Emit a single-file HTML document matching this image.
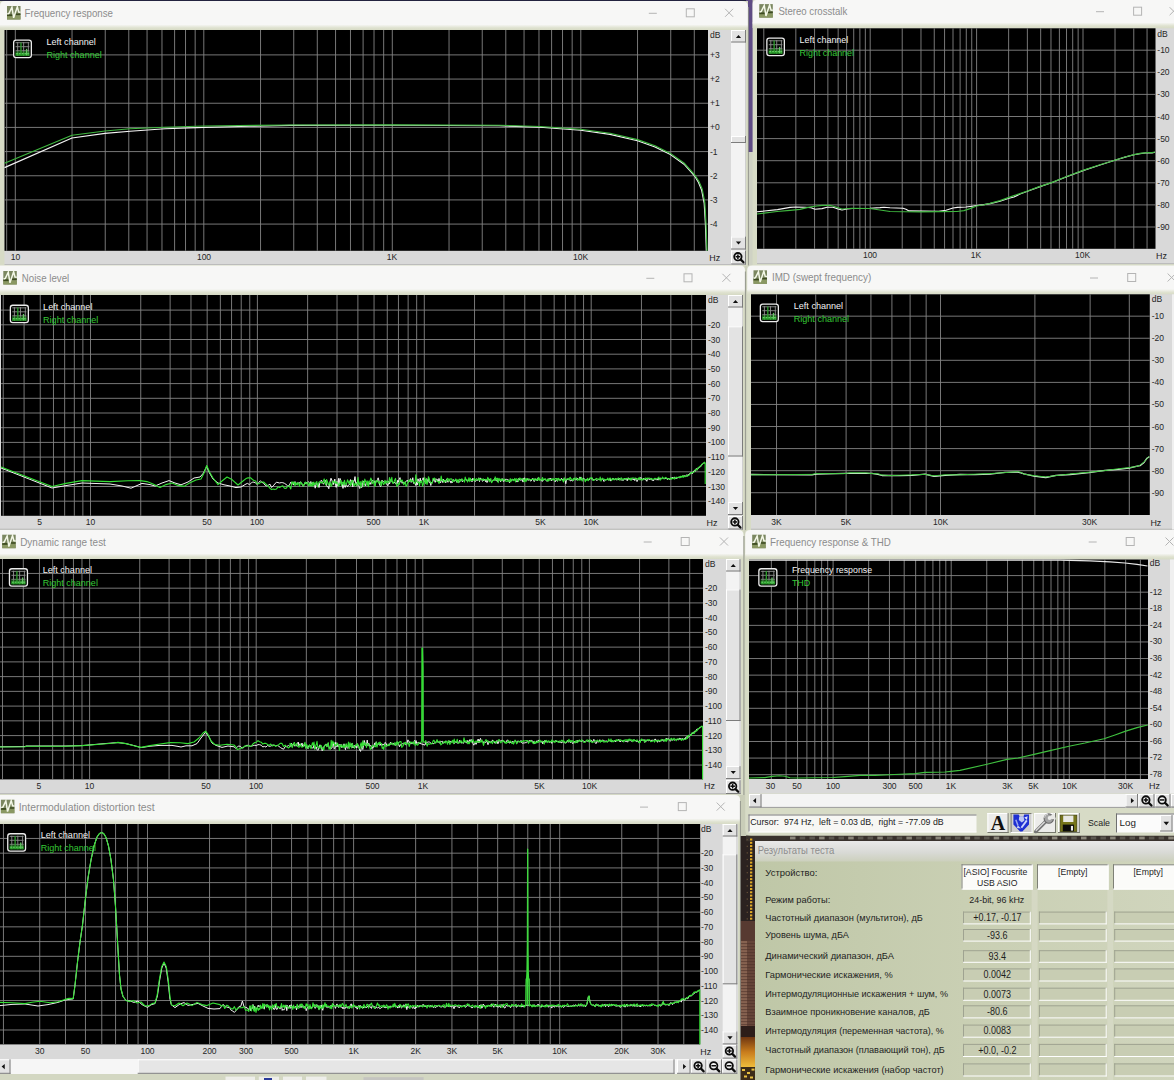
<!DOCTYPE html>
<html lang="en"><head><meta charset="utf-8"><title>RMAA results</title>
<style>html,body{margin:0;padding:0;background:#23233f;}body{width:1174px;height:1080px;overflow:hidden;position:relative;}svg{position:absolute;left:0;top:0;display:block;}svg text{font-family:"Liberation Sans",sans-serif;}</style></head><body>
<svg width="1174" height="1080" viewBox="0 0 1174 1080">
<defs>
<linearGradient id="tb" x1="0" y1="0" x2="0" y2="1"><stop offset="0" stop-color="#f7f7f6"/><stop offset="0.6" stop-color="#dfe2d0"/><stop offset="1" stop-color="#d7dbc6"/></linearGradient>
<linearGradient id="hdr" x1="0" y1="0" x2="0" y2="1"><stop offset="0" stop-color="#e9e9e9"/><stop offset="0.55" stop-color="#d9dad6"/><stop offset="1" stop-color="#ccd0bd"/></linearGradient>
<linearGradient id="panel" x1="0" y1="0" x2="1" y2="0"><stop offset="0" stop-color="#bfc7a7"/><stop offset="0.5" stop-color="#c9cfb3"/><stop offset="1" stop-color="#d0d5bd"/></linearGradient>
<linearGradient id="photo" x1="0" y1="0" x2="0" y2="1"><stop offset="0" stop-color="#3a2c2a"/><stop offset="0.35" stop-color="#5a3f36"/><stop offset="0.7" stop-color="#7a5440"/><stop offset="0.88" stop-color="#b07a2c"/><stop offset="1" stop-color="#d8a030"/></linearGradient>
<linearGradient id="gold" x1="0" y1="0" x2="0" y2="1"><stop offset="0" stop-color="#6e3612"/><stop offset="0.5" stop-color="#c87c1c"/><stop offset="1" stop-color="#efbd3c"/></linearGradient>
</defs>
<rect x="0.00" y="0.00" width="1174.00" height="1080.00" fill="#cdd1bd" />
<rect x="0.00" y="0.00" width="1174.00" height="6.00" fill="#23233f" />
<rect x="746.00" y="0.00" width="8.00" height="152.00" fill="#5f4c85" />
<rect x="746.00" y="152.00" width="8.00" height="114.00" fill="#cfd2c4" />
<rect x="0.00" y="1.00" width="748.00" height="265.00" fill="#d7dbc6" />
<path d="M0,25.5 L0,6 Q0,1 5,1 L742,1 Q748,1 748,7 L748,25.5 Z" fill="#f7f7f6"/>
<rect x="0" y="24.50" width="748" height="5.5" fill="url(#tb)"/>
<line x1="748.40" y1="7.00" x2="748.40" y2="266.00" stroke="#8f9188" stroke-width="0.9" />
<g transform="translate(7.00,6.00) scale(0.993)">
<rect x="0" y="0" width="13.6" height="13.6" fill="#7b8760"/>
<rect x="0" y="9.6" width="13.6" height="4" fill="#8a9863"/>
<rect x="0" y="8.4" width="6" height="1.8" fill="#3c4b1f"/>
<rect x="8.6" y="7.6" width="5" height="1.5" fill="#3c4b1f"/>
<polyline points="0.3,8 2,7.4 5,1.3 6.7,11.9 10.4,0.8 11.8,6.1 13.6,6.3" fill="none" stroke="#f4f8e8" stroke-width="1.5" stroke-linejoin="miter"/>
</g>
<text x="24.50" y="16.80" font-size="10.6" fill="#8c8c8c" text-anchor="start" textLength="88.5" lengthAdjust="spacingAndGlyphs" >Frequency response</text>
<line x1="648.80" y1="13.30" x2="656.80" y2="13.30" stroke="#b4b4b4" stroke-width="1" />
<rect x="686.30" y="8.80" width="8" height="8" fill="none" stroke="#b4b4b4" stroke-width="1"/>
<line x1="725.10" y1="8.80" x2="733.10" y2="16.80" stroke="#b4b4b4" stroke-width="1" />
<line x1="725.10" y1="16.80" x2="733.10" y2="8.80" stroke="#b4b4b4" stroke-width="1" />
<rect x="4.50" y="30.00" width="741.50" height="235.00" fill="#d9d9d9" />
<rect x="4.50" y="30.00" width="703.50" height="220.80" fill="#000000" />
<g stroke="#848484" stroke-width="0.9">
<line x1="6.67" y1="30" x2="6.67" y2="250.8"/>
<line x1="15.30" y1="30" x2="15.30" y2="250.8"/>
<line x1="72.04" y1="30" x2="72.04" y2="250.8"/>
<line x1="105.24" y1="30" x2="105.24" y2="250.8"/>
<line x1="128.79" y1="30" x2="128.79" y2="250.8"/>
<line x1="147.06" y1="30" x2="147.06" y2="250.8"/>
<line x1="161.98" y1="30" x2="161.98" y2="250.8"/>
<line x1="174.60" y1="30" x2="174.60" y2="250.8"/>
<line x1="185.53" y1="30" x2="185.53" y2="250.8"/>
<line x1="195.17" y1="30" x2="195.17" y2="250.8"/>
<line x1="203.80" y1="30" x2="203.80" y2="250.8"/>
<line x1="260.54" y1="30" x2="260.54" y2="250.8"/>
<line x1="293.74" y1="30" x2="293.74" y2="250.8"/>
<line x1="317.29" y1="30" x2="317.29" y2="250.8"/>
<line x1="335.56" y1="30" x2="335.56" y2="250.8"/>
<line x1="350.48" y1="30" x2="350.48" y2="250.8"/>
<line x1="363.10" y1="30" x2="363.10" y2="250.8"/>
<line x1="374.03" y1="30" x2="374.03" y2="250.8"/>
<line x1="383.67" y1="30" x2="383.67" y2="250.8"/>
<line x1="392.30" y1="30" x2="392.30" y2="250.8"/>
<line x1="449.04" y1="30" x2="449.04" y2="250.8"/>
<line x1="482.24" y1="30" x2="482.24" y2="250.8"/>
<line x1="505.79" y1="30" x2="505.79" y2="250.8"/>
<line x1="524.06" y1="30" x2="524.06" y2="250.8"/>
<line x1="538.98" y1="30" x2="538.98" y2="250.8"/>
<line x1="551.60" y1="30" x2="551.60" y2="250.8"/>
<line x1="562.53" y1="30" x2="562.53" y2="250.8"/>
<line x1="572.17" y1="30" x2="572.17" y2="250.8"/>
<line x1="580.80" y1="30" x2="580.80" y2="250.8"/>
<line x1="637.54" y1="30" x2="637.54" y2="250.8"/>
<line x1="670.74" y1="30" x2="670.74" y2="250.8"/>
<line x1="694.29" y1="30" x2="694.29" y2="250.8"/>
<line x1="4.5" y1="54.90" x2="708" y2="54.90"/>
<line x1="4.5" y1="79.07" x2="708" y2="79.07"/>
<line x1="4.5" y1="103.24" x2="708" y2="103.24"/>
<line x1="4.5" y1="127.41" x2="708" y2="127.41"/>
<line x1="4.5" y1="151.58" x2="708" y2="151.58"/>
<line x1="4.5" y1="175.75" x2="708" y2="175.75"/>
<line x1="4.5" y1="199.92" x2="708" y2="199.92"/>
<line x1="4.5" y1="224.09" x2="708" y2="224.09"/>
</g>
<line x1="4.50" y1="264.60" x2="746.00" y2="264.60" stroke="#b9b9b9" stroke-width="1" />
<polyline points="4.5,167.6 72.0,138.0 105.0,133.4 130.0,131.2 165.0,128.8 204.0,127.4 250.0,126.3 290.0,125.4 392.0,125.2 499.0,125.8 540.0,127.3 580.6,130.3 610.0,134.4 637.5,140.8 655.0,147.0 670.4,154.6 684.0,164.2 694.5,175.8 698.5,182.5 701.6,190.0 704.2,203.5 705.4,224.0 706.3,250.8" fill="none" stroke="#f4f4f4" stroke-width="1.15" stroke-linejoin="round" />
<polyline points="4.5,163.3 72.0,135.3 105.0,131.0 130.0,128.8 165.0,127.2 204.0,126.0 290.0,125.0 392.0,124.8 499.0,125.2 540.0,126.5 580.6,129.3 610.0,133.2 637.5,139.6 655.0,145.8 670.4,153.4 684.0,163.0 694.5,174.6 699.0,181.5 702.2,189.0 704.8,202.5 706.0,223.0 707.0,250.8" fill="none" stroke="#3fb83f" stroke-width="1.15" stroke-linejoin="round" />
<rect x="13.65" y="40.05" width="17.70" height="17.60" rx="2.4" fill="#030603" stroke="#ececec" stroke-width="1.3"/>
<line x1="17.66" y1="42.00" x2="17.66" y2="55.70" stroke="#909090" stroke-width="0.9" />
<line x1="23.64" y1="42.00" x2="23.64" y2="55.70" stroke="#909090" stroke-width="0.9" />
<line x1="28.39" y1="42.00" x2="28.39" y2="55.70" stroke="#909090" stroke-width="0.9" />
<line x1="15.60" y1="42.71" x2="29.40" y2="42.71" stroke="#909090" stroke-width="0.9" />
<line x1="15.60" y1="46.68" x2="29.40" y2="46.68" stroke="#909090" stroke-width="0.9" />
<line x1="15.60" y1="50.74" x2="29.40" y2="50.74" stroke="#909090" stroke-width="0.9" />
<rect x="15.40" y="52.70" width="14.20" height="3.2" fill="#2cab2c" opacity="0.85"/>
<rect x="15.40" y="51.10" width="14.20" height="1.8" fill="#2a8a2a" opacity="0.55"/>
<line x1="20.98" y1="42.40" x2="20.98" y2="55.30" stroke="#2f9f2f" stroke-width="1.3" />
<line x1="26.59" y1="48.85" x2="26.59" y2="55.30" stroke="#63c763" stroke-width="1.3" />
<line x1="16.20" y1="53.70" x2="28.80" y2="53.70" stroke="#7fe07f" stroke-width="0.8" stroke-dasharray="1.6 1.2"/>
<text x="46.50" y="44.60" font-size="9.6" fill="#f2f2f2" text-anchor="start" textLength="49.3" lengthAdjust="spacingAndGlyphs" >Left channel</text>
<text x="46.50" y="57.80" font-size="9.6" fill="#36c936" text-anchor="start" textLength="55.2" lengthAdjust="spacingAndGlyphs" >Right channel</text>
<text transform="translate(710.00,38.20) scale(0.87,1)" font-size="9.8" fill="#262626" text-anchor="start" >dB</text>
<text transform="translate(710.00,57.90) scale(0.87,1)" font-size="9.8" fill="#262626" text-anchor="start" >+3</text>
<text transform="translate(710.00,82.07) scale(0.87,1)" font-size="9.8" fill="#262626" text-anchor="start" >+2</text>
<text transform="translate(710.00,106.24) scale(0.87,1)" font-size="9.8" fill="#262626" text-anchor="start" >+1</text>
<text transform="translate(710.00,130.41) scale(0.87,1)" font-size="9.8" fill="#262626" text-anchor="start" >+0</text>
<text transform="translate(710.00,154.58) scale(0.87,1)" font-size="9.8" fill="#262626" text-anchor="start" >-1</text>
<text transform="translate(710.00,178.75) scale(0.87,1)" font-size="9.8" fill="#262626" text-anchor="start" >-2</text>
<text transform="translate(710.00,202.92) scale(0.87,1)" font-size="9.8" fill="#262626" text-anchor="start" >-3</text>
<text transform="translate(710.00,227.09) scale(0.87,1)" font-size="9.8" fill="#262626" text-anchor="start" >-4</text>
<text transform="translate(15.50,260.20) scale(0.87,1)" font-size="9.8" fill="#262626" text-anchor="middle" >10</text>
<text transform="translate(204.00,260.20) scale(0.87,1)" font-size="9.8" fill="#262626" text-anchor="middle" >100</text>
<text transform="translate(392.00,260.20) scale(0.87,1)" font-size="9.8" fill="#262626" text-anchor="middle" >1K</text>
<text transform="translate(580.50,260.20) scale(0.87,1)" font-size="9.8" fill="#262626" text-anchor="middle" >10K</text>
<text transform="translate(709.30,261.00) scale(0.93,1)" font-size="9.6" fill="#262626" text-anchor="start" >Hz</text>
<rect x="731.00" y="30.00" width="15.00" height="219.50" fill="#f3f3f3" />
<line x1="745.50" y1="30.00" x2="745.50" y2="249.50" stroke="#cfcfcf" stroke-width="1" />
<rect x="731.00" y="30.00" width="15.00" height="12.50" fill="#e2e2e2" />
<line x1="731.00" y1="30.50" x2="746.00" y2="30.50" stroke="#ffffff" stroke-width="1" />
<line x1="731.50" y1="30.00" x2="731.50" y2="42.50" stroke="#ffffff" stroke-width="1" />
<line x1="731.00" y1="42.00" x2="746.00" y2="42.00" stroke="#7c7c7c" stroke-width="1" />
<line x1="745.50" y1="30.00" x2="745.50" y2="42.50" stroke="#7c7c7c" stroke-width="1" />
<polygon points="735.90,38.06 741.10,38.06 738.50,34.94" fill="#101010"/>
<rect x="731.00" y="236.50" width="15.00" height="13.00" fill="#e2e2e2" />
<line x1="731.00" y1="237.00" x2="746.00" y2="237.00" stroke="#ffffff" stroke-width="1" />
<line x1="731.50" y1="236.50" x2="731.50" y2="249.50" stroke="#ffffff" stroke-width="1" />
<line x1="731.00" y1="249.00" x2="746.00" y2="249.00" stroke="#7c7c7c" stroke-width="1" />
<line x1="745.50" y1="236.50" x2="745.50" y2="249.50" stroke="#7c7c7c" stroke-width="1" />
<polygon points="735.90,241.44 741.10,241.44 738.50,244.56" fill="#101010"/>
<rect x="731.00" y="136.00" width="15.00" height="7.00" fill="#e3e3e3" />
<line x1="731.00" y1="136.50" x2="746.00" y2="136.50" stroke="#ffffff" stroke-width="1" />
<line x1="731.50" y1="136.00" x2="731.50" y2="143.00" stroke="#ffffff" stroke-width="1" />
<line x1="731.00" y1="142.50" x2="746.00" y2="142.50" stroke="#7c7c7c" stroke-width="1" />
<line x1="745.50" y1="136.00" x2="745.50" y2="143.00" stroke="#7c7c7c" stroke-width="1" />
<rect x="731.00" y="250.50" width="15.00" height="14.00" fill="#e4e4e4" />
<line x1="731.00" y1="251.00" x2="746.00" y2="251.00" stroke="#ffffff" stroke-width="1" />
<line x1="731.50" y1="250.50" x2="731.50" y2="264.50" stroke="#ffffff" stroke-width="1" />
<line x1="731.00" y1="264.00" x2="746.00" y2="264.00" stroke="#7c7c7c" stroke-width="1" />
<line x1="745.50" y1="250.50" x2="745.50" y2="264.50" stroke="#7c7c7c" stroke-width="1" />
<circle cx="737.90" cy="256.70" r="3.7" fill="#f2f2f2" stroke="#0c0c0c" stroke-width="1.8"/>
<line x1="740.80" y1="259.60" x2="743.50" y2="262.30" stroke="#0c0c0c" stroke-width="2.2" stroke-linecap="round"/>
<line x1="735.60" y1="256.70" x2="740.20" y2="256.70" stroke="#0c0c0c" stroke-width="1.5" />
<line x1="737.90" y1="254.40" x2="737.90" y2="259.00" stroke="#0c0c0c" stroke-width="1.5" />
<rect x="752.60" y="0.00" width="427.40" height="266.00" fill="#d7dbc6" />
<path d="M752.6,23.5 L752.6,4 Q752.6,0 756.6,0 L1180,0 Q1180,0 1180,0 L1180,23.5 Z" fill="#f7f7f6"/>
<rect x="752.6" y="22.50" width="427.4" height="5.5" fill="url(#tb)"/>
<g transform="translate(759.30,4.10) scale(0.993)">
<rect x="0" y="0" width="13.6" height="13.6" fill="#7b8760"/>
<rect x="0" y="9.6" width="13.6" height="4" fill="#8a9863"/>
<rect x="0" y="8.4" width="6" height="1.8" fill="#3c4b1f"/>
<rect x="8.6" y="7.6" width="5" height="1.5" fill="#3c4b1f"/>
<polyline points="0.3,8 2,7.4 5,1.3 6.7,11.9 10.4,0.8 11.8,6.1 13.6,6.3" fill="none" stroke="#f4f8e8" stroke-width="1.5" stroke-linejoin="miter"/>
</g>
<text x="778.40" y="15.20" font-size="10.6" fill="#8c8c8c" text-anchor="start" textLength="68.8" lengthAdjust="spacingAndGlyphs" >Stereo crosstalk</text>
<line x1="1096.00" y1="11.70" x2="1104.00" y2="11.70" stroke="#b4b4b4" stroke-width="1" />
<rect x="1133.60" y="7.20" width="8" height="8" fill="none" stroke="#b4b4b4" stroke-width="1"/>
<line x1="1169.60" y1="7.20" x2="1177.60" y2="15.20" stroke="#b4b4b4" stroke-width="1" />
<line x1="1169.60" y1="15.20" x2="1177.60" y2="7.20" stroke="#b4b4b4" stroke-width="1" />
<rect x="757.00" y="28.30" width="417.00" height="235.70" fill="#d9d9d9" />
<rect x="757.00" y="28.30" width="398.50" height="220.50" fill="#000000" />
<g stroke="#848484" stroke-width="0.9">
<line x1="763.80" y1="28.3" x2="763.80" y2="248.8"/>
<line x1="795.83" y1="28.3" x2="795.83" y2="248.8"/>
<line x1="814.57" y1="28.3" x2="814.57" y2="248.8"/>
<line x1="827.86" y1="28.3" x2="827.86" y2="248.8"/>
<line x1="838.17" y1="28.3" x2="838.17" y2="248.8"/>
<line x1="846.60" y1="28.3" x2="846.60" y2="248.8"/>
<line x1="853.72" y1="28.3" x2="853.72" y2="248.8"/>
<line x1="859.89" y1="28.3" x2="859.89" y2="248.8"/>
<line x1="865.33" y1="28.3" x2="865.33" y2="248.8"/>
<line x1="870.20" y1="28.3" x2="870.20" y2="248.8"/>
<line x1="902.23" y1="28.3" x2="902.23" y2="248.8"/>
<line x1="920.97" y1="28.3" x2="920.97" y2="248.8"/>
<line x1="934.26" y1="28.3" x2="934.26" y2="248.8"/>
<line x1="944.57" y1="28.3" x2="944.57" y2="248.8"/>
<line x1="953.00" y1="28.3" x2="953.00" y2="248.8"/>
<line x1="960.12" y1="28.3" x2="960.12" y2="248.8"/>
<line x1="966.29" y1="28.3" x2="966.29" y2="248.8"/>
<line x1="971.73" y1="28.3" x2="971.73" y2="248.8"/>
<line x1="976.60" y1="28.3" x2="976.60" y2="248.8"/>
<line x1="1008.63" y1="28.3" x2="1008.63" y2="248.8"/>
<line x1="1027.37" y1="28.3" x2="1027.37" y2="248.8"/>
<line x1="1040.66" y1="28.3" x2="1040.66" y2="248.8"/>
<line x1="1050.97" y1="28.3" x2="1050.97" y2="248.8"/>
<line x1="1059.40" y1="28.3" x2="1059.40" y2="248.8"/>
<line x1="1066.52" y1="28.3" x2="1066.52" y2="248.8"/>
<line x1="1072.69" y1="28.3" x2="1072.69" y2="248.8"/>
<line x1="1078.13" y1="28.3" x2="1078.13" y2="248.8"/>
<line x1="1083.00" y1="28.3" x2="1083.00" y2="248.8"/>
<line x1="1115.03" y1="28.3" x2="1115.03" y2="248.8"/>
<line x1="1133.77" y1="28.3" x2="1133.77" y2="248.8"/>
<line x1="1147.06" y1="28.3" x2="1147.06" y2="248.8"/>
<line x1="757" y1="50.20" x2="1155.5" y2="50.20"/>
<line x1="757" y1="72.30" x2="1155.5" y2="72.30"/>
<line x1="757" y1="94.40" x2="1155.5" y2="94.40"/>
<line x1="757" y1="116.50" x2="1155.5" y2="116.50"/>
<line x1="757" y1="138.60" x2="1155.5" y2="138.60"/>
<line x1="757" y1="160.70" x2="1155.5" y2="160.70"/>
<line x1="757" y1="182.80" x2="1155.5" y2="182.80"/>
<line x1="757" y1="204.90" x2="1155.5" y2="204.90"/>
<line x1="757" y1="227.00" x2="1155.5" y2="227.00"/>
</g>
<line x1="757.00" y1="263.60" x2="1174.00" y2="263.60" stroke="#b9b9b9" stroke-width="1" />
<polyline points="757.0,211.8 777.5,209.6 790.0,207.4 796.0,207.0 805.0,207.2 811.0,207.7 815.0,209.2 822.0,208.6 827.0,207.2 833.0,207.2 838.0,209.0 842.0,210.0 847.0,209.0 852.4,208.5 870.0,208.2 880.0,207.6 884.0,207.2 890.0,207.8 903.0,208.3 906.0,209.2 909.0,210.9 925.0,211.1 938.6,211.3 946.0,210.3 953.0,208.0 957.4,207.4 966.0,207.0 972.0,206.2 976.5,205.5 984.0,204.6 990.0,203.6 1000.0,201.2 1009.0,198.2 1014.0,197.0 1020.0,194.0 1027.5,191.2 1040.0,186.6 1051.5,182.8 1066.0,177.0 1083.0,170.6 1100.0,165.0 1114.8,160.3 1125.0,157.1 1134.0,154.7 1140.0,153.6 1147.6,152.8 1152.0,152.9 1155.0,152.2" fill="none" stroke="#f4f4f4" stroke-width="1.15" stroke-linejoin="round" />
<polyline points="757.0,214.0 777.0,211.5 790.0,210.4 800.0,209.4 808.0,207.4 815.0,206.2 822.0,205.4 830.0,205.3 836.0,207.0 842.0,209.0 852.0,208.3 870.0,208.5 880.0,210.0 890.0,211.5 905.0,211.8 920.0,211.8 940.0,211.6 957.0,211.5 964.0,210.6 970.0,208.6 976.5,206.0 984.0,204.8 990.0,203.4 1000.0,200.6 1009.0,197.4 1014.0,195.6 1020.0,193.6 1027.5,191.0 1040.0,186.4 1051.5,182.6 1066.0,176.8 1083.0,170.4 1100.0,164.8 1114.8,160.2 1125.0,157.0 1134.0,154.6 1140.0,153.4 1147.6,152.6 1152.0,152.6 1155.0,152.0" fill="none" stroke="#3fb83f" stroke-width="1.15" stroke-linejoin="round" />
<rect x="766.85" y="38.15" width="17.50" height="17.40" rx="2.4" fill="#030603" stroke="#ececec" stroke-width="1.3"/>
<line x1="770.81" y1="40.10" x2="770.81" y2="53.60" stroke="#909090" stroke-width="0.9" />
<line x1="776.73" y1="40.10" x2="776.73" y2="53.60" stroke="#909090" stroke-width="0.9" />
<line x1="781.43" y1="40.10" x2="781.43" y2="53.60" stroke="#909090" stroke-width="0.9" />
<line x1="768.80" y1="40.77" x2="782.40" y2="40.77" stroke="#909090" stroke-width="0.9" />
<line x1="768.80" y1="44.70" x2="782.40" y2="44.70" stroke="#909090" stroke-width="0.9" />
<line x1="768.80" y1="48.72" x2="782.40" y2="48.72" stroke="#909090" stroke-width="0.9" />
<rect x="768.60" y="50.60" width="14.00" height="3.2" fill="#2cab2c" opacity="0.85"/>
<rect x="768.60" y="49.00" width="14.00" height="1.8" fill="#2a8a2a" opacity="0.55"/>
<line x1="774.10" y1="40.50" x2="774.10" y2="53.20" stroke="#2f9f2f" stroke-width="1.3" />
<line x1="779.64" y1="46.85" x2="779.64" y2="53.20" stroke="#63c763" stroke-width="1.3" />
<line x1="769.40" y1="51.60" x2="781.80" y2="51.60" stroke="#7fe07f" stroke-width="0.8" stroke-dasharray="1.6 1.2"/>
<text x="799.60" y="42.80" font-size="9.6" fill="#f2f2f2" text-anchor="start" textLength="48.7" lengthAdjust="spacingAndGlyphs" >Left channel</text>
<text x="799.60" y="55.80" font-size="9.6" fill="#36c936" text-anchor="start" textLength="54.4" lengthAdjust="spacingAndGlyphs" >Right channel</text>
<text transform="translate(1157.30,36.70) scale(0.87,1)" font-size="9.8" fill="#262626" text-anchor="start" >dB</text>
<text transform="translate(1157.30,53.20) scale(0.87,1)" font-size="9.8" fill="#262626" text-anchor="start" >-10</text>
<text transform="translate(1157.30,75.30) scale(0.87,1)" font-size="9.8" fill="#262626" text-anchor="start" >-20</text>
<text transform="translate(1157.30,97.40) scale(0.87,1)" font-size="9.8" fill="#262626" text-anchor="start" >-30</text>
<text transform="translate(1157.30,119.50) scale(0.87,1)" font-size="9.8" fill="#262626" text-anchor="start" >-40</text>
<text transform="translate(1157.30,141.60) scale(0.87,1)" font-size="9.8" fill="#262626" text-anchor="start" >-50</text>
<text transform="translate(1157.30,163.70) scale(0.87,1)" font-size="9.8" fill="#262626" text-anchor="start" >-60</text>
<text transform="translate(1157.30,185.80) scale(0.87,1)" font-size="9.8" fill="#262626" text-anchor="start" >-70</text>
<text transform="translate(1157.30,207.90) scale(0.87,1)" font-size="9.8" fill="#262626" text-anchor="start" >-80</text>
<text transform="translate(1157.30,230.00) scale(0.87,1)" font-size="9.8" fill="#262626" text-anchor="start" >-90</text>
<text transform="translate(870.00,257.90) scale(0.87,1)" font-size="9.8" fill="#262626" text-anchor="middle" >100</text>
<text transform="translate(976.00,257.90) scale(0.87,1)" font-size="9.8" fill="#262626" text-anchor="middle" >1K</text>
<text transform="translate(1082.50,257.90) scale(0.87,1)" font-size="9.8" fill="#262626" text-anchor="middle" >10K</text>
<text transform="translate(1156.00,258.50) scale(0.93,1)" font-size="9.6" fill="#262626" text-anchor="start" >Hz</text>
<rect x="0.00" y="265.50" width="745.00" height="265.50" fill="#d7dbc6" />
<path d="M0,290.0 L0,265.5 Q0,265.5 0,265.5 L740,265.5 Q745,265.5 745,270.5 L745,290.0 Z" fill="#f7f7f6"/>
<rect x="0" y="289.00" width="745" height="5.5" fill="url(#tb)"/>
<line x1="745.40" y1="271.50" x2="745.40" y2="531.00" stroke="#8f9188" stroke-width="0.9" />
<g transform="translate(3.30,271.00) scale(0.993)">
<rect x="0" y="0" width="13.6" height="13.6" fill="#7b8760"/>
<rect x="0" y="9.6" width="13.6" height="4" fill="#8a9863"/>
<rect x="0" y="8.4" width="6" height="1.8" fill="#3c4b1f"/>
<rect x="8.6" y="7.6" width="5" height="1.5" fill="#3c4b1f"/>
<polyline points="0.3,8 2,7.4 5,1.3 6.7,11.9 10.4,0.8 11.8,6.1 13.6,6.3" fill="none" stroke="#f4f8e8" stroke-width="1.5" stroke-linejoin="miter"/>
</g>
<text x="21.80" y="281.80" font-size="10.6" fill="#8c8c8c" text-anchor="start" textLength="47.4" lengthAdjust="spacingAndGlyphs" >Noise level</text>
<line x1="646.30" y1="278.30" x2="654.30" y2="278.30" stroke="#b4b4b4" stroke-width="1" />
<rect x="684.00" y="273.80" width="8" height="8" fill="none" stroke="#b4b4b4" stroke-width="1"/>
<line x1="722.40" y1="273.80" x2="730.40" y2="281.80" stroke="#b4b4b4" stroke-width="1" />
<line x1="722.40" y1="281.80" x2="730.40" y2="273.80" stroke="#b4b4b4" stroke-width="1" />
<rect x="0.00" y="295.00" width="743.00" height="234.50" fill="#d9d9d9" />
<rect x="1.00" y="295.00" width="705.00" height="220.80" fill="#000000" />
<g stroke="#848484" stroke-width="0.9">
<line x1="3.23" y1="295" x2="3.23" y2="515.8"/>
<line x1="24.08" y1="295" x2="24.08" y2="515.8"/>
<line x1="40.26" y1="295" x2="40.26" y2="515.8"/>
<line x1="53.47" y1="295" x2="53.47" y2="515.8"/>
<line x1="64.65" y1="295" x2="64.65" y2="515.8"/>
<line x1="74.33" y1="295" x2="74.33" y2="515.8"/>
<line x1="82.86" y1="295" x2="82.86" y2="515.8"/>
<line x1="90.50" y1="295" x2="90.50" y2="515.8"/>
<line x1="140.74" y1="295" x2="140.74" y2="515.8"/>
<line x1="170.13" y1="295" x2="170.13" y2="515.8"/>
<line x1="190.98" y1="295" x2="190.98" y2="515.8"/>
<line x1="207.16" y1="295" x2="207.16" y2="515.8"/>
<line x1="220.37" y1="295" x2="220.37" y2="515.8"/>
<line x1="231.55" y1="295" x2="231.55" y2="515.8"/>
<line x1="241.23" y1="295" x2="241.23" y2="515.8"/>
<line x1="249.76" y1="295" x2="249.76" y2="515.8"/>
<line x1="257.40" y1="295" x2="257.40" y2="515.8"/>
<line x1="307.64" y1="295" x2="307.64" y2="515.8"/>
<line x1="337.03" y1="295" x2="337.03" y2="515.8"/>
<line x1="357.88" y1="295" x2="357.88" y2="515.8"/>
<line x1="374.06" y1="295" x2="374.06" y2="515.8"/>
<line x1="387.27" y1="295" x2="387.27" y2="515.8"/>
<line x1="398.45" y1="295" x2="398.45" y2="515.8"/>
<line x1="408.13" y1="295" x2="408.13" y2="515.8"/>
<line x1="416.66" y1="295" x2="416.66" y2="515.8"/>
<line x1="424.30" y1="295" x2="424.30" y2="515.8"/>
<line x1="474.54" y1="295" x2="474.54" y2="515.8"/>
<line x1="503.93" y1="295" x2="503.93" y2="515.8"/>
<line x1="524.78" y1="295" x2="524.78" y2="515.8"/>
<line x1="540.96" y1="295" x2="540.96" y2="515.8"/>
<line x1="554.17" y1="295" x2="554.17" y2="515.8"/>
<line x1="565.35" y1="295" x2="565.35" y2="515.8"/>
<line x1="575.03" y1="295" x2="575.03" y2="515.8"/>
<line x1="583.56" y1="295" x2="583.56" y2="515.8"/>
<line x1="591.20" y1="295" x2="591.20" y2="515.8"/>
<line x1="641.44" y1="295" x2="641.44" y2="515.8"/>
<line x1="670.83" y1="295" x2="670.83" y2="515.8"/>
<line x1="691.68" y1="295" x2="691.68" y2="515.8"/>
<line x1="1" y1="310.10" x2="706" y2="310.10"/>
<line x1="1" y1="324.80" x2="706" y2="324.80"/>
<line x1="1" y1="339.50" x2="706" y2="339.50"/>
<line x1="1" y1="354.20" x2="706" y2="354.20"/>
<line x1="1" y1="368.90" x2="706" y2="368.90"/>
<line x1="1" y1="383.60" x2="706" y2="383.60"/>
<line x1="1" y1="398.30" x2="706" y2="398.30"/>
<line x1="1" y1="413.00" x2="706" y2="413.00"/>
<line x1="1" y1="427.70" x2="706" y2="427.70"/>
<line x1="1" y1="442.40" x2="706" y2="442.40"/>
<line x1="1" y1="457.10" x2="706" y2="457.10"/>
<line x1="1" y1="471.80" x2="706" y2="471.80"/>
<line x1="1" y1="486.50" x2="706" y2="486.50"/>
<line x1="1" y1="501.20" x2="706" y2="501.20"/>
</g>
<line x1="0.00" y1="529.20" x2="743.00" y2="529.20" stroke="#b9b9b9" stroke-width="1" />
<polyline points="1.0,468.0 52.0,488.0 66.0,485.6 82.0,483.0 110.0,484.0 122.0,486.0 131.0,488.2 142.0,483.4 150.0,484.6 155.0,486.0 162.0,483.0 169.0,480.6 175.0,483.0 181.0,484.8 188.0,482.0 194.0,478.0 200.0,477.0 203.5,473.0 206.7,466.5 209.5,473.0 213.0,479.0 218.0,483.0 224.0,484.8 230.0,486.0 236.0,487.6 241.0,487.0 246.0,484.0 247.6,483.4 249.2,484.5 250.8,483.6 252.4,482.0 254.0,482.2 255.6,483.0 257.2,484.4 258.8,482.4 260.4,480.8 262.0,482.4 263.6,483.2 265.2,485.3 266.8,486.0 268.4,485.1 270.0,484.2 271.6,487.5 273.2,485.9 274.8,484.0 276.4,482.2 278.0,482.6 279.6,483.0 281.2,482.6 282.8,482.7 284.4,483.3 286.0,484.4 287.6,485.8 289.2,485.5 290.8,482.1 292.0,483.9 292.8,482.5 293.5,485.1 294.2,482.9 295.0,481.6 295.8,484.6 296.5,484.1 297.2,484.5 298.0,482.5 298.8,484.0 299.5,482.7 300.2,481.9 301.0,482.3 301.8,484.3 302.5,484.1 303.2,486.2 304.0,485.1 304.8,482.7 305.5,483.9 306.2,482.1 307.0,483.4 307.8,482.2 308.5,481.7 309.2,482.5 310.0,485.5 310.8,481.5 311.5,484.0 312.2,484.1 313.0,482.3 313.8,483.7 314.5,483.9 315.2,488.2 316.0,484.3 316.8,483.4 317.5,486.2 318.2,484.2 319.0,487.5 319.8,482.6 320.5,482.3 321.2,480.3 322.0,480.8 322.8,483.5 323.5,484.1 324.2,482.8 325.0,482.1 325.8,480.3 326.5,485.2 327.2,486.7 328.0,486.5 328.8,488.7 329.5,484.2 330.2,481.2 331.0,478.2 331.8,480.1 332.5,482.3 333.2,484.7 334.0,482.0 334.8,479.0 335.5,485.6 336.2,487.4 337.0,481.5 337.8,486.1 338.5,478.4 339.2,484.4 340.0,478.4 340.8,480.6 341.5,485.2 342.2,484.1 343.0,488.4 343.8,483.2 344.5,486.5 345.2,487.4 346.0,484.6 346.8,485.2 347.5,486.8 348.2,485.5 349.0,485.1 349.8,483.6 350.5,479.6 351.2,481.0 352.0,481.2 352.8,486.9 353.5,480.8 354.2,481.3 355.0,476.6 355.8,484.0 356.5,482.5 357.2,484.8 358.0,485.3 358.8,485.3 359.5,488.3 360.2,488.2 361.0,487.3 361.8,487.5 362.5,484.4 363.2,480.9 364.0,484.8 364.8,484.2 365.5,485.8 366.2,482.7 367.0,483.6 367.8,482.2 368.5,485.4 369.2,484.1 370.0,482.4 370.8,484.4 371.5,481.3 372.2,480.6 373.0,480.9 373.8,482.1 374.5,481.4 375.2,483.8 376.0,480.9 376.8,482.0 377.5,479.4 378.2,477.8 379.0,481.0 379.8,485.4 380.5,486.6 381.2,485.6 382.0,480.1 382.8,481.9 383.5,481.6 384.2,482.2 385.0,482.9 385.8,482.4 386.5,483.5 387.2,485.0 388.0,485.8 388.8,481.3 389.5,484.0 390.2,481.5 391.0,479.6 391.8,481.2 392.5,482.4 393.2,483.3 394.0,482.0 394.8,483.1 395.5,483.7 396.2,482.5 397.0,484.1 397.8,480.2 398.5,482.0 399.2,479.5 400.0,477.6 400.8,482.2 401.5,481.2 402.2,483.3 403.0,482.0 403.8,482.8 404.5,483.7 405.2,482.3 406.0,481.1 406.8,480.9 407.5,480.2 408.2,482.0 409.0,481.9 409.8,480.4 410.5,478.6 411.2,482.4 412.0,481.1 412.8,477.7 413.5,483.4 414.2,482.1 415.0,483.1 415.8,485.5 416.5,482.0 417.2,485.0 418.0,478.8 418.8,480.9 419.5,482.5 420.2,478.1 421.0,482.5 421.8,480.4 422.5,479.5 423.2,477.7 424.0,481.6 424.8,479.6 425.5,482.6 426.2,478.8 427.0,479.3 427.8,481.8 428.5,477.6 429.2,482.5 430.0,481.9 430.8,485.5 431.5,482.5 432.2,482.3 433.0,481.1 433.8,478.5 434.5,480.4 435.2,482.4 436.0,478.7 436.8,479.7 437.5,479.6 438.2,482.1 439.0,478.4 439.8,482.1 440.5,483.0 441.2,479.9 442.0,480.8 442.8,482.6 443.5,479.2 444.2,481.8 445.0,480.1 445.8,482.8 446.5,479.1 447.2,480.4 448.0,482.3 448.8,480.6 449.5,480.8 450.2,480.9 451.0,483.1 451.8,481.1 452.5,482.5 453.2,479.5 454.0,480.7 454.8,481.0 455.5,480.2 456.2,480.8 457.0,482.5 457.8,481.7 458.5,481.6 459.2,482.0 460.0,481.6 460.8,479.3 461.5,479.1 462.2,481.5 463.0,481.3 463.8,480.1 464.5,480.2 465.2,479.4 466.0,480.0 466.8,480.1 467.5,481.2 468.2,480.7 469.0,480.1 469.8,479.3 470.5,480.0 471.2,479.1 472.0,481.8 472.8,478.2 473.5,480.1 474.2,479.4 475.0,481.5 475.8,480.9 476.5,480.3 477.2,480.5 478.0,479.9 478.8,477.8 479.5,481.6 480.2,478.1 481.0,478.6 481.8,479.4 482.5,481.4 483.2,480.3 484.0,480.3 484.8,479.2 485.5,481.7 486.2,479.7 487.0,482.6 487.8,480.4 488.5,479.1 489.2,479.0 490.0,480.5 490.8,480.9 491.5,481.7 492.2,481.1 493.0,480.3 493.8,480.4 494.5,478.6 495.2,479.0 496.0,480.8 496.8,480.6 497.5,481.6 498.2,479.0 499.0,480.2 499.8,479.2 500.5,481.7 501.2,480.8 502.0,478.7 502.8,479.2 503.5,481.5 504.2,480.8 505.0,480.9 505.8,479.0 506.5,479.2 507.2,479.9 508.0,479.4 508.8,480.5 509.5,482.9 510.2,481.6 511.0,480.1 511.8,480.6 512.5,479.4 513.2,479.6 514.0,480.3 514.8,479.3 515.5,479.4 516.2,480.7 517.0,482.1 517.8,480.7 518.5,478.7 519.2,478.9 520.0,480.4 520.8,479.8 521.5,480.2 522.2,479.0 523.0,482.1 523.8,478.1 524.5,477.9 525.2,480.9 526.0,479.6 526.8,480.2 527.5,478.5 528.2,480.5 529.0,478.7 529.8,479.7 530.5,481.1 531.2,480.9 532.0,479.6 532.8,478.3 533.5,479.9 534.2,481.6 535.0,480.2 535.8,478.9 536.5,479.4 537.2,480.9 538.0,477.6 538.8,478.2 539.5,479.7 540.2,479.6 541.0,479.5 541.8,481.2 542.5,481.3 543.2,479.3 544.0,480.1 544.8,479.2 545.5,479.7 546.2,480.7 547.0,481.2 547.8,480.9 548.5,478.8 549.2,478.5 550.0,479.2 550.8,478.2 551.5,480.8 552.2,480.1 553.0,479.1 553.8,479.5 554.5,479.8 555.2,481.8 556.0,480.1 556.8,479.9 557.5,481.3 558.2,478.4 559.0,478.8 559.8,480.2 560.5,480.3 561.2,478.5 562.0,478.7 562.8,480.0 563.5,478.9 564.2,478.9 565.0,479.4 565.8,483.7 566.5,479.2 567.2,479.4 568.0,479.5 568.8,479.1 569.5,479.8 570.2,480.8 571.0,480.8 571.8,480.0 572.5,481.1 573.2,480.6 574.0,478.1 574.8,478.6 575.5,479.9 576.2,480.1 577.0,478.6 577.8,478.8 578.5,479.5 579.2,480.0 580.0,476.9 580.8,479.6 581.5,479.7 582.2,479.2 583.0,478.8 583.8,478.2 584.5,479.4 585.2,480.0 586.0,479.7 586.8,479.4 587.5,479.4 588.2,479.5 589.0,480.2 589.8,479.1 590.5,478.3 591.2,478.9 592.0,478.4 592.8,478.8 593.5,479.8 594.2,479.9 595.0,479.6 595.8,479.3 596.5,480.4 597.2,480.5 598.0,479.7 598.8,479.2 599.5,479.5 600.2,479.7 601.0,479.7 601.8,479.1 602.5,478.8 603.2,479.8 604.0,481.5 604.8,480.6 605.5,479.8 606.2,479.7 607.0,479.4 607.8,479.3 608.5,479.2 609.2,480.3 610.0,478.4 610.8,481.0 611.5,480.6 612.2,478.8 613.0,478.2 613.8,478.9 614.5,480.1 615.2,479.1 616.0,478.3 616.8,480.2 617.5,478.8 618.2,479.9 619.0,479.1 619.8,478.3 620.5,479.8 621.2,480.0 622.0,479.9 622.8,480.3 623.5,480.3 624.2,478.7 625.0,479.0 625.8,479.2 626.5,478.3 627.2,480.8 628.0,478.4 628.8,477.9 629.5,479.2 630.2,479.5 631.0,479.9 631.8,479.6 632.5,478.7 633.2,479.9 634.0,478.7 634.8,480.6 635.5,478.6 636.2,478.3 637.0,481.6 637.8,480.1 638.5,478.6 639.2,479.1 640.0,478.8 640.8,477.4 641.5,478.8 642.2,480.2 643.0,478.8 643.8,478.6 644.5,479.3 645.2,479.6 646.0,479.8 646.8,481.3 647.5,479.2 648.2,478.4 649.0,479.7 649.8,479.1 650.5,479.3 651.2,478.2 652.0,480.4 652.8,480.0 653.5,480.8 654.2,479.4 655.0,478.3 655.8,479.7 656.5,479.8 657.2,479.1 658.0,480.2 658.8,477.9 659.5,478.9 660.2,478.0 661.0,478.5 661.8,478.7 662.5,477.6 663.2,478.1 664.0,478.9 664.8,478.5 665.5,478.4 666.2,478.3 667.0,479.3 667.8,479.3 668.5,478.2 669.2,479.1 670.0,479.6 670.8,477.9 671.5,478.9 672.2,477.1 673.0,478.3 673.8,477.4 674.5,477.3 675.2,477.9 676.0,478.9 676.8,477.4 677.5,478.1 678.2,477.5 679.0,477.2 679.8,477.0 680.5,477.1 681.2,476.7 682.0,476.7 682.8,476.0 683.5,476.0 684.2,476.2 685.0,475.5 685.8,476.6 686.5,474.8 687.2,476.3 688.0,474.4 688.8,475.0 689.5,474.1 690.2,472.9 691.0,473.3 691.8,472.8 692.5,473.7 693.2,472.1 694.0,470.6 694.8,470.5 695.5,471.2 696.2,468.7 697.0,469.1 697.8,469.2 698.5,467.5 699.2,467.6 700.0,466.8 700.8,466.6 701.5,464.6 702.2,464.7 703.0,463.5 703.8,463.0 704.5,463.2" fill="none" stroke="#f4f4f4" stroke-width="1.0" stroke-linejoin="round" />
<polyline points="1.0,467.0 52.0,486.5 66.0,483.4 82.0,480.6 110.0,481.6 128.0,480.8 140.0,480.6 147.0,481.6 153.0,484.0 160.0,487.4 166.0,484.6 172.0,483.0 178.0,485.4 184.0,486.4 190.0,482.8 196.0,480.0 201.0,479.0 204.0,473.0 206.7,465.5 209.5,472.0 213.0,478.0 218.0,484.6 222.0,481.0 227.0,477.0 232.0,479.6 238.0,485.0 243.0,481.0 246.0,478.6 247.6,477.9 249.2,477.9 250.8,477.8 252.4,479.5 254.0,480.4 255.6,480.9 257.2,484.0 258.8,483.7 260.4,482.6 262.0,482.0 263.6,482.0 265.2,483.5 266.8,484.9 268.4,486.3 270.0,488.3 271.6,489.6 273.2,489.0 274.8,489.6 276.4,489.1 278.0,486.9 279.6,487.4 281.2,486.6 282.8,485.7 284.4,488.3 286.0,488.4 287.6,486.5 289.2,485.7 290.8,489.0 292.0,481.6 292.8,484.0 293.5,482.1 294.2,482.0 295.0,485.9 295.8,482.5 296.5,484.3 297.2,484.9 298.0,482.4 298.8,484.1 299.5,486.4 300.2,483.4 301.0,482.2 301.8,483.9 302.5,484.1 303.2,486.1 304.0,484.9 304.8,483.3 305.5,482.1 306.2,484.0 307.0,482.6 307.8,482.7 308.5,486.0 309.2,484.9 310.0,482.8 310.8,486.0 311.5,485.8 312.2,482.4 313.0,486.3 313.8,482.0 314.5,484.7 315.2,484.2 316.0,482.4 316.8,481.5 317.5,486.9 318.2,483.9 319.0,482.2 319.8,481.6 320.5,482.0 321.2,483.1 322.0,482.3 322.8,482.9 323.5,480.8 324.2,478.9 325.0,483.2 325.8,484.9 326.5,479.6 327.2,480.9 328.0,484.0 328.8,485.2 329.5,482.4 330.2,482.3 331.0,486.5 331.8,485.2 332.5,481.4 333.2,481.1 334.0,482.2 334.8,483.0 335.5,480.8 336.2,483.6 337.0,482.2 337.8,483.3 338.5,486.3 339.2,485.2 340.0,482.7 340.8,480.2 341.5,485.7 342.2,483.1 343.0,482.0 343.8,485.2 344.5,480.2 345.2,483.5 346.0,484.7 346.8,483.1 347.5,479.8 348.2,481.4 349.0,483.6 349.8,481.0 350.5,485.6 351.2,484.9 352.0,480.2 352.8,480.8 353.5,483.8 354.2,485.9 355.0,483.3 355.8,484.1 356.5,485.9 357.2,483.3 358.0,477.3 358.8,485.2 359.5,484.0 360.2,481.5 361.0,487.5 361.8,482.1 362.5,480.7 363.2,482.0 364.0,486.3 364.8,479.1 365.5,481.7 366.2,481.1 367.0,485.4 367.8,480.8 368.5,486.8 369.2,481.5 370.0,481.1 370.8,478.1 371.5,479.4 372.2,483.7 373.0,482.9 373.8,480.3 374.5,485.6 375.2,486.2 376.0,480.6 376.8,481.9 377.5,480.8 378.2,482.1 379.0,483.6 379.8,481.2 380.5,482.6 381.2,485.8 382.0,480.9 382.8,482.5 383.5,484.6 384.2,483.9 385.0,480.2 385.8,483.6 386.5,481.5 387.2,480.9 388.0,482.9 388.8,482.7 389.5,477.5 390.2,480.2 391.0,481.7 391.8,477.3 392.5,482.6 393.2,483.4 394.0,481.8 394.8,480.0 395.5,478.4 396.2,483.6 397.0,486.5 397.8,484.9 398.5,483.3 399.2,484.6 400.0,480.8 400.8,479.7 401.5,481.2 402.2,480.2 403.0,482.1 403.8,484.8 404.5,482.8 405.2,481.7 406.0,486.4 406.8,485.8 407.5,483.1 408.2,482.2 409.0,480.0 409.8,481.4 410.5,481.0 411.2,479.5 412.0,481.6 412.8,480.7 413.5,481.7 414.2,482.7 415.0,483.9 415.8,474.9 416.5,479.8 417.2,482.1 418.0,482.5 418.8,482.0 419.5,485.8 420.2,481.3 421.0,482.3 421.8,480.8 422.5,486.3 423.2,484.3 424.0,480.9 424.8,477.5 425.5,483.6 426.2,479.2 427.0,484.5 427.8,481.7 428.5,476.7 429.2,478.6 430.0,481.4 430.8,482.7 431.5,483.2 432.2,483.3 433.0,478.3 433.8,478.9 434.5,478.0 435.2,479.6 436.0,480.4 436.8,481.3 437.5,481.5 438.2,481.2 439.0,483.5 439.8,481.5 440.5,480.3 441.2,476.0 442.0,480.5 442.8,479.7 443.5,481.3 444.2,482.1 445.0,480.4 445.8,481.3 446.5,481.1 447.2,478.2 448.0,478.6 448.8,481.4 449.5,479.1 450.2,479.3 451.0,478.8 451.8,479.0 452.5,481.6 453.2,480.5 454.0,481.2 454.8,480.9 455.5,479.1 456.2,479.3 457.0,481.9 457.8,479.8 458.5,482.6 459.2,479.1 460.0,479.6 460.8,481.1 461.5,479.7 462.2,479.0 463.0,480.4 463.8,480.6 464.5,482.1 465.2,477.1 466.0,479.8 466.8,479.4 467.5,482.0 468.2,480.5 469.0,477.7 469.8,481.7 470.5,478.3 471.2,480.5 472.0,480.5 472.8,480.2 473.5,480.1 474.2,478.2 475.0,480.8 475.8,479.3 476.5,478.6 477.2,479.4 478.0,480.2 478.8,478.3 479.5,480.3 480.2,479.4 481.0,479.2 481.8,478.9 482.5,480.2 483.2,478.7 484.0,480.0 484.8,480.2 485.5,479.3 486.2,479.9 487.0,480.1 487.8,477.4 488.5,478.8 489.2,481.7 490.0,479.4 490.8,478.5 491.5,482.7 492.2,481.9 493.0,480.0 493.8,480.4 494.5,480.3 495.2,476.9 496.0,480.2 496.8,478.2 497.5,478.2 498.2,482.6 499.0,478.2 499.8,480.1 500.5,480.2 501.2,478.7 502.0,481.0 502.8,479.9 503.5,479.5 504.2,479.1 505.0,479.9 505.8,481.2 506.5,481.1 507.2,481.4 508.0,480.4 508.8,480.8 509.5,481.8 510.2,478.6 511.0,481.6 511.8,479.2 512.5,479.3 513.2,480.7 514.0,480.2 514.8,478.4 515.5,482.0 516.2,478.8 517.0,479.0 517.8,479.9 518.5,481.4 519.2,478.5 520.0,478.0 520.8,479.3 521.5,479.0 522.2,478.5 523.0,479.3 523.8,480.8 524.5,481.6 525.2,478.5 526.0,481.7 526.8,478.5 527.5,478.5 528.2,479.6 529.0,479.7 529.8,479.6 530.5,479.9 531.2,479.4 532.0,479.4 532.8,479.3 533.5,479.4 534.2,480.1 535.0,478.5 535.8,479.5 536.5,480.4 537.2,478.9 538.0,480.2 538.8,477.3 539.5,480.3 540.2,479.3 541.0,480.3 541.8,479.3 542.5,477.5 543.2,480.4 544.0,479.0 544.8,479.2 545.5,478.8 546.2,480.0 547.0,481.0 547.8,478.9 548.5,481.0 549.2,479.4 550.0,480.2 550.8,479.6 551.5,479.0 552.2,479.8 553.0,478.4 553.8,479.7 554.5,480.6 555.2,478.6 556.0,478.5 556.8,478.5 557.5,480.9 558.2,478.3 559.0,478.9 559.8,480.6 560.5,479.5 561.2,479.7 562.0,479.5 562.8,480.4 563.5,481.9 564.2,477.8 565.0,480.0 565.8,480.2 566.5,479.3 567.2,479.1 568.0,478.5 568.8,479.8 569.5,478.1 570.2,477.3 571.0,479.6 571.8,478.9 572.5,479.9 573.2,480.5 574.0,478.1 574.8,479.3 575.5,479.2 576.2,477.8 577.0,479.4 577.8,480.3 578.5,479.6 579.2,478.3 580.0,480.4 580.8,478.6 581.5,477.4 582.2,481.1 583.0,479.0 583.8,479.3 584.5,479.4 585.2,481.7 586.0,479.9 586.8,480.2 587.5,478.3 588.2,480.8 589.0,479.2 589.8,478.2 590.5,478.7 591.2,477.6 592.0,477.7 592.8,480.4 593.5,480.5 594.2,479.7 595.0,479.8 595.8,478.9 596.5,478.4 597.2,479.1 598.0,479.0 598.8,479.6 599.5,479.9 600.2,477.1 601.0,481.1 601.8,479.3 602.5,478.2 603.2,478.8 604.0,479.5 604.8,479.3 605.5,480.4 606.2,479.6 607.0,479.6 607.8,478.1 608.5,480.3 609.2,479.8 610.0,478.0 610.8,478.7 611.5,480.4 612.2,479.6 613.0,478.4 613.8,479.7 614.5,479.4 615.2,478.5 616.0,479.3 616.8,479.7 617.5,479.4 618.2,477.9 619.0,478.6 619.8,480.2 620.5,479.5 621.2,477.8 622.0,478.7 622.8,480.0 623.5,478.9 624.2,479.3 625.0,478.8 625.8,478.6 626.5,478.6 627.2,478.1 628.0,478.6 628.8,479.7 629.5,479.4 630.2,478.2 631.0,480.4 631.8,478.0 632.5,478.0 633.2,478.0 634.0,478.3 634.8,478.2 635.5,478.0 636.2,479.6 637.0,479.1 637.8,478.6 638.5,479.1 639.2,477.3 640.0,480.0 640.8,479.1 641.5,480.0 642.2,478.8 643.0,479.9 643.8,479.2 644.5,478.7 645.2,478.3 646.0,478.0 646.8,479.4 647.5,478.1 648.2,478.2 649.0,478.1 649.8,478.2 650.5,478.9 651.2,478.4 652.0,479.6 652.8,479.0 653.5,479.4 654.2,478.9 655.0,478.2 655.8,478.9 656.5,478.8 657.2,478.7 658.0,478.0 658.8,477.0 659.5,479.6 660.2,480.1 661.0,478.6 661.8,478.7 662.5,477.0 663.2,478.1 664.0,478.9 664.8,478.0 665.5,477.4 666.2,477.7 667.0,478.7 667.8,478.6 668.5,478.7 669.2,479.2 670.0,478.7 670.8,478.0 671.5,479.2 672.2,478.2 673.0,478.7 673.8,477.6 674.5,479.1 675.2,478.4 676.0,477.2 676.8,477.4 677.5,477.6 678.2,477.5 679.0,477.1 679.8,477.9 680.5,476.4 681.2,476.2 682.0,477.4 682.8,475.5 683.5,477.3 684.2,476.3 685.0,476.7 685.8,476.4 686.5,475.2 687.2,475.9 688.0,475.8 688.8,475.3 689.5,474.6 690.2,473.7 691.0,472.5 691.8,473.0 692.5,472.4 693.2,472.2 694.0,471.9 694.8,471.3 695.5,469.2 696.2,469.6 697.0,470.1 697.8,467.9 698.5,467.7 699.2,467.0 700.0,466.3 700.8,465.8 701.5,465.0 702.2,464.0 703.0,463.4 703.8,463.2 704.5,462.2 705.2,463.0 705.2,484.0" fill="none" stroke="#35e035" stroke-width="1.1" stroke-linejoin="round" />
<rect x="10.35" y="305.25" width="18.00" height="17.40" rx="2.4" fill="#030603" stroke="#ececec" stroke-width="1.3"/>
<line x1="14.43" y1="307.20" x2="14.43" y2="320.70" stroke="#909090" stroke-width="0.9" />
<line x1="20.51" y1="307.20" x2="20.51" y2="320.70" stroke="#909090" stroke-width="0.9" />
<line x1="25.33" y1="307.20" x2="25.33" y2="320.70" stroke="#909090" stroke-width="0.9" />
<line x1="12.30" y1="307.87" x2="26.40" y2="307.87" stroke="#909090" stroke-width="0.9" />
<line x1="12.30" y1="311.80" x2="26.40" y2="311.80" stroke="#909090" stroke-width="0.9" />
<line x1="12.30" y1="315.82" x2="26.40" y2="315.82" stroke="#909090" stroke-width="0.9" />
<rect x="12.10" y="317.70" width="14.50" height="3.2" fill="#2cab2c" opacity="0.85"/>
<rect x="12.10" y="316.10" width="14.50" height="1.8" fill="#2a8a2a" opacity="0.55"/>
<line x1="17.81" y1="307.60" x2="17.81" y2="320.30" stroke="#2f9f2f" stroke-width="1.3" />
<line x1="23.50" y1="313.95" x2="23.50" y2="320.30" stroke="#63c763" stroke-width="1.3" />
<line x1="12.90" y1="318.70" x2="25.80" y2="318.70" stroke="#7fe07f" stroke-width="0.8" stroke-dasharray="1.6 1.2"/>
<text x="43.10" y="309.80" font-size="9.6" fill="#f2f2f2" text-anchor="start" textLength="49.3" lengthAdjust="spacingAndGlyphs" >Left channel</text>
<text x="43.10" y="322.90" font-size="9.6" fill="#36c936" text-anchor="start" textLength="55.2" lengthAdjust="spacingAndGlyphs" >Right channel</text>
<text transform="translate(708.00,303.00) scale(0.87,1)" font-size="9.8" fill="#262626" text-anchor="start" >dB</text>
<text transform="translate(708.00,327.80) scale(0.87,1)" font-size="9.8" fill="#262626" text-anchor="start" >-20</text>
<text transform="translate(708.00,342.50) scale(0.87,1)" font-size="9.8" fill="#262626" text-anchor="start" >-30</text>
<text transform="translate(708.00,357.20) scale(0.87,1)" font-size="9.8" fill="#262626" text-anchor="start" >-40</text>
<text transform="translate(708.00,371.90) scale(0.87,1)" font-size="9.8" fill="#262626" text-anchor="start" >-50</text>
<text transform="translate(708.00,386.60) scale(0.87,1)" font-size="9.8" fill="#262626" text-anchor="start" >-60</text>
<text transform="translate(708.00,401.30) scale(0.87,1)" font-size="9.8" fill="#262626" text-anchor="start" >-70</text>
<text transform="translate(708.00,416.00) scale(0.87,1)" font-size="9.8" fill="#262626" text-anchor="start" >-80</text>
<text transform="translate(708.00,430.70) scale(0.87,1)" font-size="9.8" fill="#262626" text-anchor="start" >-90</text>
<text transform="translate(708.00,445.40) scale(0.87,1)" font-size="9.8" fill="#262626" text-anchor="start" >-100</text>
<text transform="translate(708.00,460.10) scale(0.87,1)" font-size="9.8" fill="#262626" text-anchor="start" >-110</text>
<text transform="translate(708.00,474.80) scale(0.87,1)" font-size="9.8" fill="#262626" text-anchor="start" >-120</text>
<text transform="translate(708.00,489.50) scale(0.87,1)" font-size="9.8" fill="#262626" text-anchor="start" >-130</text>
<text transform="translate(708.00,504.20) scale(0.87,1)" font-size="9.8" fill="#262626" text-anchor="start" >-140</text>
<text transform="translate(39.50,525.20) scale(0.87,1)" font-size="9.8" fill="#262626" text-anchor="middle" >5</text>
<text transform="translate(90.50,525.20) scale(0.87,1)" font-size="9.8" fill="#262626" text-anchor="middle" >10</text>
<text transform="translate(207.00,525.20) scale(0.87,1)" font-size="9.8" fill="#262626" text-anchor="middle" >50</text>
<text transform="translate(257.00,525.20) scale(0.87,1)" font-size="9.8" fill="#262626" text-anchor="middle" >100</text>
<text transform="translate(373.50,525.20) scale(0.87,1)" font-size="9.8" fill="#262626" text-anchor="middle" >500</text>
<text transform="translate(424.00,525.20) scale(0.87,1)" font-size="9.8" fill="#262626" text-anchor="middle" >1K</text>
<text transform="translate(540.50,525.20) scale(0.87,1)" font-size="9.8" fill="#262626" text-anchor="middle" >5K</text>
<text transform="translate(591.00,525.20) scale(0.87,1)" font-size="9.8" fill="#262626" text-anchor="middle" >10K</text>
<text transform="translate(706.60,525.80) scale(0.93,1)" font-size="9.6" fill="#262626" text-anchor="start" >Hz</text>
<rect x="728.00" y="295.00" width="15.00" height="220.00" fill="#f3f3f3" />
<line x1="742.50" y1="295.00" x2="742.50" y2="515.00" stroke="#cfcfcf" stroke-width="1" />
<rect x="728.00" y="295.00" width="15.00" height="12.50" fill="#e2e2e2" />
<line x1="728.00" y1="295.50" x2="743.00" y2="295.50" stroke="#ffffff" stroke-width="1" />
<line x1="728.50" y1="295.00" x2="728.50" y2="307.50" stroke="#ffffff" stroke-width="1" />
<line x1="728.00" y1="307.00" x2="743.00" y2="307.00" stroke="#7c7c7c" stroke-width="1" />
<line x1="742.50" y1="295.00" x2="742.50" y2="307.50" stroke="#7c7c7c" stroke-width="1" />
<polygon points="732.90,303.06 738.10,303.06 735.50,299.94" fill="#101010"/>
<rect x="728.00" y="502.00" width="15.00" height="13.00" fill="#e2e2e2" />
<line x1="728.00" y1="502.50" x2="743.00" y2="502.50" stroke="#ffffff" stroke-width="1" />
<line x1="728.50" y1="502.00" x2="728.50" y2="515.00" stroke="#ffffff" stroke-width="1" />
<line x1="728.00" y1="514.50" x2="743.00" y2="514.50" stroke="#7c7c7c" stroke-width="1" />
<line x1="742.50" y1="502.00" x2="742.50" y2="515.00" stroke="#7c7c7c" stroke-width="1" />
<polygon points="732.90,506.94 738.10,506.94 735.50,510.06" fill="#101010"/>
<rect x="728.00" y="326.30" width="15.00" height="130.20" fill="#e3e3e3" />
<line x1="728.00" y1="326.80" x2="743.00" y2="326.80" stroke="#ffffff" stroke-width="1" />
<line x1="728.50" y1="326.30" x2="728.50" y2="456.50" stroke="#ffffff" stroke-width="1" />
<line x1="728.00" y1="456.00" x2="743.00" y2="456.00" stroke="#7c7c7c" stroke-width="1" />
<line x1="742.50" y1="326.30" x2="742.50" y2="456.50" stroke="#7c7c7c" stroke-width="1" />
<rect x="728.00" y="516.00" width="15.00" height="13.50" fill="#e4e4e4" />
<line x1="728.00" y1="516.50" x2="743.00" y2="516.50" stroke="#ffffff" stroke-width="1" />
<line x1="728.50" y1="516.00" x2="728.50" y2="529.50" stroke="#ffffff" stroke-width="1" />
<line x1="728.00" y1="529.00" x2="743.00" y2="529.00" stroke="#7c7c7c" stroke-width="1" />
<line x1="742.50" y1="516.00" x2="742.50" y2="529.50" stroke="#7c7c7c" stroke-width="1" />
<circle cx="734.90" cy="521.95" r="3.7" fill="#f2f2f2" stroke="#0c0c0c" stroke-width="1.8"/>
<line x1="737.80" y1="524.85" x2="740.50" y2="527.55" stroke="#0c0c0c" stroke-width="2.2" stroke-linecap="round"/>
<line x1="732.60" y1="521.95" x2="737.20" y2="521.95" stroke="#0c0c0c" stroke-width="1.5" />
<line x1="734.90" y1="519.65" x2="734.90" y2="524.25" stroke="#0c0c0c" stroke-width="1.5" />
<rect x="747.20" y="265.50" width="432.80" height="265.50" fill="#d7dbc6" />
<path d="M747.2,290.0 L747.2,270.5 Q747.2,265.5 752.2,265.5 L1180,265.5 Q1180,265.5 1180,265.5 L1180,290.0 Z" fill="#f7f7f6"/>
<rect x="747.2" y="289.00" width="432.79999999999995" height="5.5" fill="url(#tb)"/>
<g transform="translate(753.50,270.30) scale(0.993)">
<rect x="0" y="0" width="13.6" height="13.6" fill="#7b8760"/>
<rect x="0" y="9.6" width="13.6" height="4" fill="#8a9863"/>
<rect x="0" y="8.4" width="6" height="1.8" fill="#3c4b1f"/>
<rect x="8.6" y="7.6" width="5" height="1.5" fill="#3c4b1f"/>
<polyline points="0.3,8 2,7.4 5,1.3 6.7,11.9 10.4,0.8 11.8,6.1 13.6,6.3" fill="none" stroke="#f4f8e8" stroke-width="1.5" stroke-linejoin="miter"/>
</g>
<text x="771.90" y="281.20" font-size="10.6" fill="#8c8c8c" text-anchor="start" textLength="99.3" lengthAdjust="spacingAndGlyphs" >IMD (swept frequency)</text>
<line x1="1090.00" y1="278.00" x2="1098.00" y2="278.00" stroke="#b4b4b4" stroke-width="1" />
<rect x="1127.70" y="273.50" width="8" height="8" fill="none" stroke="#b4b4b4" stroke-width="1"/>
<line x1="1167.60" y1="273.50" x2="1175.60" y2="281.50" stroke="#b4b4b4" stroke-width="1" />
<line x1="1167.60" y1="281.50" x2="1175.60" y2="273.50" stroke="#b4b4b4" stroke-width="1" />
<rect x="751.00" y="294.30" width="423.00" height="235.20" fill="#d9d9d9" />
<rect x="751.00" y="294.30" width="398.80" height="220.70" fill="#000000" />
<g stroke="#848484" stroke-width="0.9">
<line x1="776.53" y1="294.3" x2="776.53" y2="515"/>
<line x1="815.71" y1="294.3" x2="815.71" y2="515"/>
<line x1="846.10" y1="294.3" x2="846.10" y2="515"/>
<line x1="870.93" y1="294.3" x2="870.93" y2="515"/>
<line x1="891.92" y1="294.3" x2="891.92" y2="515"/>
<line x1="910.11" y1="294.3" x2="910.11" y2="515"/>
<line x1="926.15" y1="294.3" x2="926.15" y2="515"/>
<line x1="940.50" y1="294.3" x2="940.50" y2="515"/>
<line x1="1034.90" y1="294.3" x2="1034.90" y2="515"/>
<line x1="1090.13" y1="294.3" x2="1090.13" y2="515"/>
<line x1="1129.31" y1="294.3" x2="1129.31" y2="515"/>
<line x1="751" y1="316.17" x2="1149.8" y2="316.17"/>
<line x1="751" y1="338.24" x2="1149.8" y2="338.24"/>
<line x1="751" y1="360.31" x2="1149.8" y2="360.31"/>
<line x1="751" y1="382.38" x2="1149.8" y2="382.38"/>
<line x1="751" y1="404.45" x2="1149.8" y2="404.45"/>
<line x1="751" y1="426.52" x2="1149.8" y2="426.52"/>
<line x1="751" y1="448.59" x2="1149.8" y2="448.59"/>
<line x1="751" y1="470.66" x2="1149.8" y2="470.66"/>
<line x1="751" y1="492.73" x2="1149.8" y2="492.73"/>
</g>
<line x1="751.00" y1="529.20" x2="1174.00" y2="529.20" stroke="#b9b9b9" stroke-width="1" />
<polyline points="751.0,474.5 812.0,474.9 816.0,474.1 845.0,473.3 850.0,473.3 866.0,473.3 872.0,473.3 878.0,474.3 882.0,475.5 890.0,475.3 900.0,475.7 912.0,475.3 925.0,474.1 934.0,476.3 945.0,475.3 960.0,474.5 975.0,474.7 990.0,474.1 1005.0,472.3 1017.7,472.1 1021.0,472.9 1024.0,473.9 1034.0,476.1 1045.8,477.5 1056.0,475.3 1070.0,474.5 1089.0,472.7 1105.0,470.3 1118.0,469.3 1129.0,468.1 1136.0,466.3 1140.0,465.7 1144.0,462.5 1147.0,458.2 1149.3,456.7" fill="none" stroke="#e8f4e8" stroke-width="1.3" stroke-linejoin="round" />
<polyline points="751.0,474.8 812.0,474.4 816.0,473.6 845.0,473.6 850.0,472.8 866.0,472.8 872.0,473.6 878.0,473.8 882.0,475.0 890.0,475.6 900.0,475.2 912.0,474.8 925.0,474.4 934.0,475.8 945.0,474.8 960.0,474.8 975.0,474.2 990.0,473.6 1005.0,472.6 1017.7,471.6 1021.0,472.4 1024.0,474.2 1034.0,475.6 1045.8,477.0 1056.0,475.6 1070.0,474.0 1089.0,472.2 1105.0,470.6 1118.0,468.8 1129.0,467.6 1136.0,466.6 1140.0,465.2 1144.0,462.0 1147.0,458.5 1149.3,456.2" fill="none" stroke="#3fc83f" stroke-width="1.0" stroke-linejoin="round" />
<rect x="760.35" y="304.15" width="18.00" height="17.40" rx="2.4" fill="#030603" stroke="#ececec" stroke-width="1.3"/>
<line x1="764.43" y1="306.10" x2="764.43" y2="319.60" stroke="#909090" stroke-width="0.9" />
<line x1="770.51" y1="306.10" x2="770.51" y2="319.60" stroke="#909090" stroke-width="0.9" />
<line x1="775.33" y1="306.10" x2="775.33" y2="319.60" stroke="#909090" stroke-width="0.9" />
<line x1="762.30" y1="306.77" x2="776.40" y2="306.77" stroke="#909090" stroke-width="0.9" />
<line x1="762.30" y1="310.70" x2="776.40" y2="310.70" stroke="#909090" stroke-width="0.9" />
<line x1="762.30" y1="314.72" x2="776.40" y2="314.72" stroke="#909090" stroke-width="0.9" />
<rect x="762.10" y="316.60" width="14.50" height="3.2" fill="#2cab2c" opacity="0.85"/>
<rect x="762.10" y="315.00" width="14.50" height="1.8" fill="#2a8a2a" opacity="0.55"/>
<line x1="767.81" y1="306.50" x2="767.81" y2="319.20" stroke="#2f9f2f" stroke-width="1.3" />
<line x1="773.50" y1="312.85" x2="773.50" y2="319.20" stroke="#63c763" stroke-width="1.3" />
<line x1="762.90" y1="317.60" x2="775.80" y2="317.60" stroke="#7fe07f" stroke-width="0.8" stroke-dasharray="1.6 1.2"/>
<text x="793.80" y="308.80" font-size="9.6" fill="#f2f2f2" text-anchor="start" textLength="49.3" lengthAdjust="spacingAndGlyphs" >Left channel</text>
<text x="793.80" y="321.90" font-size="9.6" fill="#36c936" text-anchor="start" textLength="55.2" lengthAdjust="spacingAndGlyphs" >Right channel</text>
<text transform="translate(1151.70,302.40) scale(0.87,1)" font-size="9.8" fill="#262626" text-anchor="start" >dB</text>
<text transform="translate(1151.70,319.17) scale(0.87,1)" font-size="9.8" fill="#262626" text-anchor="start" >-10</text>
<text transform="translate(1151.70,341.24) scale(0.87,1)" font-size="9.8" fill="#262626" text-anchor="start" >-20</text>
<text transform="translate(1151.70,363.31) scale(0.87,1)" font-size="9.8" fill="#262626" text-anchor="start" >-30</text>
<text transform="translate(1151.70,385.38) scale(0.87,1)" font-size="9.8" fill="#262626" text-anchor="start" >-40</text>
<text transform="translate(1151.70,407.45) scale(0.87,1)" font-size="9.8" fill="#262626" text-anchor="start" >-50</text>
<text transform="translate(1151.70,429.52) scale(0.87,1)" font-size="9.8" fill="#262626" text-anchor="start" >-60</text>
<text transform="translate(1151.70,451.59) scale(0.87,1)" font-size="9.8" fill="#262626" text-anchor="start" >-70</text>
<text transform="translate(1151.70,473.66) scale(0.87,1)" font-size="9.8" fill="#262626" text-anchor="start" >-80</text>
<text transform="translate(1151.70,495.73) scale(0.87,1)" font-size="9.8" fill="#262626" text-anchor="start" >-90</text>
<text transform="translate(776.50,525.20) scale(0.87,1)" font-size="9.8" fill="#262626" text-anchor="middle" >3K</text>
<text transform="translate(846.00,525.20) scale(0.87,1)" font-size="9.8" fill="#262626" text-anchor="middle" >5K</text>
<text transform="translate(940.50,525.20) scale(0.87,1)" font-size="9.8" fill="#262626" text-anchor="middle" >10K</text>
<text transform="translate(1089.50,525.20) scale(0.87,1)" font-size="9.8" fill="#262626" text-anchor="middle" >30K</text>
<text transform="translate(1150.40,525.80) scale(0.93,1)" font-size="9.6" fill="#262626" text-anchor="start" >Hz</text>
<rect x="1172.00" y="294.30" width="2.00" height="235.20" fill="#f0f0f0" />
<rect x="0.00" y="530.00" width="743.50" height="266.00" fill="#d7dbc6" />
<path d="M0,554.5 L0,530 Q0,530 0,530 L738.5,530 Q743.5,530 743.5,535 L743.5,554.5 Z" fill="#f7f7f6"/>
<rect x="0" y="553.50" width="743.5" height="5.5" fill="url(#tb)"/>
<line x1="743.90" y1="536.00" x2="743.90" y2="796.00" stroke="#8f9188" stroke-width="0.9" />
<g transform="translate(2.20,534.70) scale(0.993)">
<rect x="0" y="0" width="13.6" height="13.6" fill="#7b8760"/>
<rect x="0" y="9.6" width="13.6" height="4" fill="#8a9863"/>
<rect x="0" y="8.4" width="6" height="1.8" fill="#3c4b1f"/>
<rect x="8.6" y="7.6" width="5" height="1.5" fill="#3c4b1f"/>
<polyline points="0.3,8 2,7.4 5,1.3 6.7,11.9 10.4,0.8 11.8,6.1 13.6,6.3" fill="none" stroke="#f4f8e8" stroke-width="1.5" stroke-linejoin="miter"/>
</g>
<text x="20.20" y="545.70" font-size="10.6" fill="#8c8c8c" text-anchor="start" textLength="85.7" lengthAdjust="spacingAndGlyphs" >Dynamic range test</text>
<line x1="643.70" y1="542.00" x2="651.70" y2="542.00" stroke="#b4b4b4" stroke-width="1" />
<rect x="681.20" y="537.50" width="8" height="8" fill="none" stroke="#b4b4b4" stroke-width="1"/>
<line x1="720.00" y1="537.50" x2="728.00" y2="545.50" stroke="#b4b4b4" stroke-width="1" />
<line x1="720.00" y1="545.50" x2="728.00" y2="537.50" stroke="#b4b4b4" stroke-width="1" />
<rect x="0.00" y="559.00" width="741.00" height="235.00" fill="#d9d9d9" />
<rect x="0.00" y="559.00" width="703.00" height="220.40" fill="#000000" />
<g stroke="#848484" stroke-width="0.9">
<line x1="2.49" y1="559" x2="2.49" y2="779.4"/>
<line x1="23.30" y1="559" x2="23.30" y2="779.4"/>
<line x1="39.45" y1="559" x2="39.45" y2="779.4"/>
<line x1="52.64" y1="559" x2="52.64" y2="779.4"/>
<line x1="63.79" y1="559" x2="63.79" y2="779.4"/>
<line x1="73.45" y1="559" x2="73.45" y2="779.4"/>
<line x1="81.98" y1="559" x2="81.98" y2="779.4"/>
<line x1="89.60" y1="559" x2="89.60" y2="779.4"/>
<line x1="139.75" y1="559" x2="139.75" y2="779.4"/>
<line x1="169.09" y1="559" x2="169.09" y2="779.4"/>
<line x1="189.90" y1="559" x2="189.90" y2="779.4"/>
<line x1="206.05" y1="559" x2="206.05" y2="779.4"/>
<line x1="219.24" y1="559" x2="219.24" y2="779.4"/>
<line x1="230.39" y1="559" x2="230.39" y2="779.4"/>
<line x1="240.05" y1="559" x2="240.05" y2="779.4"/>
<line x1="248.58" y1="559" x2="248.58" y2="779.4"/>
<line x1="256.20" y1="559" x2="256.20" y2="779.4"/>
<line x1="306.35" y1="559" x2="306.35" y2="779.4"/>
<line x1="335.69" y1="559" x2="335.69" y2="779.4"/>
<line x1="356.50" y1="559" x2="356.50" y2="779.4"/>
<line x1="372.65" y1="559" x2="372.65" y2="779.4"/>
<line x1="385.84" y1="559" x2="385.84" y2="779.4"/>
<line x1="396.99" y1="559" x2="396.99" y2="779.4"/>
<line x1="406.65" y1="559" x2="406.65" y2="779.4"/>
<line x1="415.18" y1="559" x2="415.18" y2="779.4"/>
<line x1="422.80" y1="559" x2="422.80" y2="779.4"/>
<line x1="472.95" y1="559" x2="472.95" y2="779.4"/>
<line x1="502.29" y1="559" x2="502.29" y2="779.4"/>
<line x1="523.10" y1="559" x2="523.10" y2="779.4"/>
<line x1="539.25" y1="559" x2="539.25" y2="779.4"/>
<line x1="552.44" y1="559" x2="552.44" y2="779.4"/>
<line x1="563.59" y1="559" x2="563.59" y2="779.4"/>
<line x1="573.25" y1="559" x2="573.25" y2="779.4"/>
<line x1="581.78" y1="559" x2="581.78" y2="779.4"/>
<line x1="589.40" y1="559" x2="589.40" y2="779.4"/>
<line x1="639.55" y1="559" x2="639.55" y2="779.4"/>
<line x1="668.89" y1="559" x2="668.89" y2="779.4"/>
<line x1="689.70" y1="559" x2="689.70" y2="779.4"/>
<line x1="0" y1="573.44" x2="703" y2="573.44"/>
<line x1="0" y1="588.18" x2="703" y2="588.18"/>
<line x1="0" y1="602.92" x2="703" y2="602.92"/>
<line x1="0" y1="617.66" x2="703" y2="617.66"/>
<line x1="0" y1="632.40" x2="703" y2="632.40"/>
<line x1="0" y1="647.14" x2="703" y2="647.14"/>
<line x1="0" y1="661.88" x2="703" y2="661.88"/>
<line x1="0" y1="676.62" x2="703" y2="676.62"/>
<line x1="0" y1="691.36" x2="703" y2="691.36"/>
<line x1="0" y1="706.10" x2="703" y2="706.10"/>
<line x1="0" y1="720.84" x2="703" y2="720.84"/>
<line x1="0" y1="735.58" x2="703" y2="735.58"/>
<line x1="0" y1="750.32" x2="703" y2="750.32"/>
<line x1="0" y1="765.06" x2="703" y2="765.06"/>
</g>
<line x1="0.00" y1="793.60" x2="741.00" y2="793.60" stroke="#b9b9b9" stroke-width="1" />
<polyline points="0.0,746.8 25.0,746.6 26.0,746.0 65.0,746.0 82.0,745.6 100.0,744.0 112.0,743.0 118.0,742.6 126.0,743.6 134.0,745.6 141.0,747.6 150.0,746.2 160.0,745.4 172.0,745.4 178.0,746.4 181.0,747.0 186.0,745.8 192.0,745.8 197.0,743.6 201.0,738.0 205.6,732.2 209.0,737.0 212.0,743.0 216.0,745.4 222.0,747.4 228.0,746.0 234.0,746.8 235.6,748.2 237.2,747.0 238.8,746.0 240.4,746.4 242.0,747.9 243.6,747.7 245.2,746.1 246.8,745.3 248.4,745.4 250.0,746.4 251.6,746.1 253.2,745.6 254.8,745.3 256.4,745.5 258.0,744.6 259.6,744.7 261.2,745.2 262.8,747.0 264.4,746.4 266.0,747.1 267.6,745.4 269.2,746.3 270.8,746.1 272.4,745.2 274.0,745.1 275.6,746.0 277.2,745.4 278.8,746.3 280.4,747.5 282.0,748.5 283.6,749.2 285.2,746.6 286.8,746.6 288.4,745.5 290.0,746.6 290.0,746.4 290.8,746.1 291.5,743.0 292.2,746.7 293.0,744.2 293.8,744.1 294.5,746.2 295.2,745.1 296.0,746.2 296.8,744.4 297.5,743.7 298.2,742.0 299.0,746.0 299.8,743.8 300.5,745.7 301.2,745.5 302.0,743.0 302.8,747.0 303.5,746.1 304.2,744.2 305.0,746.1 305.8,747.7 306.5,745.6 307.2,746.5 308.0,748.7 308.8,745.6 309.5,745.2 310.2,746.1 311.0,745.7 311.8,748.2 312.5,747.9 313.2,748.2 314.0,744.8 314.8,749.0 315.5,747.3 316.2,746.8 317.0,749.6 317.8,750.4 318.5,749.0 319.2,747.4 320.0,744.8 320.8,745.9 321.5,747.8 322.2,750.8 323.0,747.4 323.8,746.9 324.5,746.5 325.2,744.9 326.0,743.9 326.8,746.8 327.5,744.6 328.2,743.4 329.0,747.2 329.8,748.3 330.5,747.4 331.2,748.3 332.0,748.1 332.8,742.5 333.5,744.0 334.2,749.2 335.0,748.2 335.8,742.3 336.5,746.6 337.2,743.5 338.0,747.0 338.8,744.6 339.5,744.8 340.2,745.3 341.0,744.4 341.8,747.6 342.5,746.5 343.2,746.5 344.0,743.8 344.8,747.3 345.5,749.7 346.2,744.6 347.0,747.6 347.8,748.4 348.5,746.5 349.2,745.3 350.0,746.6 350.8,745.7 351.5,744.7 352.2,743.3 353.0,748.0 353.8,745.7 354.5,745.5 355.2,747.4 356.0,745.8 356.8,748.0 357.5,744.6 358.2,744.9 359.0,747.8 359.8,750.2 360.5,751.4 361.2,748.7 362.0,745.9 362.8,749.5 363.5,745.6 364.2,740.4 365.0,745.2 365.8,745.4 366.5,746.0 367.2,740.1 368.0,745.7 368.8,743.2 369.5,745.8 370.2,745.7 371.0,745.6 371.8,748.8 372.5,747.3 373.2,747.8 374.0,745.7 374.8,742.9 375.5,744.7 376.2,741.8 377.0,744.9 377.8,745.0 378.5,743.8 379.2,742.9 380.0,745.5 380.8,743.8 381.5,745.2 382.2,745.4 383.0,743.9 383.8,745.1 384.5,745.1 385.2,742.4 386.0,743.3 386.8,745.6 387.5,745.5 388.2,745.1 389.0,745.4 389.8,743.9 390.5,742.2 391.2,743.7 392.0,744.2 392.8,743.3 393.5,743.4 394.2,744.6 395.0,745.3 395.8,745.2 396.5,742.8 397.2,743.6 398.0,742.4 398.8,745.0 399.5,746.8 400.2,744.6 401.0,745.3 401.8,744.0 402.5,743.7 403.2,743.5 404.0,743.8 404.8,743.8 405.5,744.7 406.2,745.0 407.0,743.5 407.8,739.9 408.5,740.3 409.2,742.5 410.0,741.8 410.8,743.9 411.5,743.6 412.2,743.1 413.0,744.0 413.8,742.6 414.5,740.3 415.2,743.8 416.0,740.5 416.8,743.7 417.5,742.7 418.2,742.3 419.0,743.1 425.0,745.1 425.8,741.8 426.5,743.0 427.2,742.5 428.0,741.8 428.8,742.0 429.5,742.1 430.2,742.6 431.0,743.1 431.8,743.9 432.5,743.0 433.2,743.9 434.0,743.3 434.8,742.8 435.5,742.4 436.2,741.5 437.0,740.7 437.8,742.3 438.5,742.3 439.2,742.9 440.0,742.9 440.8,741.1 441.5,741.6 442.2,741.1 443.0,743.5 443.8,742.4 444.5,742.6 445.2,741.4 446.0,740.9 446.8,741.6 447.5,742.2 448.2,742.9 449.0,740.7 449.8,742.6 450.5,741.4 451.2,741.7 452.0,741.9 452.8,741.8 453.5,742.8 454.2,743.4 455.0,742.8 455.8,741.7 456.5,742.7 457.2,742.8 458.0,743.3 458.8,742.7 459.5,740.4 460.2,741.1 461.0,741.6 461.8,743.3 462.5,742.1 463.2,743.3 464.0,742.6 464.8,740.8 465.5,742.1 466.2,742.8 467.0,742.7 467.8,740.4 468.5,742.5 469.2,741.4 470.0,739.5 470.8,741.1 471.5,739.6 472.2,740.3 473.0,743.6 473.8,745.2 474.5,743.7 475.2,742.7 476.0,744.4 476.8,742.7 477.5,740.9 478.2,739.0 479.0,742.8 479.8,739.4 480.5,738.4 481.2,740.9 482.0,742.0 482.8,741.0 483.5,743.1 484.2,742.0 485.0,742.2 485.8,742.5 486.5,741.3 487.2,742.1 488.0,744.7 488.8,741.1 489.5,742.1 490.2,742.6 491.0,741.4 491.8,741.8 492.5,739.9 493.2,741.2 494.0,741.9 494.8,743.2 495.5,743.1 496.2,741.4 497.0,740.6 497.8,743.8 498.5,743.1 499.2,739.8 500.0,741.3 500.8,740.8 501.5,741.1 502.2,739.9 503.0,741.2 503.8,741.2 504.5,741.5 505.2,743.0 506.0,742.2 506.8,740.5 507.5,739.8 508.2,741.0 509.0,743.0 509.8,743.0 510.5,741.3 511.2,743.0 512.0,742.4 512.8,741.2 513.5,742.2 514.2,741.7 515.0,740.6 515.8,741.2 516.5,741.9 517.2,743.2 518.0,740.8 518.8,741.9 519.5,741.8 520.2,741.7 521.0,740.4 521.8,742.9 522.5,743.2 523.2,743.5 524.0,742.4 524.8,743.3 525.5,742.4 526.2,742.8 527.0,741.4 527.8,741.9 528.5,741.3 529.2,740.5 530.0,741.1 530.8,740.4 531.5,740.4 532.2,741.1 533.0,741.0 533.8,743.7 534.5,743.6 535.2,742.9 536.0,742.5 536.8,740.8 537.5,741.8 538.2,740.2 539.0,740.8 539.8,741.0 540.5,741.1 541.2,742.4 542.0,740.9 542.8,743.9 543.5,741.3 544.2,742.4 545.0,740.1 545.8,742.3 546.5,740.4 547.2,741.6 548.0,741.5 548.8,742.3 549.5,742.2 550.2,742.0 551.0,741.4 551.8,743.4 552.5,741.2 553.2,741.5 554.0,741.0 554.8,741.6 555.5,740.6 556.2,741.0 557.0,741.9 557.8,741.0 558.5,741.8 559.2,740.9 560.0,742.7 560.8,741.4 561.5,743.1 562.2,742.1 563.0,741.4 563.8,742.3 564.5,742.6 565.2,742.9 566.0,742.9 566.8,742.4 567.5,740.4 568.2,742.2 569.0,741.4 569.8,741.8 570.5,742.6 571.2,740.8 572.0,742.5 572.8,743.7 573.5,742.1 574.2,741.1 575.0,742.6 575.8,741.6 576.5,742.3 577.2,742.6 578.0,740.1 578.8,741.5 579.5,740.0 580.2,740.6 581.0,741.8 581.8,740.3 582.5,740.6 583.2,740.8 584.0,741.5 584.8,741.6 585.5,741.7 586.2,740.9 587.0,740.6 587.8,741.5 588.5,740.5 589.2,740.5 590.0,741.8 590.8,740.6 591.5,740.4 592.2,742.1 593.0,741.3 593.8,739.3 594.5,740.4 595.2,742.8 596.0,743.7 596.8,741.2 597.5,741.8 598.2,741.9 599.0,741.5 599.8,739.7 600.5,741.8 601.2,741.5 602.0,741.0 602.8,739.8 603.5,740.5 604.2,741.0 605.0,740.9 605.8,741.3 606.5,740.8 607.2,741.9 608.0,741.7 608.8,740.2 609.5,740.5 610.2,741.3 611.0,740.6 611.8,742.1 612.5,740.7 613.2,741.2 614.0,741.5 614.8,740.1 615.5,741.9 616.2,740.9 617.0,740.4 617.8,740.4 618.5,739.6 619.2,739.7 620.0,742.0 620.8,741.0 621.5,740.7 622.2,741.1 623.0,741.4 623.8,740.3 624.5,740.7 625.2,741.1 626.0,741.7 626.8,741.2 627.5,742.2 628.2,740.8 629.0,740.6 629.8,739.7 630.5,740.7 631.2,741.3 632.0,740.7 632.8,740.7 633.5,740.0 634.2,740.3 635.0,740.4 635.8,740.7 636.5,741.6 637.2,741.3 638.0,741.5 638.8,741.8 639.5,740.5 640.2,741.8 641.0,740.9 641.8,739.7 642.5,740.2 643.2,740.6 644.0,739.5 644.8,742.4 645.5,740.8 646.2,741.4 647.0,739.8 647.8,740.7 648.5,740.9 649.2,740.1 650.0,740.8 650.8,740.7 651.5,740.9 652.2,739.8 653.0,740.9 653.8,740.4 654.5,740.0 655.2,738.9 656.0,740.3 656.8,740.3 657.5,742.3 658.2,739.8 659.0,741.6 659.8,741.6 660.5,740.9 661.2,740.7 662.0,740.9 662.8,739.4 663.5,741.3 664.2,740.2 665.0,739.7 665.8,740.2 666.5,738.2 667.2,739.0 668.0,739.2 668.8,738.8 669.5,740.4 670.2,741.3 671.0,740.1 671.8,739.7 672.5,740.1 673.2,739.5 674.0,739.9 674.8,740.1 675.5,739.6 676.2,739.4 677.0,739.7 677.8,739.6 678.5,740.0 679.2,738.4 680.0,738.4 680.8,738.8 681.5,739.4 682.2,738.2 683.0,739.7 683.8,739.9 684.5,738.4 685.2,739.3 686.0,736.8 686.8,737.4 687.5,736.0 688.2,737.2 689.0,736.7 689.8,736.0 690.5,734.7 691.2,733.8 692.0,734.2 692.8,733.2 693.5,733.4 694.2,731.4 695.0,732.0 695.8,731.6 696.5,729.4 697.2,729.3 698.0,729.1 698.8,728.7 699.5,727.5 700.2,727.7 701.0,726.7 701.8,726.5" fill="none" stroke="#f4f4f4" stroke-width="1.0" stroke-linejoin="round" />
<polyline points="0.0,747.0 25.0,746.8 26.0,746.2 65.0,746.2 82.0,745.6 100.0,744.2 112.0,743.2 118.0,742.4 126.0,743.6 134.0,745.8 141.0,747.4 150.0,745.6 160.0,744.0 170.0,742.6 180.0,742.8 188.0,743.6 194.0,742.0 199.0,738.0 203.0,733.0 205.6,731.2 208.0,734.4 211.0,741.0 215.0,744.6 220.0,745.2 227.0,744.2 234.0,745.0 235.6,746.6 237.2,749.6 238.8,749.0 240.4,748.3 242.0,748.1 243.6,746.9 245.2,745.8 246.8,746.3 248.4,745.6 250.0,746.4 251.6,745.8 253.2,743.7 254.8,742.5 256.4,742.2 258.0,740.6 259.6,741.7 261.2,742.2 262.8,744.1 264.4,743.3 266.0,743.4 267.6,744.5 269.2,745.4 270.8,744.0 272.4,746.0 274.0,744.9 275.6,746.2 277.2,745.4 278.8,744.7 280.4,743.2 282.0,743.4 283.6,746.4 285.2,745.1 286.8,746.9 288.4,748.0 290.0,746.7 290.0,743.2 290.8,744.6 291.5,744.0 292.2,747.7 293.0,745.0 293.8,742.9 294.5,742.5 295.2,745.6 296.0,745.1 296.8,743.4 297.5,746.4 298.2,746.5 299.0,747.4 299.8,745.3 300.5,744.0 301.2,746.9 302.0,746.7 302.8,746.9 303.5,746.2 304.2,744.1 305.0,742.3 305.8,748.5 306.5,744.4 307.2,745.6 308.0,748.1 308.8,747.5 309.5,744.9 310.2,746.2 311.0,748.7 311.8,745.5 312.5,742.7 313.2,745.2 314.0,742.1 314.8,749.5 315.5,746.2 316.2,744.8 317.0,741.4 317.8,747.8 318.5,746.7 319.2,746.7 320.0,748.3 320.8,745.3 321.5,746.0 322.2,749.2 323.0,748.0 323.8,750.1 324.5,745.4 325.2,745.0 326.0,744.6 326.8,746.8 327.5,745.3 328.2,742.6 329.0,749.3 329.8,748.0 330.5,749.2 331.2,740.2 332.0,746.9 332.8,741.0 333.5,743.1 334.2,742.7 335.0,746.0 335.8,744.7 336.5,745.6 337.2,743.1 338.0,744.4 338.8,745.8 339.5,750.4 340.2,745.2 341.0,746.6 341.8,744.6 342.5,746.9 343.2,747.7 344.0,744.7 344.8,747.6 345.5,746.3 346.2,743.7 347.0,746.7 347.8,746.1 348.5,742.1 349.2,748.7 350.0,742.7 350.8,745.6 351.5,747.9 352.2,743.4 353.0,746.0 353.8,746.6 354.5,748.3 355.2,745.8 356.0,744.7 356.8,745.6 357.5,743.6 358.2,745.5 359.0,747.4 359.8,748.8 360.5,744.7 361.2,742.8 362.0,748.2 362.8,740.9 363.5,745.6 364.2,744.9 365.0,742.3 365.8,744.7 366.5,747.4 367.2,744.0 368.0,743.6 368.8,745.8 369.5,746.0 370.2,749.3 371.0,749.1 371.8,746.0 372.5,746.0 373.2,745.2 374.0,745.9 374.8,746.8 375.5,746.8 376.2,742.0 377.0,747.1 377.8,743.9 378.5,742.7 379.2,744.4 380.0,742.0 380.8,743.5 381.5,743.6 382.2,748.5 383.0,747.0 383.8,749.5 384.5,744.6 385.2,744.6 386.0,746.6 386.8,746.2 387.5,745.2 388.2,744.0 389.0,745.8 389.8,744.6 390.5,744.5 391.2,743.1 392.0,743.0 392.8,744.7 393.5,744.8 394.2,744.1 395.0,742.6 395.8,745.5 396.5,743.3 397.2,741.5 398.0,745.2 398.8,742.7 399.5,742.0 400.2,741.6 401.0,741.5 401.8,747.5 402.5,746.0 403.2,745.9 404.0,742.6 404.8,743.5 405.5,742.2 406.2,744.6 407.0,743.7 407.8,743.7 408.5,742.9 409.2,746.5 410.0,743.5 410.8,741.9 411.5,742.6 412.2,742.1 413.0,743.8 413.8,744.0 414.5,741.0 415.2,745.4 416.0,744.8 416.8,744.1 417.5,745.2 418.2,744.5 419.0,742.8 421.7,742.0 422.0,648.0 422.5,648.0 423.1,668.0 423.3,742.0 425.0,742.1 425.8,740.5 426.5,744.0 427.2,746.2 428.0,743.5 428.8,744.2 429.5,744.2 430.2,743.7 431.0,743.6 431.8,744.0 432.5,742.4 433.2,740.6 434.0,740.2 434.8,743.0 435.5,743.1 436.2,742.5 437.0,739.6 437.8,741.8 438.5,742.3 439.2,741.2 440.0,741.3 440.8,744.9 441.5,744.3 442.2,743.5 443.0,742.8 443.8,741.8 444.5,741.8 445.2,743.1 446.0,741.3 446.8,741.9 447.5,744.3 448.2,740.9 449.0,741.1 449.8,744.4 450.5,743.0 451.2,742.5 452.0,741.2 452.8,740.3 453.5,743.6 454.2,739.0 455.0,742.5 455.8,741.5 456.5,742.0 457.2,739.4 458.0,743.1 458.8,743.0 459.5,742.6 460.2,742.7 461.0,740.4 461.8,742.2 462.5,742.7 463.2,742.0 464.0,737.9 464.8,741.5 465.5,742.1 466.2,740.6 467.0,742.0 467.8,743.8 468.5,742.1 469.2,743.8 470.0,741.4 470.8,740.9 471.5,742.2 472.2,740.8 473.0,739.6 473.8,742.2 474.5,742.0 475.2,742.7 476.0,740.9 476.8,741.2 477.5,742.5 478.2,741.3 479.0,741.6 479.8,742.2 480.5,740.9 481.2,742.1 482.0,740.0 482.8,742.3 483.5,745.4 484.2,743.1 485.0,741.5 485.8,739.7 486.5,740.1 487.2,741.3 488.0,740.8 488.8,742.4 489.5,742.1 490.2,742.8 491.0,741.6 491.8,742.8 492.5,743.6 493.2,740.8 494.0,741.6 494.8,741.6 495.5,741.7 496.2,743.2 497.0,741.5 497.8,740.6 498.5,740.0 499.2,739.7 500.0,741.4 500.8,742.8 501.5,741.9 502.2,740.8 503.0,741.4 503.8,740.6 504.5,742.8 505.2,742.0 506.0,743.5 506.8,742.7 507.5,742.5 508.2,740.6 509.0,742.2 509.8,741.3 510.5,741.0 511.2,741.8 512.0,743.6 512.8,742.4 513.5,744.1 514.2,742.7 515.0,740.1 515.8,740.9 516.5,743.8 517.2,742.5 518.0,741.8 518.8,741.1 519.5,741.8 520.2,742.1 521.0,741.2 521.8,741.5 522.5,741.9 523.2,740.4 524.0,741.2 524.8,740.7 525.5,740.8 526.2,740.5 527.0,740.8 527.8,740.6 528.5,743.4 529.2,741.6 530.0,742.0 530.8,740.7 531.5,741.6 532.2,742.0 533.0,743.3 533.8,743.6 534.5,741.3 535.2,743.4 536.0,741.8 536.8,742.9 537.5,741.6 538.2,742.3 539.0,741.5 539.8,740.0 540.5,741.9 541.2,741.2 542.0,741.3 542.8,741.7 543.5,742.0 544.2,744.1 545.0,740.6 545.8,740.9 546.5,740.4 547.2,742.6 548.0,741.3 548.8,740.8 549.5,741.9 550.2,741.6 551.0,742.0 551.8,740.0 552.5,741.3 553.2,742.0 554.0,740.9 554.8,742.6 555.5,741.4 556.2,740.6 557.0,740.9 557.8,741.9 558.5,742.5 559.2,741.0 560.0,741.9 560.8,741.1 561.5,740.4 562.2,740.3 563.0,742.0 563.8,740.9 564.5,741.4 565.2,742.9 566.0,742.4 566.8,741.0 567.5,741.0 568.2,741.5 569.0,739.3 569.8,741.7 570.5,740.6 571.2,741.9 572.0,740.6 572.8,740.9 573.5,742.0 574.2,741.9 575.0,743.0 575.8,741.0 576.5,740.6 577.2,742.6 578.0,741.9 578.8,740.2 579.5,740.7 580.2,741.5 581.0,740.8 581.8,739.8 582.5,741.1 583.2,741.6 584.0,742.4 584.8,742.3 585.5,742.0 586.2,740.5 587.0,740.0 587.8,740.1 588.5,741.6 589.2,742.0 590.0,739.5 590.8,741.5 591.5,741.9 592.2,742.6 593.0,741.9 593.8,742.0 594.5,741.4 595.2,740.9 596.0,740.9 596.8,741.0 597.5,740.1 598.2,740.9 599.0,741.9 599.8,740.9 600.5,742.1 601.2,740.4 602.0,741.3 602.8,740.4 603.5,741.9 604.2,741.7 605.0,741.9 605.8,741.8 606.5,741.5 607.2,742.0 608.0,741.2 608.8,738.9 609.5,740.9 610.2,741.4 611.0,739.0 611.8,741.7 612.5,740.9 613.2,741.8 614.0,740.7 614.8,741.0 615.5,740.2 616.2,740.6 617.0,739.5 617.8,740.9 618.5,740.5 619.2,740.3 620.0,740.1 620.8,739.9 621.5,740.7 622.2,740.7 623.0,740.5 623.8,741.9 624.5,740.0 625.2,740.3 626.0,739.6 626.8,740.4 627.5,740.6 628.2,739.2 629.0,740.9 629.8,739.0 630.5,740.1 631.2,740.4 632.0,739.6 632.8,741.7 633.5,740.9 634.2,739.6 635.0,740.9 635.8,741.0 636.5,740.2 637.2,739.9 638.0,741.3 638.8,742.6 639.5,741.0 640.2,742.4 641.0,739.4 641.8,739.1 642.5,740.5 643.2,740.1 644.0,740.7 644.8,742.1 645.5,739.9 646.2,740.8 647.0,740.5 647.8,739.5 648.5,740.2 649.2,739.6 650.0,740.2 650.8,741.7 651.5,741.5 652.2,741.4 653.0,740.7 653.8,740.1 654.5,742.1 655.2,740.6 656.0,740.8 656.8,741.3 657.5,740.4 658.2,740.8 659.0,740.4 659.8,740.7 660.5,741.1 661.2,739.4 662.0,740.3 662.8,739.9 663.5,740.0 664.2,740.5 665.0,741.4 665.8,738.6 666.5,741.3 667.2,739.7 668.0,739.3 668.8,739.3 669.5,740.0 670.2,740.0 671.0,738.5 671.8,738.4 672.5,740.4 673.2,739.7 674.0,738.2 674.8,739.3 675.5,739.3 676.2,740.7 677.0,739.0 677.8,738.9 678.5,738.9 679.2,739.5 680.0,739.5 680.8,739.6 681.5,740.3 682.2,738.9 683.0,740.0 683.8,738.9 684.5,739.2 685.2,739.2 686.0,739.3 686.8,736.9 687.5,738.4 688.2,735.2 689.0,735.7 689.8,735.3 690.5,734.9 691.2,735.4 692.0,732.8 692.8,732.5 693.5,733.4 694.2,733.5 695.0,731.1 695.8,730.7 696.5,731.0 697.2,730.5 698.0,728.6 698.8,728.7 699.5,727.9 700.2,727.0 701.0,726.9 701.8,726.0 702.6,726.4 702.6,779.4" fill="none" stroke="#35e035" stroke-width="1.1" stroke-linejoin="round" />
<line x1="422.30" y1="648.00" x2="422.30" y2="741.00" stroke="#35e035" stroke-width="1.0" />
<rect x="9.45" y="568.75" width="18.00" height="17.40" rx="2.4" fill="#030603" stroke="#ececec" stroke-width="1.3"/>
<line x1="13.53" y1="570.70" x2="13.53" y2="584.20" stroke="#909090" stroke-width="0.9" />
<line x1="19.61" y1="570.70" x2="19.61" y2="584.20" stroke="#909090" stroke-width="0.9" />
<line x1="24.43" y1="570.70" x2="24.43" y2="584.20" stroke="#909090" stroke-width="0.9" />
<line x1="11.40" y1="571.37" x2="25.50" y2="571.37" stroke="#909090" stroke-width="0.9" />
<line x1="11.40" y1="575.30" x2="25.50" y2="575.30" stroke="#909090" stroke-width="0.9" />
<line x1="11.40" y1="579.32" x2="25.50" y2="579.32" stroke="#909090" stroke-width="0.9" />
<rect x="11.20" y="581.20" width="14.50" height="3.2" fill="#2cab2c" opacity="0.85"/>
<rect x="11.20" y="579.60" width="14.50" height="1.8" fill="#2a8a2a" opacity="0.55"/>
<line x1="16.91" y1="571.10" x2="16.91" y2="583.80" stroke="#2f9f2f" stroke-width="1.3" />
<line x1="22.60" y1="577.45" x2="22.60" y2="583.80" stroke="#63c763" stroke-width="1.3" />
<line x1="12.00" y1="582.20" x2="24.90" y2="582.20" stroke="#7fe07f" stroke-width="0.8" stroke-dasharray="1.6 1.2"/>
<text x="42.70" y="573.30" font-size="9.6" fill="#f2f2f2" text-anchor="start" textLength="49.3" lengthAdjust="spacingAndGlyphs" >Left channel</text>
<text x="42.70" y="586.40" font-size="9.6" fill="#36c936" text-anchor="start" textLength="55.2" lengthAdjust="spacingAndGlyphs" >Right channel</text>
<text transform="translate(705.00,567.00) scale(0.87,1)" font-size="9.8" fill="#262626" text-anchor="start" >dB</text>
<text transform="translate(705.00,591.18) scale(0.87,1)" font-size="9.8" fill="#262626" text-anchor="start" >-20</text>
<text transform="translate(705.00,605.92) scale(0.87,1)" font-size="9.8" fill="#262626" text-anchor="start" >-30</text>
<text transform="translate(705.00,620.66) scale(0.87,1)" font-size="9.8" fill="#262626" text-anchor="start" >-40</text>
<text transform="translate(705.00,635.40) scale(0.87,1)" font-size="9.8" fill="#262626" text-anchor="start" >-50</text>
<text transform="translate(705.00,650.14) scale(0.87,1)" font-size="9.8" fill="#262626" text-anchor="start" >-60</text>
<text transform="translate(705.00,664.88) scale(0.87,1)" font-size="9.8" fill="#262626" text-anchor="start" >-70</text>
<text transform="translate(705.00,679.62) scale(0.87,1)" font-size="9.8" fill="#262626" text-anchor="start" >-80</text>
<text transform="translate(705.00,694.36) scale(0.87,1)" font-size="9.8" fill="#262626" text-anchor="start" >-90</text>
<text transform="translate(705.00,709.10) scale(0.87,1)" font-size="9.8" fill="#262626" text-anchor="start" >-100</text>
<text transform="translate(705.00,723.84) scale(0.87,1)" font-size="9.8" fill="#262626" text-anchor="start" >-110</text>
<text transform="translate(705.00,738.58) scale(0.87,1)" font-size="9.8" fill="#262626" text-anchor="start" >-120</text>
<text transform="translate(705.00,753.32) scale(0.87,1)" font-size="9.8" fill="#262626" text-anchor="start" >-130</text>
<text transform="translate(705.00,768.06) scale(0.87,1)" font-size="9.8" fill="#262626" text-anchor="start" >-140</text>
<text transform="translate(38.80,788.70) scale(0.87,1)" font-size="9.8" fill="#262626" text-anchor="middle" >5</text>
<text transform="translate(89.60,788.70) scale(0.87,1)" font-size="9.8" fill="#262626" text-anchor="middle" >10</text>
<text transform="translate(206.00,788.70) scale(0.87,1)" font-size="9.8" fill="#262626" text-anchor="middle" >50</text>
<text transform="translate(256.00,788.70) scale(0.87,1)" font-size="9.8" fill="#262626" text-anchor="middle" >100</text>
<text transform="translate(372.50,788.70) scale(0.87,1)" font-size="9.8" fill="#262626" text-anchor="middle" >500</text>
<text transform="translate(423.00,788.70) scale(0.87,1)" font-size="9.8" fill="#262626" text-anchor="middle" >1K</text>
<text transform="translate(539.50,788.70) scale(0.87,1)" font-size="9.8" fill="#262626" text-anchor="middle" >5K</text>
<text transform="translate(589.50,788.70) scale(0.87,1)" font-size="9.8" fill="#262626" text-anchor="middle" >10K</text>
<text transform="translate(704.00,789.30) scale(0.93,1)" font-size="9.6" fill="#262626" text-anchor="start" >Hz</text>
<rect x="726.00" y="559.00" width="14.50" height="220.00" fill="#f3f3f3" />
<line x1="740.00" y1="559.00" x2="740.00" y2="779.00" stroke="#cfcfcf" stroke-width="1" />
<rect x="726.00" y="559.00" width="14.50" height="12.50" fill="#e2e2e2" />
<line x1="726.00" y1="559.50" x2="740.50" y2="559.50" stroke="#ffffff" stroke-width="1" />
<line x1="726.50" y1="559.00" x2="726.50" y2="571.50" stroke="#ffffff" stroke-width="1" />
<line x1="726.00" y1="571.00" x2="740.50" y2="571.00" stroke="#7c7c7c" stroke-width="1" />
<line x1="740.00" y1="559.00" x2="740.00" y2="571.50" stroke="#7c7c7c" stroke-width="1" />
<polygon points="730.65,567.06 735.85,567.06 733.25,563.94" fill="#101010"/>
<rect x="726.00" y="766.00" width="14.50" height="13.00" fill="#e2e2e2" />
<line x1="726.00" y1="766.50" x2="740.50" y2="766.50" stroke="#ffffff" stroke-width="1" />
<line x1="726.50" y1="766.00" x2="726.50" y2="779.00" stroke="#ffffff" stroke-width="1" />
<line x1="726.00" y1="778.50" x2="740.50" y2="778.50" stroke="#7c7c7c" stroke-width="1" />
<line x1="740.00" y1="766.00" x2="740.00" y2="779.00" stroke="#7c7c7c" stroke-width="1" />
<polygon points="730.65,770.94 735.85,770.94 733.25,774.06" fill="#101010"/>
<rect x="726.00" y="589.40" width="14.50" height="131.60" fill="#e3e3e3" />
<line x1="726.00" y1="589.90" x2="740.50" y2="589.90" stroke="#ffffff" stroke-width="1" />
<line x1="726.50" y1="589.40" x2="726.50" y2="721.00" stroke="#ffffff" stroke-width="1" />
<line x1="726.00" y1="720.50" x2="740.50" y2="720.50" stroke="#7c7c7c" stroke-width="1" />
<line x1="740.00" y1="589.40" x2="740.00" y2="721.00" stroke="#7c7c7c" stroke-width="1" />
<rect x="726.00" y="780.00" width="14.50" height="14.00" fill="#e4e4e4" />
<line x1="726.00" y1="780.50" x2="740.50" y2="780.50" stroke="#ffffff" stroke-width="1" />
<line x1="726.50" y1="780.00" x2="726.50" y2="794.00" stroke="#ffffff" stroke-width="1" />
<line x1="726.00" y1="793.50" x2="740.50" y2="793.50" stroke="#7c7c7c" stroke-width="1" />
<line x1="740.00" y1="780.00" x2="740.00" y2="794.00" stroke="#7c7c7c" stroke-width="1" />
<circle cx="732.65" cy="786.20" r="3.7" fill="#f2f2f2" stroke="#0c0c0c" stroke-width="1.8"/>
<line x1="735.55" y1="789.10" x2="738.25" y2="791.80" stroke="#0c0c0c" stroke-width="2.2" stroke-linecap="round"/>
<line x1="730.35" y1="786.20" x2="734.95" y2="786.20" stroke="#0c0c0c" stroke-width="1.5" />
<line x1="732.65" y1="783.90" x2="732.65" y2="788.50" stroke="#0c0c0c" stroke-width="1.5" />
<rect x="740.00" y="795.00" width="6.00" height="46.00" fill="#c9cdb8" />
<rect x="740.00" y="836.00" width="17.00" height="85.00" fill="#2b2220" />
<rect x="746.00" y="835.50" width="428.00" height="5.70" fill="#39322d" />
<rect x="790.00" y="836.60" width="5.50" height="2.80" fill="#8a867a" />
<rect x="799.70" y="836.60" width="5.50" height="2.80" fill="#5c5850" />
<rect x="809.40" y="836.60" width="5.50" height="2.80" fill="#5c5850" />
<rect x="819.10" y="836.60" width="5.50" height="2.80" fill="#8a867a" />
<rect x="828.80" y="836.60" width="5.50" height="2.80" fill="#5c5850" />
<rect x="838.50" y="836.60" width="5.50" height="2.80" fill="#5c5850" />
<rect x="848.20" y="836.60" width="5.50" height="2.80" fill="#8a867a" />
<rect x="857.90" y="836.60" width="5.50" height="2.80" fill="#5c5850" />
<rect x="867.60" y="836.60" width="5.50" height="2.80" fill="#5c5850" />
<rect x="877.30" y="836.60" width="5.50" height="2.80" fill="#8a867a" />
<rect x="887.00" y="836.60" width="5.50" height="2.80" fill="#5c5850" />
<rect x="896.70" y="836.60" width="5.50" height="2.80" fill="#5c5850" />
<rect x="906.40" y="836.60" width="5.50" height="2.80" fill="#8a867a" />
<rect x="916.10" y="836.60" width="5.50" height="2.80" fill="#5c5850" />
<rect x="925.80" y="836.60" width="5.50" height="2.80" fill="#5c5850" />
<rect x="935.50" y="836.60" width="5.50" height="2.80" fill="#8a867a" />
<rect x="945.20" y="836.60" width="5.50" height="2.80" fill="#5c5850" />
<rect x="954.90" y="836.60" width="5.50" height="2.80" fill="#5c5850" />
<rect x="964.60" y="836.60" width="5.50" height="2.80" fill="#8a867a" />
<rect x="974.30" y="836.60" width="5.50" height="2.80" fill="#5c5850" />
<rect x="984.00" y="836.60" width="5.50" height="2.80" fill="#5c5850" />
<rect x="993.70" y="836.60" width="5.50" height="2.80" fill="#8a867a" />
<rect x="1003.40" y="836.60" width="5.50" height="2.80" fill="#5c5850" />
<rect x="1013.10" y="836.60" width="5.50" height="2.80" fill="#5c5850" />
<rect x="1022.80" y="836.60" width="5.50" height="2.80" fill="#8a867a" />
<rect x="1032.50" y="836.60" width="5.50" height="2.80" fill="#5c5850" />
<rect x="1042.20" y="836.60" width="5.50" height="2.80" fill="#5c5850" />
<rect x="1051.90" y="836.60" width="5.50" height="2.80" fill="#8a867a" />
<rect x="1061.60" y="836.60" width="5.50" height="2.80" fill="#5c5850" />
<rect x="1071.30" y="836.60" width="5.50" height="2.80" fill="#5c5850" />
<rect x="1081.00" y="836.60" width="5.50" height="2.80" fill="#8a867a" />
<rect x="1090.70" y="836.60" width="5.50" height="2.80" fill="#5c5850" />
<rect x="1100.40" y="836.60" width="5.50" height="2.80" fill="#5c5850" />
<rect x="1110.10" y="836.60" width="5.50" height="2.80" fill="#8a867a" />
<rect x="1119.80" y="836.60" width="5.50" height="2.80" fill="#5c5850" />
<rect x="1129.50" y="836.60" width="5.50" height="2.80" fill="#5c5850" />
<rect x="1139.20" y="836.60" width="5.50" height="2.80" fill="#8a867a" />
<rect x="1148.90" y="836.60" width="5.50" height="2.80" fill="#5c5850" />
<rect x="1158.60" y="836.60" width="5.50" height="2.80" fill="#5c5850" />
<rect x="1168.30" y="836.60" width="5.50" height="2.80" fill="#8a867a" />
<rect x="750.00" y="838.50" width="2.30" height="2.00" fill="#e2aa24" />
<rect x="746.60" y="839.10" width="1.40" height="1.20" fill="#5e4a34" />
<rect x="750.00" y="841.80" width="2.30" height="2.00" fill="#e2aa24" />
<rect x="750.00" y="845.10" width="2.30" height="2.00" fill="#e2aa24" />
<rect x="746.60" y="845.70" width="1.40" height="1.20" fill="#5e4a34" />
<rect x="750.00" y="848.40" width="2.30" height="2.00" fill="#e2aa24" />
<rect x="750.00" y="851.70" width="2.30" height="2.00" fill="#e2aa24" />
<rect x="746.60" y="852.30" width="1.40" height="1.20" fill="#5e4a34" />
<rect x="750.00" y="855.00" width="2.30" height="2.00" fill="#e2aa24" />
<rect x="750.00" y="858.30" width="2.30" height="2.00" fill="#e2aa24" />
<rect x="746.60" y="858.90" width="1.40" height="1.20" fill="#5e4a34" />
<rect x="750.00" y="861.60" width="2.30" height="2.00" fill="#e2aa24" />
<rect x="750.00" y="864.90" width="2.30" height="2.00" fill="#e2aa24" />
<rect x="746.60" y="865.50" width="1.40" height="1.20" fill="#5e4a34" />
<rect x="750.00" y="868.20" width="2.30" height="2.00" fill="#e2aa24" />
<rect x="750.00" y="871.50" width="2.30" height="2.00" fill="#e2aa24" />
<rect x="746.60" y="872.10" width="1.40" height="1.20" fill="#5e4a34" />
<rect x="750.00" y="874.80" width="2.30" height="2.00" fill="#e2aa24" />
<rect x="750.00" y="878.10" width="2.30" height="2.00" fill="#e2aa24" />
<rect x="746.60" y="878.70" width="1.40" height="1.20" fill="#5e4a34" />
<rect x="750.00" y="881.40" width="2.30" height="2.00" fill="#e2aa24" />
<rect x="750.00" y="884.70" width="2.30" height="2.00" fill="#e2aa24" />
<rect x="746.60" y="885.30" width="1.40" height="1.20" fill="#5e4a34" />
<rect x="750.00" y="888.00" width="2.30" height="2.00" fill="#e2aa24" />
<rect x="750.00" y="891.30" width="2.30" height="2.00" fill="#e2aa24" />
<rect x="746.60" y="891.90" width="1.40" height="1.20" fill="#5e4a34" />
<rect x="750.00" y="894.60" width="2.30" height="2.00" fill="#e2aa24" />
<rect x="750.00" y="897.90" width="2.30" height="2.00" fill="#e2aa24" />
<rect x="746.60" y="898.50" width="1.40" height="1.20" fill="#5e4a34" />
<rect x="750.00" y="901.20" width="2.30" height="2.00" fill="#e2aa24" />
<rect x="750.00" y="904.50" width="2.30" height="2.00" fill="#e2aa24" />
<rect x="746.60" y="905.10" width="1.40" height="1.20" fill="#5e4a34" />
<rect x="750.00" y="907.80" width="2.30" height="2.00" fill="#e2aa24" />
<rect x="750.00" y="911.10" width="2.30" height="2.00" fill="#e2aa24" />
<rect x="746.60" y="911.70" width="1.40" height="1.20" fill="#5e4a34" />
<rect x="750.00" y="914.40" width="2.30" height="2.00" fill="#e2aa24" />
<rect x="750.00" y="917.70" width="2.30" height="2.00" fill="#e2aa24" />
<rect x="746.60" y="918.30" width="1.40" height="1.20" fill="#5e4a34" />
<rect x="740.00" y="921.00" width="17.00" height="20.00" fill="#573a31" />
<rect x="740.00" y="941.00" width="17.00" height="85.00" fill="#654539" />
<rect x="741.00" y="941.00" width="6.00" height="85.00" fill="#866250" />
<rect x="741.00" y="943.00" width="14.00" height="1.10" fill="#4a3028" opacity="0.55"/>
<rect x="741.00" y="946.00" width="14.00" height="1.10" fill="#4a3028" opacity="0.55"/>
<rect x="741.00" y="949.00" width="14.00" height="1.10" fill="#4a3028" opacity="0.55"/>
<rect x="741.00" y="952.00" width="14.00" height="1.10" fill="#4a3028" opacity="0.55"/>
<rect x="741.00" y="955.00" width="14.00" height="1.10" fill="#4a3028" opacity="0.55"/>
<rect x="741.00" y="958.00" width="14.00" height="1.10" fill="#4a3028" opacity="0.55"/>
<rect x="741.00" y="961.00" width="14.00" height="1.10" fill="#4a3028" opacity="0.55"/>
<rect x="741.00" y="964.00" width="14.00" height="1.10" fill="#4a3028" opacity="0.55"/>
<rect x="741.00" y="967.00" width="14.00" height="1.10" fill="#4a3028" opacity="0.55"/>
<rect x="741.00" y="970.00" width="14.00" height="1.10" fill="#4a3028" opacity="0.55"/>
<rect x="741.00" y="973.00" width="14.00" height="1.10" fill="#4a3028" opacity="0.55"/>
<rect x="741.00" y="976.00" width="14.00" height="1.10" fill="#4a3028" opacity="0.55"/>
<rect x="741.00" y="979.00" width="14.00" height="1.10" fill="#4a3028" opacity="0.55"/>
<rect x="741.00" y="982.00" width="14.00" height="1.10" fill="#4a3028" opacity="0.55"/>
<rect x="741.00" y="985.00" width="14.00" height="1.10" fill="#4a3028" opacity="0.55"/>
<rect x="741.00" y="988.00" width="14.00" height="1.10" fill="#4a3028" opacity="0.55"/>
<rect x="741.00" y="991.00" width="14.00" height="1.10" fill="#4a3028" opacity="0.55"/>
<rect x="741.00" y="994.00" width="14.00" height="1.10" fill="#4a3028" opacity="0.55"/>
<rect x="741.00" y="997.00" width="14.00" height="1.10" fill="#4a3028" opacity="0.55"/>
<rect x="741.00" y="1000.00" width="14.00" height="1.10" fill="#4a3028" opacity="0.55"/>
<rect x="741.00" y="1003.00" width="14.00" height="1.10" fill="#4a3028" opacity="0.55"/>
<rect x="741.00" y="1006.00" width="14.00" height="1.10" fill="#4a3028" opacity="0.55"/>
<rect x="741.00" y="1009.00" width="14.00" height="1.10" fill="#4a3028" opacity="0.55"/>
<rect x="741.00" y="1012.00" width="14.00" height="1.10" fill="#4a3028" opacity="0.55"/>
<rect x="741.00" y="1015.00" width="14.00" height="1.10" fill="#4a3028" opacity="0.55"/>
<rect x="741.00" y="1018.00" width="14.00" height="1.10" fill="#4a3028" opacity="0.55"/>
<rect x="741.00" y="1021.00" width="14.00" height="1.10" fill="#4a3028" opacity="0.55"/>
<rect x="741.00" y="1024.00" width="14.00" height="1.10" fill="#4a3028" opacity="0.55"/>
<rect x="740.00" y="1026.00" width="17.00" height="11.00" fill="#2c1d19" />
<rect x="740" y="1037" width="17" height="30" fill="url(#gold)"/>
<rect x="740.00" y="1067.00" width="17.00" height="13.00" fill="#3c2c18" />
<rect x="742.00" y="1069.00" width="3.00" height="2.00" fill="#e8c040" />
<rect x="747.00" y="1072.00" width="3.00" height="2.00" fill="#e8c040" />
<rect x="751.50" y="1068.60" width="3.00" height="2.00" fill="#e8c040" />
<rect x="744.00" y="1075.50" width="3.00" height="2.00" fill="#e8c040" />
<rect x="750.00" y="1076.50" width="3.00" height="2.00" fill="#e8c040" />
<path d="M745.2,530 L1180,530 L1180,835.5 L751.2,835.5 Q745.2,835.5 745.2,829.5 Z" fill="#d7dbc6"/>
<path d="M745.2,554.5 L745.2,535 Q745.2,530 750.2,530 L1180,530 L1180,554.5 Z" fill="#f7f7f6"/>
<rect x="745.2" y="553.5" width="440" height="5.5" fill="url(#tb)"/>
<g transform="translate(752.20,534.70) scale(0.993)">
<rect x="0" y="0" width="13.6" height="13.6" fill="#7b8760"/>
<rect x="0" y="9.6" width="13.6" height="4" fill="#8a9863"/>
<rect x="0" y="8.4" width="6" height="1.8" fill="#3c4b1f"/>
<rect x="8.6" y="7.6" width="5" height="1.5" fill="#3c4b1f"/>
<polyline points="0.3,8 2,7.4 5,1.3 6.7,11.9 10.4,0.8 11.8,6.1 13.6,6.3" fill="none" stroke="#f4f8e8" stroke-width="1.5" stroke-linejoin="miter"/>
</g>
<text x="770.00" y="545.70" font-size="10.6" fill="#8c8c8c" text-anchor="start" textLength="120.9" lengthAdjust="spacingAndGlyphs" >Frequency response &amp; THD</text>
<line x1="1088.70" y1="542.00" x2="1096.70" y2="542.00" stroke="#b4b4b4" stroke-width="1" />
<rect x="1126.20" y="537.50" width="8" height="8" fill="none" stroke="#b4b4b4" stroke-width="1"/>
<line x1="1165.50" y1="537.50" x2="1173.50" y2="545.50" stroke="#b4b4b4" stroke-width="1" />
<line x1="1165.50" y1="545.50" x2="1173.50" y2="537.50" stroke="#b4b4b4" stroke-width="1" />
<rect x="749.00" y="559.50" width="425.00" height="234.00" fill="#d9d9d9" />
<rect x="749.00" y="559.50" width="399.00" height="219.50" fill="#000000" />
<g stroke="#848484" stroke-width="0.9">
<line x1="771.35" y1="559.5" x2="771.35" y2="779"/>
<line x1="786.10" y1="559.5" x2="786.10" y2="779"/>
<line x1="797.55" y1="559.5" x2="797.55" y2="779"/>
<line x1="806.90" y1="559.5" x2="806.90" y2="779"/>
<line x1="814.81" y1="559.5" x2="814.81" y2="779"/>
<line x1="821.65" y1="559.5" x2="821.65" y2="779"/>
<line x1="827.70" y1="559.5" x2="827.70" y2="779"/>
<line x1="833.10" y1="559.5" x2="833.10" y2="779"/>
<line x1="868.65" y1="559.5" x2="868.65" y2="779"/>
<line x1="889.45" y1="559.5" x2="889.45" y2="779"/>
<line x1="904.20" y1="559.5" x2="904.20" y2="779"/>
<line x1="915.65" y1="559.5" x2="915.65" y2="779"/>
<line x1="925.00" y1="559.5" x2="925.00" y2="779"/>
<line x1="932.91" y1="559.5" x2="932.91" y2="779"/>
<line x1="939.75" y1="559.5" x2="939.75" y2="779"/>
<line x1="945.80" y1="559.5" x2="945.80" y2="779"/>
<line x1="951.20" y1="559.5" x2="951.20" y2="779"/>
<line x1="986.75" y1="559.5" x2="986.75" y2="779"/>
<line x1="1007.55" y1="559.5" x2="1007.55" y2="779"/>
<line x1="1022.30" y1="559.5" x2="1022.30" y2="779"/>
<line x1="1033.75" y1="559.5" x2="1033.75" y2="779"/>
<line x1="1043.10" y1="559.5" x2="1043.10" y2="779"/>
<line x1="1051.01" y1="559.5" x2="1051.01" y2="779"/>
<line x1="1057.85" y1="559.5" x2="1057.85" y2="779"/>
<line x1="1063.90" y1="559.5" x2="1063.90" y2="779"/>
<line x1="1069.30" y1="559.5" x2="1069.30" y2="779"/>
<line x1="1104.85" y1="559.5" x2="1104.85" y2="779"/>
<line x1="1125.65" y1="559.5" x2="1125.65" y2="779"/>
<line x1="1140.40" y1="559.5" x2="1140.40" y2="779"/>
<line x1="749" y1="575.59" x2="1148" y2="575.59"/>
<line x1="749" y1="592.18" x2="1148" y2="592.18"/>
<line x1="749" y1="608.77" x2="1148" y2="608.77"/>
<line x1="749" y1="625.36" x2="1148" y2="625.36"/>
<line x1="749" y1="641.95" x2="1148" y2="641.95"/>
<line x1="749" y1="658.54" x2="1148" y2="658.54"/>
<line x1="749" y1="675.13" x2="1148" y2="675.13"/>
<line x1="749" y1="691.72" x2="1148" y2="691.72"/>
<line x1="749" y1="708.31" x2="1148" y2="708.31"/>
<line x1="749" y1="724.90" x2="1148" y2="724.90"/>
<line x1="749" y1="741.49" x2="1148" y2="741.49"/>
<line x1="749" y1="758.08" x2="1148" y2="758.08"/>
<line x1="749" y1="774.67" x2="1148" y2="774.67"/>
</g>
<polyline points="749.0,560.2 1060.0,560.2 1090.0,560.8 1110.0,561.8 1125.0,563.0 1137.0,564.4 1147.5,566.0" fill="none" stroke="#e8e8e8" stroke-width="1.2" stroke-linejoin="round" />
<polyline points="749.0,778.0 765.0,777.6 772.0,776.4 779.4,775.8 785.0,776.2 790.0,777.8 800.0,778.0 815.0,777.8 833.0,777.5 845.0,776.6 860.0,775.4 875.0,775.4 889.0,774.7 900.0,774.2 915.0,773.6 925.0,772.4 945.0,772.0 951.0,771.4 960.0,770.4 987.0,764.2 1007.0,759.4 1018.0,758.0 1033.0,754.6 1050.0,750.6 1069.0,746.2 1085.0,743.0 1104.0,738.7 1115.0,735.0 1125.0,731.4 1137.0,727.6 1147.6,725.0" fill="none" stroke="#3fc03f" stroke-width="1.15" stroke-linejoin="round" />
<rect x="758.85" y="568.75" width="18.00" height="17.40" rx="2.4" fill="#030603" stroke="#ececec" stroke-width="1.3"/>
<line x1="762.93" y1="570.70" x2="762.93" y2="584.20" stroke="#909090" stroke-width="0.9" />
<line x1="769.01" y1="570.70" x2="769.01" y2="584.20" stroke="#909090" stroke-width="0.9" />
<line x1="773.83" y1="570.70" x2="773.83" y2="584.20" stroke="#909090" stroke-width="0.9" />
<line x1="760.80" y1="571.37" x2="774.90" y2="571.37" stroke="#909090" stroke-width="0.9" />
<line x1="760.80" y1="575.30" x2="774.90" y2="575.30" stroke="#909090" stroke-width="0.9" />
<line x1="760.80" y1="579.32" x2="774.90" y2="579.32" stroke="#909090" stroke-width="0.9" />
<rect x="760.60" y="581.20" width="14.50" height="3.2" fill="#2cab2c" opacity="0.85"/>
<rect x="760.60" y="579.60" width="14.50" height="1.8" fill="#2a8a2a" opacity="0.55"/>
<line x1="766.31" y1="571.10" x2="766.31" y2="583.80" stroke="#2f9f2f" stroke-width="1.3" />
<line x1="772.00" y1="577.45" x2="772.00" y2="583.80" stroke="#63c763" stroke-width="1.3" />
<line x1="761.40" y1="582.20" x2="774.30" y2="582.20" stroke="#7fe07f" stroke-width="0.8" stroke-dasharray="1.6 1.2"/>
<text x="791.90" y="573.30" font-size="9.6" fill="#f2f2f2" text-anchor="start" textLength="80.2" lengthAdjust="spacingAndGlyphs" >Frequency response</text>
<text x="791.90" y="586.40" font-size="9.6" fill="#36c936" text-anchor="start" textLength="18.4" lengthAdjust="spacingAndGlyphs" >THD</text>
<text transform="translate(1149.80,566.40) scale(0.87,1)" font-size="9.8" fill="#262626" text-anchor="start" >dB</text>
<text transform="translate(1149.80,594.58) scale(0.87,1)" font-size="9.8" fill="#262626" text-anchor="start" >-12</text>
<text transform="translate(1149.80,611.17) scale(0.87,1)" font-size="9.8" fill="#262626" text-anchor="start" >-18</text>
<text transform="translate(1149.80,627.76) scale(0.87,1)" font-size="9.8" fill="#262626" text-anchor="start" >-24</text>
<text transform="translate(1149.80,644.35) scale(0.87,1)" font-size="9.8" fill="#262626" text-anchor="start" >-30</text>
<text transform="translate(1149.80,660.94) scale(0.87,1)" font-size="9.8" fill="#262626" text-anchor="start" >-36</text>
<text transform="translate(1149.80,677.53) scale(0.87,1)" font-size="9.8" fill="#262626" text-anchor="start" >-42</text>
<text transform="translate(1149.80,694.12) scale(0.87,1)" font-size="9.8" fill="#262626" text-anchor="start" >-48</text>
<text transform="translate(1149.80,710.71) scale(0.87,1)" font-size="9.8" fill="#262626" text-anchor="start" >-54</text>
<text transform="translate(1149.80,727.30) scale(0.87,1)" font-size="9.8" fill="#262626" text-anchor="start" >-60</text>
<text transform="translate(1149.80,743.89) scale(0.87,1)" font-size="9.8" fill="#262626" text-anchor="start" >-66</text>
<text transform="translate(1149.80,760.48) scale(0.87,1)" font-size="9.8" fill="#262626" text-anchor="start" >-72</text>
<text transform="translate(1149.80,777.07) scale(0.87,1)" font-size="9.8" fill="#262626" text-anchor="start" >-78</text>
<text transform="translate(770.50,788.70) scale(0.87,1)" font-size="9.8" fill="#262626" text-anchor="middle" >30</text>
<text transform="translate(797.00,788.70) scale(0.87,1)" font-size="9.8" fill="#262626" text-anchor="middle" >50</text>
<text transform="translate(833.00,788.70) scale(0.87,1)" font-size="9.8" fill="#262626" text-anchor="middle" >100</text>
<text transform="translate(889.50,788.70) scale(0.87,1)" font-size="9.8" fill="#262626" text-anchor="middle" >300</text>
<text transform="translate(915.50,788.70) scale(0.87,1)" font-size="9.8" fill="#262626" text-anchor="middle" >500</text>
<text transform="translate(951.00,788.70) scale(0.87,1)" font-size="9.8" fill="#262626" text-anchor="middle" >1K</text>
<text transform="translate(1007.50,788.70) scale(0.87,1)" font-size="9.8" fill="#262626" text-anchor="middle" >3K</text>
<text transform="translate(1033.50,788.70) scale(0.87,1)" font-size="9.8" fill="#262626" text-anchor="middle" >5K</text>
<text transform="translate(1069.50,788.70) scale(0.87,1)" font-size="9.8" fill="#262626" text-anchor="middle" >10K</text>
<text transform="translate(1125.50,788.70) scale(0.87,1)" font-size="9.8" fill="#262626" text-anchor="middle" >30K</text>
<text transform="translate(1149.00,789.30) scale(0.93,1)" font-size="9.6" fill="#262626" text-anchor="start" >Hz</text>
<rect x="1170.00" y="559.50" width="4.00" height="234.00" fill="#f0f0f0" />
<rect x="749.00" y="794.00" width="425.00" height="13.80" fill="#f4f4f4" />
<line x1="749.00" y1="807.40" x2="1174.00" y2="807.40" stroke="#9a9a9a" stroke-width="1" />
<rect x="749.00" y="794.00" width="12.50" height="13.50" fill="#e2e2e2" />
<line x1="749.00" y1="794.50" x2="761.50" y2="794.50" stroke="#ffffff" stroke-width="1" />
<line x1="749.50" y1="794.00" x2="749.50" y2="807.50" stroke="#ffffff" stroke-width="1" />
<line x1="749.00" y1="807.00" x2="761.50" y2="807.00" stroke="#7c7c7c" stroke-width="1" />
<line x1="761.00" y1="794.00" x2="761.00" y2="807.50" stroke="#7c7c7c" stroke-width="1" />
<polygon points="756.06,798.10 756.06,803.30 752.94,800.70" fill="#101010"/>
<rect x="1125.50" y="794.00" width="12.50" height="13.50" fill="#e2e2e2" />
<line x1="1125.50" y1="794.50" x2="1138.00" y2="794.50" stroke="#ffffff" stroke-width="1" />
<line x1="1126.00" y1="794.00" x2="1126.00" y2="807.50" stroke="#ffffff" stroke-width="1" />
<line x1="1125.50" y1="807.00" x2="1138.00" y2="807.00" stroke="#7c7c7c" stroke-width="1" />
<line x1="1137.50" y1="794.00" x2="1137.50" y2="807.50" stroke="#7c7c7c" stroke-width="1" />
<polygon points="1130.94,798.10 1130.94,803.30 1134.06,800.70" fill="#101010"/>
<rect x="1138.50" y="794.00" width="16.00" height="13.50" fill="#e4e4e4" />
<line x1="1138.50" y1="794.50" x2="1154.50" y2="794.50" stroke="#ffffff" stroke-width="1" />
<line x1="1139.00" y1="794.00" x2="1139.00" y2="807.50" stroke="#ffffff" stroke-width="1" />
<line x1="1138.50" y1="807.00" x2="1154.50" y2="807.00" stroke="#7c7c7c" stroke-width="1" />
<line x1="1154.00" y1="794.00" x2="1154.00" y2="807.50" stroke="#7c7c7c" stroke-width="1" />
<circle cx="1145.90" cy="799.95" r="3.7" fill="#f2f2f2" stroke="#0c0c0c" stroke-width="1.8"/>
<line x1="1148.80" y1="802.85" x2="1151.50" y2="805.55" stroke="#0c0c0c" stroke-width="2.2" stroke-linecap="round"/>
<line x1="1143.60" y1="799.95" x2="1148.20" y2="799.95" stroke="#0c0c0c" stroke-width="1.5" />
<line x1="1145.90" y1="797.65" x2="1145.90" y2="802.25" stroke="#0c0c0c" stroke-width="1.5" />
<rect x="1155.00" y="794.00" width="15.50" height="13.50" fill="#e4e4e4" />
<line x1="1155.00" y1="794.50" x2="1170.50" y2="794.50" stroke="#ffffff" stroke-width="1" />
<line x1="1155.50" y1="794.00" x2="1155.50" y2="807.50" stroke="#ffffff" stroke-width="1" />
<line x1="1155.00" y1="807.00" x2="1170.50" y2="807.00" stroke="#7c7c7c" stroke-width="1" />
<line x1="1170.00" y1="794.00" x2="1170.00" y2="807.50" stroke="#7c7c7c" stroke-width="1" />
<circle cx="1162.15" cy="799.95" r="3.7" fill="#f2f2f2" stroke="#0c0c0c" stroke-width="1.8"/>
<line x1="1165.05" y1="802.85" x2="1167.75" y2="805.55" stroke="#0c0c0c" stroke-width="2.2" stroke-linecap="round"/>
<line x1="1159.85" y1="799.95" x2="1164.45" y2="799.95" stroke="#0c0c0c" stroke-width="1.5" />
<rect x="1171.00" y="794.00" width="9.00" height="13.50" fill="#e2e2e2" />
<line x1="1171.00" y1="794.50" x2="1180.00" y2="794.50" stroke="#ffffff" stroke-width="1" />
<line x1="1171.50" y1="794.00" x2="1171.50" y2="807.50" stroke="#ffffff" stroke-width="1" />
<line x1="1171.00" y1="807.00" x2="1180.00" y2="807.00" stroke="#7c7c7c" stroke-width="1" />
<line x1="1179.50" y1="794.00" x2="1179.50" y2="807.50" stroke="#7c7c7c" stroke-width="1" />
<rect x="748.50" y="814.50" width="228.00" height="17.80" fill="#f7f7f4" />
<line x1="748.50" y1="815.00" x2="976.50" y2="815.00" stroke="#7a7a7a" stroke-width="1" />
<line x1="749.00" y1="814.50" x2="749.00" y2="832.30" stroke="#7a7a7a" stroke-width="1" />
<line x1="748.50" y1="832.00" x2="976.50" y2="832.00" stroke="#ffffff" stroke-width="1" />
<text x="750.20" y="825.30" font-size="9.6" fill="#1c1c1c" text-anchor="start" textLength="193.5" lengthAdjust="spacingAndGlyphs" style="white-space:pre">Cursor:  974 Hz,  left = 0.03 dB,  right = -77.09 dB</text>
<rect x="987.40" y="813.00" width="21.20" height="20.00" fill="#ececea" />
<line x1="987.40" y1="813.50" x2="1008.60" y2="813.50" stroke="#ffffff" stroke-width="1" />
<line x1="987.90" y1="813.00" x2="987.90" y2="833.00" stroke="#ffffff" stroke-width="1" />
<line x1="987.40" y1="832.50" x2="1008.60" y2="832.50" stroke="#77796e" stroke-width="1" />
<line x1="1008.10" y1="813.00" x2="1008.10" y2="833.00" stroke="#77796e" stroke-width="1" />
<text x="998" y="829.5" font-size="20" font-weight="bold" text-anchor="middle" fill="#111" style="font-family:'Liberation Serif',serif">A</text>
<rect x="1010.60" y="813.00" width="22.00" height="20.00" fill="#cfcfcf" />
<line x1="1010.60" y1="813.50" x2="1032.60" y2="813.50" stroke="#77796e" stroke-width="1" />
<line x1="1011.10" y1="813.00" x2="1011.10" y2="833.00" stroke="#77796e" stroke-width="1" />
<line x1="1010.60" y1="832.50" x2="1032.60" y2="832.50" stroke="#ffffff" stroke-width="1" />
<line x1="1032.10" y1="813.00" x2="1032.10" y2="833.00" stroke="#ffffff" stroke-width="1" />
<g transform="translate(1021.2,823)"><path d="M-7.8,-8.6 L-2.6,-8.6 L-1.2,-6.2 L2.2,-6.2 L3,-8.6 L7.8,-8.6 L7.8,1.6 L1.2,8.4 L-1.2,8.4 L-7.8,1.6 Z" fill="#1d2fd2"/><path d="M-2,-6.4 L2.4,-6.4 L3.2,-2.6 L0.6,-0.6 L-2.4,-3 Z" fill="#bcc6f4"/><path d="M5.6,-2.6 L0.2,4.8" stroke="#ccd4fb" stroke-width="1.9" fill="none"/><path d="M-5.4,-3.2 L-3.2,2.6" stroke="#9aa6ee" stroke-width="1.5" fill="none"/><path d="M3,-5.6 L6.4,-6.8 L5.8,-3 Z" fill="#dfe4ff"/><path d="M-3.4,2.2 L-0.4,5.6 L-4.4,5 Z" fill="#c9d0f8"/></g>
<rect x="1034.20" y="813.00" width="21.80" height="20.00" fill="#ececea" />
<line x1="1034.20" y1="813.50" x2="1056.00" y2="813.50" stroke="#ffffff" stroke-width="1" />
<line x1="1034.70" y1="813.00" x2="1034.70" y2="833.00" stroke="#ffffff" stroke-width="1" />
<line x1="1034.20" y1="832.50" x2="1056.00" y2="832.50" stroke="#77796e" stroke-width="1" />
<line x1="1055.50" y1="813.00" x2="1055.50" y2="833.00" stroke="#77796e" stroke-width="1" />
<g transform="translate(1045,823)"><line x1="-9.2" y1="8.4" x2="1.2" y2="-2" stroke="#767676" stroke-width="3.6" stroke-linecap="round"/><line x1="-8.8" y1="7.4" x2="0.8" y2="-2.2" stroke="#dedede" stroke-width="1.3" stroke-linecap="round"/><circle cx="3.8" cy="-4.4" r="4.7" fill="#a4a4a4" stroke="#6a6a6a" stroke-width="1.1"/><path d="M3.4,-4.6 L8.8,-10.4 L11,-3.4 Z" fill="#e9e9e6"/><circle cx="4.6" cy="-5" r="1.9" fill="#ececea"/><path d="M-0.6,-5.4 A4.7,4.7 0 0 1 3,-9" stroke="#e4e4e4" stroke-width="1" fill="none"/></g>
<rect x="1058.00" y="813.00" width="21.80" height="20.00" fill="#ececea" />
<line x1="1058.00" y1="813.50" x2="1079.80" y2="813.50" stroke="#ffffff" stroke-width="1" />
<line x1="1058.50" y1="813.00" x2="1058.50" y2="833.00" stroke="#ffffff" stroke-width="1" />
<line x1="1058.00" y1="832.50" x2="1079.80" y2="832.50" stroke="#77796e" stroke-width="1" />
<line x1="1079.30" y1="813.00" x2="1079.30" y2="833.00" stroke="#77796e" stroke-width="1" />
<g transform="translate(1060.2,815.2)"><rect x="0" y="0" width="16.6" height="16.2" fill="#76751b" stroke="#44440c" stroke-width="0.8"/><rect x="3" y="0.4" width="10.2" height="6.4" fill="#e8e8e4"/><rect x="2.6" y="9.4" width="11.1" height="6.8" fill="#0b0b0b"/><rect x="10.7" y="10.7" width="2.1" height="4.7" fill="#ececec"/></g>
<text x="1088.00" y="826.40" font-size="9.8" fill="#1c1c1c" text-anchor="start" textLength="22.0" lengthAdjust="spacingAndGlyphs" >Scale</text>
<rect x="1116.00" y="813.50" width="58.00" height="19.00" fill="#fbfbfb" />
<line x1="1116.00" y1="814.00" x2="1174.00" y2="814.00" stroke="#6f6f6f" stroke-width="1" />
<line x1="1116.50" y1="813.50" x2="1116.50" y2="832.50" stroke="#6f6f6f" stroke-width="1" />
<text x="1119.50" y="826.40" font-size="9.8" fill="#1c1c1c" text-anchor="start" >Log</text>
<rect x="1160.00" y="815.00" width="12.50" height="16.50" fill="#e2e2e2" />
<line x1="1160.00" y1="815.50" x2="1172.50" y2="815.50" stroke="#ffffff" stroke-width="1" />
<line x1="1160.50" y1="815.00" x2="1160.50" y2="831.50" stroke="#ffffff" stroke-width="1" />
<line x1="1160.00" y1="831.00" x2="1172.50" y2="831.00" stroke="#7c7c7c" stroke-width="1" />
<line x1="1172.00" y1="815.00" x2="1172.00" y2="831.50" stroke="#7c7c7c" stroke-width="1" />
<polygon points="1163.50,821.82 1169.10,821.82 1166.30,825.18" fill="#101010"/>
<rect x="0.00" y="795.00" width="740.00" height="285.00" fill="#d7dbc6" />
<path d="M0,819.5 L0,795 Q0,795 0,795 L735,795 Q740,795 740,800 L740,819.5 Z" fill="#f7f7f6"/>
<rect x="0" y="818.50" width="740" height="5.5" fill="url(#tb)"/>
<line x1="740.40" y1="801.00" x2="740.40" y2="1080.00" stroke="#8f9188" stroke-width="0.9" />
<g transform="translate(0.90,799.70) scale(0.993)">
<rect x="0" y="0" width="13.6" height="13.6" fill="#7b8760"/>
<rect x="0" y="9.6" width="13.6" height="4" fill="#8a9863"/>
<rect x="0" y="8.4" width="6" height="1.8" fill="#3c4b1f"/>
<rect x="8.6" y="7.6" width="5" height="1.5" fill="#3c4b1f"/>
<polyline points="0.3,8 2,7.4 5,1.3 6.7,11.9 10.4,0.8 11.8,6.1 13.6,6.3" fill="none" stroke="#f4f8e8" stroke-width="1.5" stroke-linejoin="miter"/>
</g>
<text x="18.70" y="810.70" font-size="10.6" fill="#8c8c8c" text-anchor="start" textLength="135.9" lengthAdjust="spacingAndGlyphs" >Intermodulation distortion test</text>
<line x1="640.00" y1="807.10" x2="648.00" y2="807.10" stroke="#b4b4b4" stroke-width="1" />
<rect x="678.30" y="802.60" width="8" height="8" fill="none" stroke="#b4b4b4" stroke-width="1"/>
<line x1="716.70" y1="802.60" x2="724.70" y2="810.60" stroke="#b4b4b4" stroke-width="1" />
<line x1="716.70" y1="810.60" x2="724.70" y2="802.60" stroke="#b4b4b4" stroke-width="1" />
<rect x="0.00" y="824.00" width="738.00" height="250.50" fill="#d9d9d9" />
<rect x="0.00" y="824.00" width="700.20" height="220.40" fill="#000000" />
<g stroke="#848484" stroke-width="0.9">
<line x1="3.44" y1="824" x2="3.44" y2="1044.4"/>
<line x1="39.73" y1="824" x2="39.73" y2="1044.4"/>
<line x1="65.48" y1="824" x2="65.48" y2="1044.4"/>
<line x1="85.46" y1="824" x2="85.46" y2="1044.4"/>
<line x1="101.78" y1="824" x2="101.78" y2="1044.4"/>
<line x1="115.57" y1="824" x2="115.57" y2="1044.4"/>
<line x1="127.53" y1="824" x2="127.53" y2="1044.4"/>
<line x1="138.07" y1="824" x2="138.07" y2="1044.4"/>
<line x1="147.50" y1="824" x2="147.50" y2="1044.4"/>
<line x1="209.54" y1="824" x2="209.54" y2="1044.4"/>
<line x1="245.83" y1="824" x2="245.83" y2="1044.4"/>
<line x1="271.58" y1="824" x2="271.58" y2="1044.4"/>
<line x1="291.56" y1="824" x2="291.56" y2="1044.4"/>
<line x1="307.88" y1="824" x2="307.88" y2="1044.4"/>
<line x1="321.67" y1="824" x2="321.67" y2="1044.4"/>
<line x1="333.63" y1="824" x2="333.63" y2="1044.4"/>
<line x1="344.17" y1="824" x2="344.17" y2="1044.4"/>
<line x1="353.60" y1="824" x2="353.60" y2="1044.4"/>
<line x1="415.64" y1="824" x2="415.64" y2="1044.4"/>
<line x1="451.93" y1="824" x2="451.93" y2="1044.4"/>
<line x1="477.68" y1="824" x2="477.68" y2="1044.4"/>
<line x1="497.66" y1="824" x2="497.66" y2="1044.4"/>
<line x1="513.98" y1="824" x2="513.98" y2="1044.4"/>
<line x1="527.77" y1="824" x2="527.77" y2="1044.4"/>
<line x1="539.73" y1="824" x2="539.73" y2="1044.4"/>
<line x1="550.27" y1="824" x2="550.27" y2="1044.4"/>
<line x1="559.70" y1="824" x2="559.70" y2="1044.4"/>
<line x1="621.74" y1="824" x2="621.74" y2="1044.4"/>
<line x1="658.03" y1="824" x2="658.03" y2="1044.4"/>
<line x1="683.78" y1="824" x2="683.78" y2="1044.4"/>
<line x1="0" y1="838.44" x2="700.2" y2="838.44"/>
<line x1="0" y1="853.17" x2="700.2" y2="853.17"/>
<line x1="0" y1="867.91" x2="700.2" y2="867.91"/>
<line x1="0" y1="882.64" x2="700.2" y2="882.64"/>
<line x1="0" y1="897.38" x2="700.2" y2="897.38"/>
<line x1="0" y1="912.11" x2="700.2" y2="912.11"/>
<line x1="0" y1="926.85" x2="700.2" y2="926.85"/>
<line x1="0" y1="941.58" x2="700.2" y2="941.58"/>
<line x1="0" y1="956.32" x2="700.2" y2="956.32"/>
<line x1="0" y1="971.05" x2="700.2" y2="971.05"/>
<line x1="0" y1="985.79" x2="700.2" y2="985.79"/>
<line x1="0" y1="1000.52" x2="700.2" y2="1000.52"/>
<line x1="0" y1="1015.26" x2="700.2" y2="1015.26"/>
<line x1="0" y1="1029.99" x2="700.2" y2="1029.99"/>
</g>
<rect x="0.00" y="1074.00" width="740.00" height="6.00" fill="#d3d7c2" />
<polyline points="0.0,1005.6 12.0,1004.4 25.0,1004.0 38.0,1006.0 48.0,1004.6 58.0,1002.4 65.0,1000.0 69.0,999.4 73.2,998.9 75.0,985.0 77.5,962.0 80.0,942.0 82.5,925.0 85.3,900.0 88.0,878.0 91.0,860.0 94.0,846.0 97.0,837.0 99.5,833.4 101.6,832.6 103.6,833.4 106.0,837.4 108.5,846.0 111.0,860.0 113.5,880.0 115.4,905.0 116.6,925.0 118.0,950.0 119.5,975.0 121.0,989.0 123.0,996.5 126.0,1000.5 130.0,1001.0 134.0,1002.4 138.0,1001.0 142.0,1004.6 147.5,1007.4 151.0,1004.8 155.0,1003.6 157.4,996.0 159.5,981.0 161.8,968.0 164.0,963.0 166.2,968.0 168.2,982.0 169.8,998.0 171.2,1004.6 175.0,1007.6 180.0,1004.0 184.0,1002.6 188.0,1005.4 193.0,1004.4 198.0,1003.4 203.0,1006.0 208.0,1008.4 214.0,1009.0 220.0,1008.6 221.6,1006.1 223.2,1004.3 224.8,1006.4 226.4,1006.9 228.0,1007.4 229.6,1007.6 231.2,1010.3 232.8,1011.1 234.4,1012.4 236.0,1010.5 237.6,1008.8 239.2,1006.4 240.8,1006.3 242.4,1001.0 244.0,1006.6 245.6,1007.4 247.2,1007.8 248.8,1009.7 250.0,1006.4 250.8,1010.8 251.5,1009.5 252.2,1008.8 253.0,1004.5 253.8,1010.0 254.5,1006.4 255.2,1009.6 256.0,1008.8 256.8,1008.4 257.5,1006.9 258.2,1005.2 259.0,1006.9 259.8,1005.5 260.5,1006.0 261.2,1007.4 262.0,1007.5 262.8,1008.0 263.5,1008.4 264.2,1009.2 265.0,1005.1 265.8,1005.5 266.5,1005.1 267.2,1004.6 268.0,1007.0 268.8,1007.0 269.5,1008.7 270.2,1006.1 271.0,1006.4 271.8,1007.4 272.5,1007.6 273.2,1007.7 274.0,1009.7 274.8,1009.0 275.5,1005.4 276.2,1009.0 277.0,1009.6 277.8,1007.2 278.5,1007.4 279.2,1008.1 280.0,1009.1 280.8,1006.9 281.5,1005.0 282.2,1010.4 283.0,1009.1 283.8,1010.2 284.5,1009.2 285.2,1007.5 286.0,1004.9 286.8,1010.6 287.5,1005.5 288.2,1007.5 289.0,1008.0 289.8,1005.1 290.5,1008.3 291.2,1004.7 292.0,1007.7 292.8,1007.5 293.5,1005.8 294.2,1007.8 295.0,1007.5 295.8,1006.3 296.5,1009.9 297.2,1007.1 298.0,1006.4 298.8,1006.0 299.5,1007.5 300.2,1004.7 301.0,1007.7 301.8,1006.1 302.5,1007.2 303.2,1006.1 304.0,1006.2 304.8,1007.2 305.5,1006.8 306.2,1010.7 307.0,1008.3 307.8,1007.2 308.5,1007.0 309.2,1006.9 310.0,1006.0 310.8,1008.2 311.5,1007.2 312.2,1007.5 313.0,1005.5 313.8,1004.0 314.5,1007.2 315.2,1008.4 316.0,1007.1 316.8,1004.6 317.5,1006.4 318.2,1005.7 319.0,1009.4 319.8,1006.4 320.5,1007.7 321.2,1005.1 322.0,1008.5 322.8,1010.3 323.5,1005.8 324.2,1005.9 325.0,1005.7 325.8,1004.5 326.5,1007.2 327.2,1007.7 328.0,1006.5 328.8,1007.5 329.5,1006.7 330.2,1006.1 331.0,1005.3 331.8,1005.4 332.5,1006.7 333.2,1004.3 334.0,1005.7 334.8,1006.6 335.5,1008.4 336.2,1005.8 337.0,1003.9 337.8,1006.5 338.5,1007.5 339.2,1005.1 340.0,1005.9 340.8,1007.3 341.5,1007.2 342.2,1007.0 343.0,1008.9 343.8,1007.3 344.5,1008.3 345.2,1008.5 346.0,1006.8 346.8,1007.6 347.5,1008.1 348.2,1006.5 349.0,1008.3 349.8,1008.0 350.5,1005.0 351.2,1003.8 352.0,1006.7 352.8,1005.4 353.5,1005.8 354.2,1006.1 355.0,1005.8 355.8,1007.8 356.5,1007.0 357.2,1009.2 358.0,1007.2 358.8,1005.4 359.5,1007.0 360.2,1005.4 361.0,1006.9 361.8,1007.5 362.5,1008.2 363.2,1008.1 364.0,1006.6 364.8,1007.0 365.5,1008.0 366.2,1007.3 367.0,1007.3 367.8,1006.0 368.5,1007.4 369.2,1004.6 370.0,1007.3 370.8,1007.1 371.5,1008.4 372.2,1005.6 373.0,1006.3 373.8,1006.3 374.5,1006.6 375.2,1008.5 376.0,1007.3 376.8,1007.3 377.5,1007.9 378.2,1007.4 379.0,1007.3 379.8,1008.7 380.5,1008.4 381.2,1007.6 382.0,1007.5 382.8,1006.3 383.5,1004.9 384.2,1007.7 385.0,1007.0 385.8,1007.9 386.5,1007.3 387.2,1007.6 388.0,1006.3 388.8,1006.5 389.5,1007.4 390.2,1005.8 391.0,1006.9 391.8,1006.8 392.5,1006.5 393.2,1006.9 394.0,1006.3 394.8,1005.7 395.5,1005.1 396.2,1006.3 397.0,1006.4 397.8,1008.1 398.5,1005.5 399.2,1007.7 400.0,1005.1 400.8,1005.8 401.5,1008.2 402.2,1006.1 403.0,1007.2 403.8,1004.7 404.5,1006.5 405.2,1005.3 406.0,1004.0 406.8,1009.6 407.5,1006.3 408.2,1007.5 409.0,1006.4 409.8,1006.8 410.5,1005.7 411.2,1006.1 412.0,1007.4 412.8,1008.5 413.5,1006.3 414.2,1007.6 415.0,1009.0 415.8,1006.5 416.5,1007.7 417.2,1005.7 418.0,1005.8 418.8,1007.1 419.5,1006.8 420.2,1005.5 421.0,1006.6 421.8,1005.7 422.5,1005.2 423.2,1004.3 424.0,1006.0 424.8,1006.4 425.5,1006.1 426.2,1007.0 427.0,1006.1 427.8,1005.5 428.5,1005.5 429.2,1006.8 430.0,1006.7 430.8,1005.3 431.5,1006.8 432.2,1006.5 433.0,1007.0 433.8,1007.7 434.5,1006.6 435.2,1007.3 436.0,1007.4 436.8,1005.6 437.5,1006.7 438.2,1005.4 439.0,1005.8 439.8,1006.3 440.5,1007.1 441.2,1007.2 442.0,1006.4 442.8,1006.1 443.5,1006.9 444.2,1007.5 445.0,1006.5 445.8,1007.2 446.5,1005.3 447.2,1005.3 448.0,1006.6 448.8,1006.5 449.5,1005.7 450.2,1006.4 451.0,1006.8 451.8,1007.0 452.5,1005.1 453.2,1006.3 454.0,1008.8 454.8,1006.1 455.5,1006.6 456.2,1005.6 457.0,1006.7 457.8,1006.7 458.5,1006.8 459.2,1007.9 460.0,1006.7 460.8,1005.2 461.5,1006.8 462.2,1006.6 463.0,1005.7 463.8,1005.6 464.5,1005.3 465.2,1007.2 466.0,1007.1 466.8,1006.3 467.5,1005.2 468.2,1005.9 469.0,1005.8 469.8,1006.1 470.5,1006.7 471.2,1006.6 472.0,1008.1 472.8,1006.9 473.5,1006.5 474.2,1006.0 475.0,1006.3 475.8,1005.8 476.5,1006.9 477.2,1006.4 478.0,1007.9 478.8,1006.9 479.5,1005.3 480.2,1007.5 481.0,1004.6 481.8,1008.2 482.5,1007.4 483.2,1004.0 484.0,1005.3 484.8,1005.5 485.5,1007.0 486.2,1006.0 487.0,1006.4 487.8,1006.4 488.5,1005.6 489.2,1005.6 490.0,1005.8 490.8,1006.1 491.5,1003.8 492.2,1005.1 493.0,1006.0 493.8,1007.3 494.5,1004.7 495.2,1004.7 496.0,1004.4 496.8,1006.8 497.5,1006.0 498.2,1007.4 499.0,1006.0 499.8,1006.8 500.5,1007.4 501.2,1005.4 502.0,1004.4 502.8,1007.0 503.5,1005.8 504.2,1007.9 505.0,1008.0 505.8,1006.4 506.5,1005.0 507.2,1005.9 508.0,1006.4 508.8,1005.8 509.5,1006.5 510.2,1007.4 511.0,1007.2 511.8,1005.2 512.5,1005.7 513.2,1006.4 514.0,1005.5 514.8,1005.3 515.5,1004.6 516.2,1007.2 517.0,1007.0 517.8,1005.3 518.5,1004.9 519.2,1005.6 520.0,1006.7 520.8,1005.5 521.5,1007.1 522.2,1005.6 523.0,1007.0 523.8,1006.6 524.5,1005.4 530.6,1005.2 531.4,1005.7 532.1,1006.5 532.9,1005.7 533.6,1005.2 534.4,1004.8 535.1,1006.6 535.9,1006.0 536.6,1005.6 537.4,1005.3 538.1,1004.1 538.9,1006.0 539.6,1005.4 540.4,1006.0 541.1,1007.3 541.9,1005.9 542.6,1006.0 543.4,1006.8 544.1,1006.0 544.9,1006.2 545.6,1005.2 546.4,1005.3 547.1,1004.7 547.9,1006.7 548.6,1007.1 549.4,1005.8 550.1,1006.0 550.9,1005.8 551.6,1008.1 552.4,1007.1 553.1,1006.1 553.9,1006.7 554.6,1007.2 555.4,1005.5 556.1,1006.5 556.9,1006.6 557.6,1006.2 558.4,1006.7 559.1,1007.1 559.9,1006.2 560.6,1005.9 561.4,1006.8 562.1,1006.3 562.9,1006.4 563.6,1007.5 564.4,1006.5 565.1,1006.1 565.9,1005.1 566.6,1006.2 567.4,1006.3 568.1,1006.5 568.9,1006.4 569.6,1006.5 570.4,1006.2 571.1,1006.1 571.9,1006.4 572.6,1005.5 573.4,1005.2 574.1,1005.2 574.9,1005.9 575.6,1004.7 576.4,1005.4 577.1,1005.7 577.9,1006.1 578.6,1005.2 579.4,1005.8 580.1,1005.9 580.9,1005.5 581.6,1005.8 582.4,1005.7 583.1,1005.0 583.9,1005.5 584.6,1005.1 585.4,1006.9 586.1,1005.7 586.9,1004.3 587.6,1000.9 588.4,996.6 589.1,996.2 589.9,1001.5 590.6,1003.4 591.4,1004.8 592.1,1004.8 592.9,1005.6 593.6,1005.0 594.4,1005.4 595.1,1006.7 595.9,1004.5 596.6,1005.3 597.4,1005.5 598.1,1004.6 598.9,1006.2 599.6,1005.5 600.4,1005.8 601.1,1006.0 601.9,1006.5 602.6,1005.3 603.4,1005.1 604.1,1004.7 604.9,1004.7 605.6,1006.7 606.4,1005.4 607.1,1004.4 607.9,1005.9 608.6,1006.8 609.4,1005.1 610.1,1005.5 610.9,1004.7 611.6,1004.2 612.4,1005.4 613.1,1004.8 613.9,1004.8 614.6,1005.6 615.4,1005.9 616.1,1005.5 616.9,1006.5 617.6,1005.3 618.4,1005.4 619.1,1006.2 619.9,1007.2 620.6,1007.1 621.4,1006.4 622.1,1005.8 622.9,1004.8 623.6,1006.5 624.4,1005.7 625.1,1007.2 625.9,1005.9 626.6,1004.4 627.4,1006.3 628.1,1005.9 628.9,1005.3 629.6,1005.8 630.4,1005.7 631.1,1005.9 631.9,1004.5 632.6,1005.6 633.4,1006.0 634.1,1004.9 634.9,1006.5 635.6,1005.7 636.4,1004.4 637.1,1006.6 637.9,1005.6 638.6,1005.7 639.4,1005.6 640.1,1007.0 640.9,1005.9 641.6,1005.2 642.4,1005.2 643.1,1006.0 643.9,1006.1 644.6,1005.2 645.4,1006.2 646.1,1005.2 646.9,1005.6 647.6,1005.9 648.4,1005.7 649.1,1005.7 649.9,1005.7 650.6,1005.2 651.4,1005.5 652.1,1005.6 652.9,1004.6 653.6,1004.4 654.4,1005.4 655.1,1005.3 655.9,1005.4 656.6,1005.7 657.4,1005.5 658.1,1005.0 658.9,1005.5 659.6,1004.8 660.4,1006.2 661.1,1005.9 661.9,1005.2 662.6,1002.6 663.4,1002.3 664.1,1004.8 664.9,1004.3 665.6,1004.9 666.4,1004.6 667.1,1005.0 667.9,1004.3 668.6,1005.4 669.4,1005.3 670.1,1003.1 670.9,1002.5 671.6,1003.0 672.4,1004.6 673.1,1003.9 673.9,1003.3 674.6,1003.2 675.4,1002.0 676.1,1002.6 676.9,1001.6 677.6,1002.1 678.4,1001.6 679.1,1001.2 679.9,1001.0 680.6,1001.4 681.4,1002.0 682.1,999.3 682.9,1000.3 683.6,999.3 684.4,1000.2 685.1,999.6 685.9,998.0 686.6,998.1 687.4,998.6 688.1,998.5 688.9,996.5 689.6,995.6 690.4,995.9 691.1,996.1 691.9,995.4 692.6,994.5 693.4,994.1 694.1,993.6 694.9,992.9 695.6,992.0 696.4,992.3 697.1,991.8 697.9,991.6 698.6,990.8 699.4,990.1" fill="none" stroke="#f4f4f4" stroke-width="1.0" stroke-linejoin="round" />
<polyline points="0.0,1002.4 12.0,1002.8 25.0,1003.6 32.0,1002.2 40.0,1001.2 50.0,1002.8 58.0,1001.8 65.0,999.4 69.0,998.4 73.2,998.6 75.0,985.0 77.5,962.0 80.0,942.0 82.5,925.0 85.3,900.0 88.0,878.0 91.0,860.0 94.0,846.0 97.0,837.0 99.5,833.4 101.6,832.6 103.6,833.4 106.0,837.4 108.5,846.0 111.0,860.0 113.5,880.0 115.4,905.0 116.6,925.0 118.0,950.0 119.5,975.0 121.0,989.0 123.0,996.5 126.0,1000.5 130.0,1001.6 133.0,1000.4 137.0,1003.0 141.0,1002.0 145.0,1006.0 149.0,1005.6 152.0,1003.6 155.0,1003.0 157.2,995.0 159.3,980.0 161.6,967.0 164.0,962.0 166.4,967.0 168.4,981.0 170.0,997.0 171.5,1005.0 175.0,1005.8 179.0,1003.0 183.0,1005.8 187.0,1003.0 192.0,1005.6 197.0,1002.4 202.0,1004.6 207.0,1005.6 213.0,1003.0 220.0,1004.6 221.6,1006.3 223.2,1005.1 224.8,1008.5 226.4,1005.2 228.0,1005.6 229.6,1007.4 231.2,1008.4 232.8,1009.1 234.4,1006.6 236.0,1010.3 237.6,1008.1 239.2,1007.8 240.8,1007.7 242.4,1007.7 244.0,1006.6 245.6,1010.4 247.2,1009.8 248.8,1011.3 250.0,1005.6 250.8,1008.3 251.5,1010.9 252.2,1005.1 253.0,1005.7 253.8,1010.7 254.5,1011.2 255.2,1006.7 256.0,1012.5 256.8,1008.6 257.5,1007.1 258.2,1010.5 259.0,1008.6 259.8,1009.4 260.5,1005.0 261.2,1008.5 262.0,1007.6 262.8,1003.6 263.5,1008.4 264.2,1004.0 265.0,1005.1 265.8,1005.3 266.5,1007.2 267.2,1004.6 268.0,1007.1 268.8,1005.3 269.5,1010.0 270.2,1006.2 271.0,1007.7 271.8,1009.7 272.5,1004.9 273.2,1005.9 274.0,1007.5 274.8,1004.5 275.5,1004.9 276.2,1003.6 277.0,1006.8 277.8,1007.3 278.5,1006.5 279.2,1008.2 280.0,1007.2 280.8,1007.2 281.5,1003.6 282.2,1006.8 283.0,1007.1 283.8,1005.0 284.5,1008.1 285.2,1005.3 286.0,1006.1 286.8,1006.4 287.5,1006.1 288.2,1008.1 289.0,1008.2 289.8,1007.6 290.5,1006.3 291.2,1006.3 292.0,1006.3 292.8,1009.4 293.5,1005.1 294.2,1007.9 295.0,1007.4 295.8,1007.6 296.5,1007.4 297.2,1004.2 298.0,1008.1 298.8,1008.2 299.5,1007.2 300.2,1004.1 301.0,1006.4 301.8,1003.9 302.5,1004.8 303.2,1007.9 304.0,1006.6 304.8,1008.6 305.5,1006.9 306.2,1003.7 307.0,1006.2 307.8,1004.3 308.5,1009.0 309.2,1009.0 310.0,1004.6 310.8,1008.4 311.5,1008.6 312.2,1007.7 313.0,1002.8 313.8,1006.4 314.5,1006.8 315.2,1004.8 316.0,1006.3 316.8,1004.9 317.5,1007.3 318.2,1006.4 319.0,1009.6 319.8,1005.5 320.5,1005.9 321.2,1008.8 322.0,1007.9 322.8,1004.7 323.5,1008.0 324.2,1005.8 325.0,1002.7 325.8,1006.8 326.5,1004.5 327.2,1006.3 328.0,1006.8 328.8,1006.0 329.5,1006.4 330.2,1008.6 331.0,1005.6 331.8,1008.8 332.5,1003.5 333.2,1005.8 334.0,1005.4 334.8,1006.4 335.5,1006.1 336.2,1005.8 337.0,1006.1 337.8,1005.1 338.5,1006.0 339.2,1007.2 340.0,1004.3 340.8,1006.5 341.5,1006.0 342.2,1003.6 343.0,1004.0 343.8,1006.7 344.5,1006.1 345.2,1006.2 346.0,1004.4 346.8,1006.9 347.5,1007.0 348.2,1006.7 349.0,1008.5 349.8,1006.0 350.5,1005.9 351.2,1007.2 352.0,1008.0 352.8,1005.3 353.5,1004.2 354.2,1006.6 355.0,1006.6 355.8,1006.0 356.5,1006.6 357.2,1006.8 358.0,1006.6 358.8,1005.9 359.5,1009.0 360.2,1007.5 361.0,1006.4 361.8,1006.5 362.5,1008.3 363.2,1006.2 364.0,1004.4 364.8,1007.7 365.5,1006.6 366.2,1006.1 367.0,1004.2 367.8,1004.5 368.5,1008.1 369.2,1005.3 370.0,1005.4 370.8,1004.0 371.5,1003.1 372.2,1005.5 373.0,1006.9 373.8,1007.4 374.5,1008.3 375.2,1007.1 376.0,1006.6 376.8,1004.7 377.5,1003.0 378.2,1005.4 379.0,1004.7 379.8,1007.0 380.5,1006.3 381.2,1005.7 382.0,1005.9 382.8,1007.2 383.5,1005.5 384.2,1005.2 385.0,1006.9 385.8,1006.3 386.5,1004.8 387.2,1005.5 388.0,1009.1 388.8,1006.2 389.5,1007.5 390.2,1008.0 391.0,1006.5 391.8,1006.2 392.5,1006.8 393.2,1004.1 394.0,1006.3 394.8,1003.4 395.5,1007.1 396.2,1007.0 397.0,1006.4 397.8,1006.4 398.5,1006.5 399.2,1005.5 400.0,1004.4 400.8,1005.2 401.5,1007.3 402.2,1005.7 403.0,1006.1 403.8,1006.0 404.5,1006.5 405.2,1007.7 406.0,1003.9 406.8,1006.3 407.5,1004.6 408.2,1003.8 409.0,1005.7 409.8,1008.5 410.5,1005.5 411.2,1006.7 412.0,1006.3 412.8,1005.4 413.5,1006.1 414.2,1005.8 415.0,1006.2 415.8,1005.0 416.5,1006.6 417.2,1006.6 418.0,1006.9 418.8,1005.5 419.5,1005.6 420.2,1006.0 421.0,1005.9 421.8,1005.5 422.5,1007.0 423.2,1006.6 424.0,1005.2 424.8,1006.0 425.5,1005.7 426.2,1005.4 427.0,1008.0 427.8,1006.0 428.5,1005.3 429.2,1005.4 430.0,1007.1 430.8,1006.0 431.5,1006.2 432.2,1005.2 433.0,1006.7 433.8,1006.7 434.5,1005.4 435.2,1005.6 436.0,1005.6 436.8,1006.3 437.5,1006.0 438.2,1005.8 439.0,1005.1 439.8,1005.7 440.5,1006.0 441.2,1006.0 442.0,1006.7 442.8,1005.3 443.5,1004.9 444.2,1004.9 445.0,1007.6 445.8,1005.9 446.5,1003.4 447.2,1005.4 448.0,1006.5 448.8,1003.3 449.5,1006.7 450.2,1005.0 451.0,1005.3 451.8,1005.3 452.5,1005.1 453.2,1005.6 454.0,1005.6 454.8,1004.8 455.5,1004.7 456.2,1005.3 457.0,1005.4 457.8,1006.1 458.5,1005.0 459.2,1005.2 460.0,1005.6 460.8,1006.8 461.5,1006.4 462.2,1006.8 463.0,1005.6 463.8,1006.0 464.5,1006.1 465.2,1007.0 466.0,1005.0 466.8,1004.8 467.5,1003.8 468.2,1005.3 469.0,1004.1 469.8,1006.4 470.5,1006.0 471.2,1006.1 472.0,1005.5 472.8,1005.1 473.5,1006.7 474.2,1006.9 475.0,1007.6 475.8,1005.4 476.5,1006.2 477.2,1006.6 478.0,1005.6 478.8,1006.9 479.5,1006.5 480.2,1008.5 481.0,1005.1 481.8,1005.7 482.5,1005.3 483.2,1006.3 484.0,1005.9 484.8,1006.4 485.5,1008.3 486.2,1005.7 487.0,1006.6 487.8,1005.3 488.5,1005.4 489.2,1006.4 490.0,1005.8 490.8,1004.7 491.5,1006.6 492.2,1004.8 493.0,1003.8 493.8,1004.5 494.5,1005.1 495.2,1006.1 496.0,1006.2 496.8,1004.9 497.5,1004.5 498.2,1005.9 499.0,1006.0 499.8,1004.9 500.5,1004.8 501.2,1006.5 502.0,1007.5 502.8,1006.1 503.5,1004.3 504.2,1005.6 505.0,1004.6 505.8,1004.0 506.5,1003.7 507.2,1003.8 508.0,1005.7 508.8,1005.8 509.5,1005.4 510.2,1006.4 511.0,1006.5 511.8,1004.3 512.5,1005.3 513.2,1004.7 514.0,1005.3 514.8,1006.2 515.5,1005.2 516.2,1004.4 517.0,1005.9 517.8,1006.0 518.5,1005.8 519.2,1005.9 520.0,1005.7 520.8,1006.7 521.5,1003.9 522.2,1005.1 523.0,1005.4 523.8,1005.3 524.5,1007.1 525.8,1005.0 526.2,985.0 526.9,972.0 527.3,945.0 527.6,849.0 527.9,945.0 528.3,972.0 529.0,985.0 529.4,1006.0 530.6,1004.9 531.4,1005.7 532.1,1006.9 532.9,1004.6 533.6,1006.4 534.4,1005.5 535.1,1006.7 535.9,1005.8 536.6,1005.8 537.4,1006.3 538.1,1005.5 538.9,1005.9 539.6,1005.8 540.4,1007.0 541.1,1006.3 541.9,1004.6 542.6,1006.0 543.4,1006.1 544.1,1005.9 544.9,1006.9 545.6,1006.7 546.4,1004.8 547.1,1006.7 547.9,1005.5 548.6,1005.4 549.4,1005.3 550.1,1005.6 550.9,1006.3 551.6,1004.9 552.4,1005.5 553.1,1005.1 553.9,1005.4 554.6,1005.3 555.4,1006.0 556.1,1006.2 556.9,1005.0 557.6,1005.7 558.4,1004.4 559.1,1005.6 559.9,1006.1 560.6,1005.5 561.4,1007.3 562.1,1006.1 562.9,1005.1 563.6,1005.8 564.4,1005.1 565.1,1005.9 565.9,1005.5 566.6,1005.6 567.4,1003.7 568.1,1004.8 568.9,1006.0 569.6,1006.1 570.4,1006.1 571.1,1005.7 571.9,1006.2 572.6,1006.2 573.4,1005.9 574.1,1006.3 574.9,1006.2 575.6,1005.2 576.4,1005.8 577.1,1006.1 577.9,1005.4 578.6,1004.1 579.4,1005.1 580.1,1005.5 580.9,1003.7 581.6,1004.2 582.4,1004.5 583.1,1006.4 583.9,1006.0 584.6,1005.2 585.4,1005.9 586.1,1005.6 586.9,1003.4 587.6,1000.8 588.4,996.5 589.1,995.8 589.9,1001.8 590.6,1003.6 591.4,1004.8 592.1,1004.9 592.9,1005.1 593.6,1005.1 594.4,1006.0 595.1,1006.6 595.9,1005.1 596.6,1004.1 597.4,1004.8 598.1,1005.2 598.9,1006.2 599.6,1005.7 600.4,1005.3 601.1,1007.0 601.9,1004.6 602.6,1004.4 603.4,1006.1 604.1,1005.7 604.9,1005.3 605.6,1004.4 606.4,1005.4 607.1,1005.4 607.9,1004.8 608.6,1005.2 609.4,1004.2 610.1,1005.9 610.9,1004.5 611.6,1005.8 612.4,1004.6 613.1,1004.5 613.9,1005.0 614.6,1004.7 615.4,1005.6 616.1,1004.7 616.9,1005.3 617.6,1005.7 618.4,1005.9 619.1,1005.9 619.9,1005.2 620.6,1006.6 621.4,1005.3 622.1,1004.9 622.9,1005.4 623.6,1006.5 624.4,1004.3 625.1,1004.9 625.9,1006.2 626.6,1005.5 627.4,1004.4 628.1,1005.6 628.9,1005.7 629.6,1005.2 630.4,1004.4 631.1,1005.0 631.9,1004.9 632.6,1006.2 633.4,1004.7 634.1,1004.0 634.9,1005.4 635.6,1005.1 636.4,1006.1 637.1,1003.7 637.9,1005.0 638.6,1005.9 639.4,1005.2 640.1,1005.5 640.9,1004.8 641.6,1006.3 642.4,1004.5 643.1,1005.2 643.9,1005.1 644.6,1005.1 645.4,1005.6 646.1,1005.1 646.9,1005.2 647.6,1005.5 648.4,1005.3 649.1,1005.7 649.9,1004.6 650.6,1006.1 651.4,1004.1 652.1,1003.9 652.9,1004.4 653.6,1004.2 654.4,1005.3 655.1,1005.3 655.9,1005.6 656.6,1005.6 657.4,1005.4 658.1,1006.8 658.9,1004.7 659.6,1004.9 660.4,1004.7 661.1,1005.5 661.9,1004.8 662.6,1002.3 663.4,1001.5 664.1,1004.6 664.9,1003.9 665.6,1004.8 666.4,1004.7 667.1,1004.3 667.9,1004.4 668.6,1004.2 669.4,1004.8 670.1,1003.6 670.9,1003.1 671.6,1003.4 672.4,1003.1 673.1,1003.5 673.9,1002.7 674.6,1002.0 675.4,1002.3 676.1,1002.6 676.9,1001.4 677.6,1002.3 678.4,1002.7 679.1,1000.9 679.9,1000.8 680.6,1000.3 681.4,998.9 682.1,999.8 682.9,998.4 683.6,998.8 684.4,999.2 685.1,999.8 685.9,998.7 686.6,997.8 687.4,998.0 688.1,997.1 688.9,996.2 689.6,996.6 690.4,995.2 691.1,995.4 691.9,995.5 692.6,993.9 693.4,993.2 694.1,992.0 694.9,992.5 695.6,992.0 696.4,992.1 697.1,991.5 697.9,990.7 698.6,990.4 699.4,990.2 699.8,990.0 699.8,1044.4" fill="none" stroke="#35e035" stroke-width="1.1" stroke-linejoin="round" />
<line x1="527.60" y1="849.00" x2="527.60" y2="1004.00" stroke="#3fd83f" stroke-width="1.2" />
<rect x="526" y="979" width="3.4" height="26" fill="none" stroke="#3fce3f" stroke-width="0.9"/>
<rect x="7.75" y="833.75" width="17.80" height="17.40" rx="2.4" fill="#030603" stroke="#ececec" stroke-width="1.3"/>
<line x1="11.78" y1="835.70" x2="11.78" y2="849.20" stroke="#909090" stroke-width="0.9" />
<line x1="17.80" y1="835.70" x2="17.80" y2="849.20" stroke="#909090" stroke-width="0.9" />
<line x1="22.57" y1="835.70" x2="22.57" y2="849.20" stroke="#909090" stroke-width="0.9" />
<line x1="9.70" y1="836.37" x2="23.60" y2="836.37" stroke="#909090" stroke-width="0.9" />
<line x1="9.70" y1="840.30" x2="23.60" y2="840.30" stroke="#909090" stroke-width="0.9" />
<line x1="9.70" y1="844.32" x2="23.60" y2="844.32" stroke="#909090" stroke-width="0.9" />
<rect x="9.50" y="846.20" width="14.30" height="3.2" fill="#2cab2c" opacity="0.85"/>
<rect x="9.50" y="844.60" width="14.30" height="1.8" fill="#2a8a2a" opacity="0.55"/>
<line x1="15.12" y1="836.10" x2="15.12" y2="848.80" stroke="#2f9f2f" stroke-width="1.3" />
<line x1="20.76" y1="842.45" x2="20.76" y2="848.80" stroke="#63c763" stroke-width="1.3" />
<line x1="10.30" y1="847.20" x2="23.00" y2="847.20" stroke="#7fe07f" stroke-width="0.8" stroke-dasharray="1.6 1.2"/>
<text x="40.70" y="838.30" font-size="9.6" fill="#f2f2f2" text-anchor="start" textLength="49.3" lengthAdjust="spacingAndGlyphs" >Left channel</text>
<text x="40.70" y="851.40" font-size="9.6" fill="#36c936" text-anchor="start" textLength="55.2" lengthAdjust="spacingAndGlyphs" >Right channel</text>
<text transform="translate(700.90,831.50) scale(0.87,1)" font-size="9.8" fill="#262626" text-anchor="start" >dB</text>
<text transform="translate(700.90,856.17) scale(0.87,1)" font-size="9.8" fill="#262626" text-anchor="start" >-20</text>
<text transform="translate(700.90,870.91) scale(0.87,1)" font-size="9.8" fill="#262626" text-anchor="start" >-30</text>
<text transform="translate(700.90,885.64) scale(0.87,1)" font-size="9.8" fill="#262626" text-anchor="start" >-40</text>
<text transform="translate(700.90,900.38) scale(0.87,1)" font-size="9.8" fill="#262626" text-anchor="start" >-50</text>
<text transform="translate(700.90,915.11) scale(0.87,1)" font-size="9.8" fill="#262626" text-anchor="start" >-60</text>
<text transform="translate(700.90,929.85) scale(0.87,1)" font-size="9.8" fill="#262626" text-anchor="start" >-70</text>
<text transform="translate(700.90,944.58) scale(0.87,1)" font-size="9.8" fill="#262626" text-anchor="start" >-80</text>
<text transform="translate(700.90,959.32) scale(0.87,1)" font-size="9.8" fill="#262626" text-anchor="start" >-90</text>
<text transform="translate(700.90,974.05) scale(0.87,1)" font-size="9.8" fill="#262626" text-anchor="start" >-100</text>
<text transform="translate(700.90,988.79) scale(0.87,1)" font-size="9.8" fill="#262626" text-anchor="start" >-110</text>
<text transform="translate(700.90,1003.52) scale(0.87,1)" font-size="9.8" fill="#262626" text-anchor="start" >-120</text>
<text transform="translate(700.90,1018.26) scale(0.87,1)" font-size="9.8" fill="#262626" text-anchor="start" >-130</text>
<text transform="translate(700.90,1032.99) scale(0.87,1)" font-size="9.8" fill="#262626" text-anchor="start" >-140</text>
<text transform="translate(39.70,1053.90) scale(0.87,1)" font-size="9.8" fill="#262626" text-anchor="middle" >30</text>
<text transform="translate(85.50,1053.90) scale(0.87,1)" font-size="9.8" fill="#262626" text-anchor="middle" >50</text>
<text transform="translate(147.50,1053.90) scale(0.87,1)" font-size="9.8" fill="#262626" text-anchor="middle" >100</text>
<text transform="translate(209.50,1053.90) scale(0.87,1)" font-size="9.8" fill="#262626" text-anchor="middle" >200</text>
<text transform="translate(246.00,1053.90) scale(0.87,1)" font-size="9.8" fill="#262626" text-anchor="middle" >300</text>
<text transform="translate(291.50,1053.90) scale(0.87,1)" font-size="9.8" fill="#262626" text-anchor="middle" >500</text>
<text transform="translate(353.60,1053.90) scale(0.87,1)" font-size="9.8" fill="#262626" text-anchor="middle" >1K</text>
<text transform="translate(415.60,1053.90) scale(0.87,1)" font-size="9.8" fill="#262626" text-anchor="middle" >2K</text>
<text transform="translate(452.00,1053.90) scale(0.87,1)" font-size="9.8" fill="#262626" text-anchor="middle" >3K</text>
<text transform="translate(497.70,1053.90) scale(0.87,1)" font-size="9.8" fill="#262626" text-anchor="middle" >5K</text>
<text transform="translate(559.70,1053.90) scale(0.87,1)" font-size="9.8" fill="#262626" text-anchor="middle" >10K</text>
<text transform="translate(621.70,1053.90) scale(0.87,1)" font-size="9.8" fill="#262626" text-anchor="middle" >20K</text>
<text transform="translate(658.00,1053.90) scale(0.87,1)" font-size="9.8" fill="#262626" text-anchor="middle" >30K</text>
<text transform="translate(700.30,1054.60) scale(0.93,1)" font-size="9.6" fill="#262626" text-anchor="start" >Hz</text>
<rect x="722.70" y="824.00" width="14.60" height="220.40" fill="#f3f3f3" />
<line x1="736.80" y1="824.00" x2="736.80" y2="1044.40" stroke="#cfcfcf" stroke-width="1" />
<rect x="722.70" y="824.00" width="14.60" height="12.50" fill="#e2e2e2" />
<line x1="722.70" y1="824.50" x2="737.30" y2="824.50" stroke="#ffffff" stroke-width="1" />
<line x1="723.20" y1="824.00" x2="723.20" y2="836.50" stroke="#ffffff" stroke-width="1" />
<line x1="722.70" y1="836.00" x2="737.30" y2="836.00" stroke="#7c7c7c" stroke-width="1" />
<line x1="736.80" y1="824.00" x2="736.80" y2="836.50" stroke="#7c7c7c" stroke-width="1" />
<polygon points="727.40,832.06 732.60,832.06 730.00,828.94" fill="#101010"/>
<rect x="722.70" y="1031.40" width="14.60" height="13.00" fill="#e2e2e2" />
<line x1="722.70" y1="1031.90" x2="737.30" y2="1031.90" stroke="#ffffff" stroke-width="1" />
<line x1="723.20" y1="1031.40" x2="723.20" y2="1044.40" stroke="#ffffff" stroke-width="1" />
<line x1="722.70" y1="1043.90" x2="737.30" y2="1043.90" stroke="#7c7c7c" stroke-width="1" />
<line x1="736.80" y1="1031.40" x2="736.80" y2="1044.40" stroke="#7c7c7c" stroke-width="1" />
<polygon points="727.40,1036.34 732.60,1036.34 730.00,1039.46" fill="#101010"/>
<rect x="722.70" y="854.30" width="14.60" height="130.00" fill="#e3e3e3" />
<line x1="722.70" y1="854.80" x2="737.30" y2="854.80" stroke="#ffffff" stroke-width="1" />
<line x1="723.20" y1="854.30" x2="723.20" y2="984.30" stroke="#ffffff" stroke-width="1" />
<line x1="722.70" y1="983.80" x2="737.30" y2="983.80" stroke="#7c7c7c" stroke-width="1" />
<line x1="736.80" y1="854.30" x2="736.80" y2="984.30" stroke="#7c7c7c" stroke-width="1" />
<rect x="722.70" y="1045.00" width="14.60" height="13.60" fill="#e4e4e4" />
<line x1="722.70" y1="1045.50" x2="737.30" y2="1045.50" stroke="#ffffff" stroke-width="1" />
<line x1="723.20" y1="1045.00" x2="723.20" y2="1058.60" stroke="#ffffff" stroke-width="1" />
<line x1="722.70" y1="1058.10" x2="737.30" y2="1058.10" stroke="#7c7c7c" stroke-width="1" />
<line x1="736.80" y1="1045.00" x2="736.80" y2="1058.60" stroke="#7c7c7c" stroke-width="1" />
<circle cx="729.40" cy="1051.00" r="3.7" fill="#f2f2f2" stroke="#0c0c0c" stroke-width="1.8"/>
<line x1="732.30" y1="1053.90" x2="735.00" y2="1056.60" stroke="#0c0c0c" stroke-width="2.2" stroke-linecap="round"/>
<line x1="727.10" y1="1051.00" x2="731.70" y2="1051.00" stroke="#0c0c0c" stroke-width="1.5" />
<line x1="729.40" y1="1048.70" x2="729.40" y2="1053.30" stroke="#0c0c0c" stroke-width="1.5" />
<rect x="0.00" y="1059.00" width="738.00" height="15.00" fill="#f6f6f6" />
<rect x="-3.00" y="1059.30" width="13.50" height="14.50" fill="#e2e2e2" />
<line x1="-3.00" y1="1059.80" x2="10.50" y2="1059.80" stroke="#ffffff" stroke-width="1" />
<line x1="-2.50" y1="1059.30" x2="-2.50" y2="1073.80" stroke="#ffffff" stroke-width="1" />
<line x1="-3.00" y1="1073.30" x2="10.50" y2="1073.30" stroke="#7c7c7c" stroke-width="1" />
<line x1="10.00" y1="1059.30" x2="10.00" y2="1073.80" stroke="#7c7c7c" stroke-width="1" />
<polygon points="4.76,1064.00 4.76,1069.20 1.64,1066.60" fill="#101010"/>
<rect x="137.70" y="1059.30" width="536.80" height="14.50" fill="#e6e6e6" />
<line x1="137.70" y1="1059.80" x2="674.50" y2="1059.80" stroke="#ffffff" stroke-width="1" />
<line x1="138.20" y1="1059.30" x2="138.20" y2="1073.80" stroke="#ffffff" stroke-width="1" />
<line x1="137.70" y1="1073.30" x2="674.50" y2="1073.30" stroke="#7c7c7c" stroke-width="1" />
<line x1="674.00" y1="1059.30" x2="674.00" y2="1073.80" stroke="#7c7c7c" stroke-width="1" />
<rect x="677.00" y="1059.30" width="13.50" height="14.50" fill="#e2e2e2" />
<line x1="677.00" y1="1059.80" x2="690.50" y2="1059.80" stroke="#ffffff" stroke-width="1" />
<line x1="677.50" y1="1059.30" x2="677.50" y2="1073.80" stroke="#ffffff" stroke-width="1" />
<line x1="677.00" y1="1073.30" x2="690.50" y2="1073.30" stroke="#7c7c7c" stroke-width="1" />
<line x1="690.00" y1="1059.30" x2="690.00" y2="1073.80" stroke="#7c7c7c" stroke-width="1" />
<polygon points="683.04,1064.00 683.04,1069.20 686.16,1066.60" fill="#101010"/>
<rect x="691.00" y="1059.30" width="15.40" height="14.50" fill="#e4e4e4" />
<line x1="691.00" y1="1059.80" x2="706.40" y2="1059.80" stroke="#ffffff" stroke-width="1" />
<line x1="691.50" y1="1059.30" x2="691.50" y2="1073.80" stroke="#ffffff" stroke-width="1" />
<line x1="691.00" y1="1073.30" x2="706.40" y2="1073.30" stroke="#7c7c7c" stroke-width="1" />
<line x1="705.90" y1="1059.30" x2="705.90" y2="1073.80" stroke="#7c7c7c" stroke-width="1" />
<circle cx="698.10" cy="1065.75" r="3.7" fill="#f2f2f2" stroke="#0c0c0c" stroke-width="1.8"/>
<line x1="701.00" y1="1068.65" x2="703.70" y2="1071.35" stroke="#0c0c0c" stroke-width="2.2" stroke-linecap="round"/>
<line x1="695.80" y1="1065.75" x2="700.40" y2="1065.75" stroke="#0c0c0c" stroke-width="1.5" />
<line x1="698.10" y1="1063.45" x2="698.10" y2="1068.05" stroke="#0c0c0c" stroke-width="1.5" />
<rect x="706.60" y="1059.30" width="15.40" height="14.50" fill="#e4e4e4" />
<line x1="706.60" y1="1059.80" x2="722.00" y2="1059.80" stroke="#ffffff" stroke-width="1" />
<line x1="707.10" y1="1059.30" x2="707.10" y2="1073.80" stroke="#ffffff" stroke-width="1" />
<line x1="706.60" y1="1073.30" x2="722.00" y2="1073.30" stroke="#7c7c7c" stroke-width="1" />
<line x1="721.50" y1="1059.30" x2="721.50" y2="1073.80" stroke="#7c7c7c" stroke-width="1" />
<circle cx="713.70" cy="1065.75" r="3.7" fill="#f2f2f2" stroke="#0c0c0c" stroke-width="1.8"/>
<line x1="716.60" y1="1068.65" x2="719.30" y2="1071.35" stroke="#0c0c0c" stroke-width="2.2" stroke-linecap="round"/>
<line x1="711.40" y1="1065.75" x2="716.00" y2="1065.75" stroke="#0c0c0c" stroke-width="1.5" />
<rect x="722.20" y="1059.30" width="15.20" height="14.50" fill="#e4e4e4" />
<line x1="722.20" y1="1059.80" x2="737.40" y2="1059.80" stroke="#ffffff" stroke-width="1" />
<line x1="722.70" y1="1059.30" x2="722.70" y2="1073.80" stroke="#ffffff" stroke-width="1" />
<line x1="722.20" y1="1073.30" x2="737.40" y2="1073.30" stroke="#7c7c7c" stroke-width="1" />
<line x1="736.90" y1="1059.30" x2="736.90" y2="1073.80" stroke="#7c7c7c" stroke-width="1" />
<circle cx="729.20" cy="1065.75" r="3.7" fill="#f2f2f2" stroke="#0c0c0c" stroke-width="1.8"/>
<line x1="732.10" y1="1068.65" x2="734.80" y2="1071.35" stroke="#0c0c0c" stroke-width="2.2" stroke-linecap="round"/>
<line x1="726.90" y1="1065.75" x2="731.50" y2="1065.75" stroke="#0c0c0c" stroke-width="1.5" />
<rect x="225.50" y="1076.60" width="29.50" height="3.40" fill="#eeeeea" />
<rect x="258.80" y="1076.60" width="20.20" height="3.40" fill="#eeeeea" />
<rect x="283.00" y="1076.60" width="19.00" height="3.40" fill="#eeeeea" />
<rect x="306.00" y="1076.60" width="20.50" height="3.40" fill="#eeeeea" />
<rect x="264.00" y="1078.00" width="8.00" height="2.00" fill="#2a3a9a" />
<rect x="363.50" y="1077.20" width="60.10" height="2.80" fill="#c4c4c0" />
<rect x="755.00" y="841.00" width="419.00" height="239.00" fill="url(#panel)" />
<rect x="1031.60" y="890.00" width="6.00" height="190.00" fill="#d8dcc9" opacity="0.7"/>
<rect x="1107.40" y="890.00" width="5.80" height="190.00" fill="#d8dcc9" opacity="0.7"/>
<rect x="755.00" y="841.00" width="419.00" height="20.50" fill="url(#hdr)" />
<text x="757.80" y="854.40" font-size="10.2" fill="#8e8e8e" text-anchor="start" textLength="76.6" lengthAdjust="spacingAndGlyphs" >Результаты теста</text>
<text x="765.30" y="876.10" font-size="9.6" fill="#1e1e1e" text-anchor="start" textLength="52.0" lengthAdjust="spacingAndGlyphs" >Устройство:</text>
<text x="765.30" y="902.70" font-size="9.6" fill="#1e1e1e" text-anchor="start" textLength="65.0" lengthAdjust="spacingAndGlyphs" >Режим работы:</text>
<text x="765.30" y="921.10" font-size="9.6" fill="#1e1e1e" text-anchor="start" textLength="157.6" lengthAdjust="spacingAndGlyphs" >Частотный диапазон (мультитон), дБ</text>
<text x="765.30" y="938.30" font-size="9.6" fill="#1e1e1e" text-anchor="start" textLength="83.6" lengthAdjust="spacingAndGlyphs" >Уровень шума, дБА</text>
<text x="765.30" y="959.10" font-size="9.6" fill="#1e1e1e" text-anchor="start" textLength="128.7" lengthAdjust="spacingAndGlyphs" >Динамический диапазон, дБА</text>
<text x="765.30" y="978.30" font-size="9.6" fill="#1e1e1e" text-anchor="start" textLength="127.4" lengthAdjust="spacingAndGlyphs" >Гармонические искажения, %</text>
<text x="765.30" y="996.60" font-size="9.6" fill="#1e1e1e" text-anchor="start" textLength="182.7" lengthAdjust="spacingAndGlyphs" >Интермодуляционные искажения + шум, %</text>
<text x="765.30" y="1015.20" font-size="9.6" fill="#1e1e1e" text-anchor="start" textLength="164.6" lengthAdjust="spacingAndGlyphs" >Взаимное проникновение каналов, дБ</text>
<text x="765.30" y="1033.90" font-size="9.6" fill="#1e1e1e" text-anchor="start" textLength="178.5" lengthAdjust="spacingAndGlyphs" >Интермодуляция (переменная частота), %</text>
<text x="765.30" y="1053.30" font-size="9.6" fill="#1e1e1e" text-anchor="start" textLength="179.5" lengthAdjust="spacingAndGlyphs" >Частотный диапазон (плавающий тон), дБ</text>
<text x="765.30" y="1072.90" font-size="9.6" fill="#1e1e1e" text-anchor="start" textLength="178.4" lengthAdjust="spacingAndGlyphs" >Гармонические искажения (набор частот)</text>
<rect x="961.50" y="864.30" width="71.20" height="25.30" fill="#fbfbf9" />
<line x1="961.50" y1="864.80" x2="1032.70" y2="864.80" stroke="#7e8076" stroke-width="1" />
<line x1="962.00" y1="864.30" x2="962.00" y2="889.60" stroke="#7e8076" stroke-width="1" />
<line x1="961.50" y1="889.10" x2="1032.70" y2="889.10" stroke="#ffffff" stroke-width="1" />
<line x1="1032.20" y1="864.30" x2="1032.20" y2="889.60" stroke="#ffffff" stroke-width="1" />
<rect x="1037.00" y="864.30" width="71.60" height="25.30" fill="#fbfbf9" />
<line x1="1037.00" y1="864.80" x2="1108.60" y2="864.80" stroke="#7e8076" stroke-width="1" />
<line x1="1037.50" y1="864.30" x2="1037.50" y2="889.60" stroke="#7e8076" stroke-width="1" />
<line x1="1037.00" y1="889.10" x2="1108.60" y2="889.10" stroke="#ffffff" stroke-width="1" />
<line x1="1108.10" y1="864.30" x2="1108.10" y2="889.60" stroke="#ffffff" stroke-width="1" />
<rect x="1113.00" y="864.30" width="71.00" height="25.30" fill="#fbfbf9" />
<line x1="1113.00" y1="864.80" x2="1184.00" y2="864.80" stroke="#7e8076" stroke-width="1" />
<line x1="1113.50" y1="864.30" x2="1113.50" y2="889.60" stroke="#7e8076" stroke-width="1" />
<line x1="1113.00" y1="889.10" x2="1184.00" y2="889.10" stroke="#ffffff" stroke-width="1" />
<line x1="1183.50" y1="864.30" x2="1183.50" y2="889.60" stroke="#ffffff" stroke-width="1" />
<text x="995.40" y="875.30" font-size="9.6" fill="#1e1e1e" text-anchor="middle" textLength="64.0" lengthAdjust="spacingAndGlyphs" >[ASIO] Focusrite</text>
<text x="997.20" y="885.80" font-size="9.6" fill="#1e1e1e" text-anchor="middle" textLength="40.5" lengthAdjust="spacingAndGlyphs" >USB ASIO</text>
<text x="1072.80" y="875.30" font-size="9.6" fill="#1e1e1e" text-anchor="middle" textLength="29.5" lengthAdjust="spacingAndGlyphs" >[Empty]</text>
<text x="1148.20" y="875.30" font-size="9.6" fill="#1e1e1e" text-anchor="middle" textLength="29.5" lengthAdjust="spacingAndGlyphs" >[Empty]</text>
<text x="996.80" y="902.70" font-size="9.6" fill="#1e1e1e" text-anchor="middle" textLength="55.0" lengthAdjust="spacingAndGlyphs" >24-bit, 96 kHz</text>
<rect x="963.00" y="911.60" width="67.80" height="12.80" fill="#c8cdb3" />
<line x1="963.00" y1="912.10" x2="1030.80" y2="912.10" stroke="#9fa391" stroke-width="1" />
<line x1="963.50" y1="911.60" x2="963.50" y2="924.40" stroke="#9fa391" stroke-width="1" />
<line x1="963.00" y1="923.90" x2="1030.80" y2="923.90" stroke="#ffffff" stroke-width="1" />
<line x1="1030.30" y1="911.60" x2="1030.30" y2="924.40" stroke="#ffffff" stroke-width="1" />
<rect x="1038.90" y="911.60" width="67.80" height="12.80" fill="#c8cdb3" />
<line x1="1038.90" y1="912.10" x2="1106.70" y2="912.10" stroke="#9fa391" stroke-width="1" />
<line x1="1039.40" y1="911.60" x2="1039.40" y2="924.40" stroke="#9fa391" stroke-width="1" />
<line x1="1038.90" y1="923.90" x2="1106.70" y2="923.90" stroke="#ffffff" stroke-width="1" />
<line x1="1106.20" y1="911.60" x2="1106.20" y2="924.40" stroke="#ffffff" stroke-width="1" />
<rect x="1114.20" y="911.60" width="69.80" height="12.80" fill="#c8cdb3" />
<line x1="1114.20" y1="912.10" x2="1184.00" y2="912.10" stroke="#9fa391" stroke-width="1" />
<line x1="1114.70" y1="911.60" x2="1114.70" y2="924.40" stroke="#9fa391" stroke-width="1" />
<line x1="1114.20" y1="923.90" x2="1184.00" y2="923.90" stroke="#ffffff" stroke-width="1" />
<line x1="1183.50" y1="911.60" x2="1183.50" y2="924.40" stroke="#ffffff" stroke-width="1" />
<text transform="translate(997.30,921.30) scale(0.9,1)" font-size="10" fill="#1e1e1e" text-anchor="middle" >+0.17, -0.17</text>
<rect x="963.00" y="929.00" width="67.80" height="12.60" fill="#c8cdb3" />
<line x1="963.00" y1="929.50" x2="1030.80" y2="929.50" stroke="#9fa391" stroke-width="1" />
<line x1="963.50" y1="929.00" x2="963.50" y2="941.60" stroke="#9fa391" stroke-width="1" />
<line x1="963.00" y1="941.10" x2="1030.80" y2="941.10" stroke="#ffffff" stroke-width="1" />
<line x1="1030.30" y1="929.00" x2="1030.30" y2="941.60" stroke="#ffffff" stroke-width="1" />
<rect x="1038.90" y="929.00" width="67.80" height="12.60" fill="#c8cdb3" />
<line x1="1038.90" y1="929.50" x2="1106.70" y2="929.50" stroke="#9fa391" stroke-width="1" />
<line x1="1039.40" y1="929.00" x2="1039.40" y2="941.60" stroke="#9fa391" stroke-width="1" />
<line x1="1038.90" y1="941.10" x2="1106.70" y2="941.10" stroke="#ffffff" stroke-width="1" />
<line x1="1106.20" y1="929.00" x2="1106.20" y2="941.60" stroke="#ffffff" stroke-width="1" />
<rect x="1114.20" y="929.00" width="69.80" height="12.60" fill="#c8cdb3" />
<line x1="1114.20" y1="929.50" x2="1184.00" y2="929.50" stroke="#9fa391" stroke-width="1" />
<line x1="1114.70" y1="929.00" x2="1114.70" y2="941.60" stroke="#9fa391" stroke-width="1" />
<line x1="1114.20" y1="941.10" x2="1184.00" y2="941.10" stroke="#ffffff" stroke-width="1" />
<line x1="1183.50" y1="929.00" x2="1183.50" y2="941.60" stroke="#ffffff" stroke-width="1" />
<text transform="translate(997.30,938.60) scale(0.9,1)" font-size="10" fill="#1e1e1e" text-anchor="middle" >-93.6</text>
<rect x="963.00" y="950.20" width="67.80" height="12.60" fill="#c8cdb3" />
<line x1="963.00" y1="950.70" x2="1030.80" y2="950.70" stroke="#9fa391" stroke-width="1" />
<line x1="963.50" y1="950.20" x2="963.50" y2="962.80" stroke="#9fa391" stroke-width="1" />
<line x1="963.00" y1="962.30" x2="1030.80" y2="962.30" stroke="#ffffff" stroke-width="1" />
<line x1="1030.30" y1="950.20" x2="1030.30" y2="962.80" stroke="#ffffff" stroke-width="1" />
<rect x="1038.90" y="950.20" width="67.80" height="12.60" fill="#c8cdb3" />
<line x1="1038.90" y1="950.70" x2="1106.70" y2="950.70" stroke="#9fa391" stroke-width="1" />
<line x1="1039.40" y1="950.20" x2="1039.40" y2="962.80" stroke="#9fa391" stroke-width="1" />
<line x1="1038.90" y1="962.30" x2="1106.70" y2="962.30" stroke="#ffffff" stroke-width="1" />
<line x1="1106.20" y1="950.20" x2="1106.20" y2="962.80" stroke="#ffffff" stroke-width="1" />
<rect x="1114.20" y="950.20" width="69.80" height="12.60" fill="#c8cdb3" />
<line x1="1114.20" y1="950.70" x2="1184.00" y2="950.70" stroke="#9fa391" stroke-width="1" />
<line x1="1114.70" y1="950.20" x2="1114.70" y2="962.80" stroke="#9fa391" stroke-width="1" />
<line x1="1114.20" y1="962.30" x2="1184.00" y2="962.30" stroke="#ffffff" stroke-width="1" />
<line x1="1183.50" y1="950.20" x2="1183.50" y2="962.80" stroke="#ffffff" stroke-width="1" />
<text transform="translate(997.30,959.80) scale(0.9,1)" font-size="10" fill="#1e1e1e" text-anchor="middle" >93.4</text>
<rect x="963.00" y="968.40" width="67.80" height="13.10" fill="#c8cdb3" />
<line x1="963.00" y1="968.90" x2="1030.80" y2="968.90" stroke="#9fa391" stroke-width="1" />
<line x1="963.50" y1="968.40" x2="963.50" y2="981.50" stroke="#9fa391" stroke-width="1" />
<line x1="963.00" y1="981.00" x2="1030.80" y2="981.00" stroke="#ffffff" stroke-width="1" />
<line x1="1030.30" y1="968.40" x2="1030.30" y2="981.50" stroke="#ffffff" stroke-width="1" />
<rect x="1038.90" y="968.40" width="67.80" height="13.10" fill="#c8cdb3" />
<line x1="1038.90" y1="968.90" x2="1106.70" y2="968.90" stroke="#9fa391" stroke-width="1" />
<line x1="1039.40" y1="968.40" x2="1039.40" y2="981.50" stroke="#9fa391" stroke-width="1" />
<line x1="1038.90" y1="981.00" x2="1106.70" y2="981.00" stroke="#ffffff" stroke-width="1" />
<line x1="1106.20" y1="968.40" x2="1106.20" y2="981.50" stroke="#ffffff" stroke-width="1" />
<rect x="1114.20" y="968.40" width="69.80" height="13.10" fill="#c8cdb3" />
<line x1="1114.20" y1="968.90" x2="1184.00" y2="968.90" stroke="#9fa391" stroke-width="1" />
<line x1="1114.70" y1="968.40" x2="1114.70" y2="981.50" stroke="#9fa391" stroke-width="1" />
<line x1="1114.20" y1="981.00" x2="1184.00" y2="981.00" stroke="#ffffff" stroke-width="1" />
<line x1="1183.50" y1="968.40" x2="1183.50" y2="981.50" stroke="#ffffff" stroke-width="1" />
<text transform="translate(997.30,978.25) scale(0.9,1)" font-size="10" fill="#1e1e1e" text-anchor="middle" >0.0042</text>
<rect x="963.00" y="987.70" width="67.80" height="13.10" fill="#c8cdb3" />
<line x1="963.00" y1="988.20" x2="1030.80" y2="988.20" stroke="#9fa391" stroke-width="1" />
<line x1="963.50" y1="987.70" x2="963.50" y2="1000.80" stroke="#9fa391" stroke-width="1" />
<line x1="963.00" y1="1000.30" x2="1030.80" y2="1000.30" stroke="#ffffff" stroke-width="1" />
<line x1="1030.30" y1="987.70" x2="1030.30" y2="1000.80" stroke="#ffffff" stroke-width="1" />
<rect x="1038.90" y="987.70" width="67.80" height="13.10" fill="#c8cdb3" />
<line x1="1038.90" y1="988.20" x2="1106.70" y2="988.20" stroke="#9fa391" stroke-width="1" />
<line x1="1039.40" y1="987.70" x2="1039.40" y2="1000.80" stroke="#9fa391" stroke-width="1" />
<line x1="1038.90" y1="1000.30" x2="1106.70" y2="1000.30" stroke="#ffffff" stroke-width="1" />
<line x1="1106.20" y1="987.70" x2="1106.20" y2="1000.80" stroke="#ffffff" stroke-width="1" />
<rect x="1114.20" y="987.70" width="69.80" height="13.10" fill="#c8cdb3" />
<line x1="1114.20" y1="988.20" x2="1184.00" y2="988.20" stroke="#9fa391" stroke-width="1" />
<line x1="1114.70" y1="987.70" x2="1114.70" y2="1000.80" stroke="#9fa391" stroke-width="1" />
<line x1="1114.20" y1="1000.30" x2="1184.00" y2="1000.30" stroke="#ffffff" stroke-width="1" />
<line x1="1183.50" y1="987.70" x2="1183.50" y2="1000.80" stroke="#ffffff" stroke-width="1" />
<text transform="translate(997.30,997.55) scale(0.9,1)" font-size="10" fill="#1e1e1e" text-anchor="middle" >0.0073</text>
<rect x="963.00" y="1005.30" width="67.80" height="13.10" fill="#c8cdb3" />
<line x1="963.00" y1="1005.80" x2="1030.80" y2="1005.80" stroke="#9fa391" stroke-width="1" />
<line x1="963.50" y1="1005.30" x2="963.50" y2="1018.40" stroke="#9fa391" stroke-width="1" />
<line x1="963.00" y1="1017.90" x2="1030.80" y2="1017.90" stroke="#ffffff" stroke-width="1" />
<line x1="1030.30" y1="1005.30" x2="1030.30" y2="1018.40" stroke="#ffffff" stroke-width="1" />
<rect x="1038.90" y="1005.30" width="67.80" height="13.10" fill="#c8cdb3" />
<line x1="1038.90" y1="1005.80" x2="1106.70" y2="1005.80" stroke="#9fa391" stroke-width="1" />
<line x1="1039.40" y1="1005.30" x2="1039.40" y2="1018.40" stroke="#9fa391" stroke-width="1" />
<line x1="1038.90" y1="1017.90" x2="1106.70" y2="1017.90" stroke="#ffffff" stroke-width="1" />
<line x1="1106.20" y1="1005.30" x2="1106.20" y2="1018.40" stroke="#ffffff" stroke-width="1" />
<rect x="1114.20" y="1005.30" width="69.80" height="13.10" fill="#c8cdb3" />
<line x1="1114.20" y1="1005.80" x2="1184.00" y2="1005.80" stroke="#9fa391" stroke-width="1" />
<line x1="1114.70" y1="1005.30" x2="1114.70" y2="1018.40" stroke="#9fa391" stroke-width="1" />
<line x1="1114.20" y1="1017.90" x2="1184.00" y2="1017.90" stroke="#ffffff" stroke-width="1" />
<line x1="1183.50" y1="1005.30" x2="1183.50" y2="1018.40" stroke="#ffffff" stroke-width="1" />
<text transform="translate(997.30,1015.15) scale(0.9,1)" font-size="10" fill="#1e1e1e" text-anchor="middle" >-80.6</text>
<rect x="963.00" y="1024.60" width="67.80" height="13.10" fill="#c8cdb3" />
<line x1="963.00" y1="1025.10" x2="1030.80" y2="1025.10" stroke="#9fa391" stroke-width="1" />
<line x1="963.50" y1="1024.60" x2="963.50" y2="1037.70" stroke="#9fa391" stroke-width="1" />
<line x1="963.00" y1="1037.20" x2="1030.80" y2="1037.20" stroke="#ffffff" stroke-width="1" />
<line x1="1030.30" y1="1024.60" x2="1030.30" y2="1037.70" stroke="#ffffff" stroke-width="1" />
<rect x="1038.90" y="1024.60" width="67.80" height="13.10" fill="#c8cdb3" />
<line x1="1038.90" y1="1025.10" x2="1106.70" y2="1025.10" stroke="#9fa391" stroke-width="1" />
<line x1="1039.40" y1="1024.60" x2="1039.40" y2="1037.70" stroke="#9fa391" stroke-width="1" />
<line x1="1038.90" y1="1037.20" x2="1106.70" y2="1037.20" stroke="#ffffff" stroke-width="1" />
<line x1="1106.20" y1="1024.60" x2="1106.20" y2="1037.70" stroke="#ffffff" stroke-width="1" />
<rect x="1114.20" y="1024.60" width="69.80" height="13.10" fill="#c8cdb3" />
<line x1="1114.20" y1="1025.10" x2="1184.00" y2="1025.10" stroke="#9fa391" stroke-width="1" />
<line x1="1114.70" y1="1024.60" x2="1114.70" y2="1037.70" stroke="#9fa391" stroke-width="1" />
<line x1="1114.20" y1="1037.20" x2="1184.00" y2="1037.20" stroke="#ffffff" stroke-width="1" />
<line x1="1183.50" y1="1024.60" x2="1183.50" y2="1037.70" stroke="#ffffff" stroke-width="1" />
<text transform="translate(997.30,1034.45) scale(0.9,1)" font-size="10" fill="#1e1e1e" text-anchor="middle" >0.0083</text>
<rect x="963.00" y="1043.90" width="67.80" height="13.10" fill="#c8cdb3" />
<line x1="963.00" y1="1044.40" x2="1030.80" y2="1044.40" stroke="#9fa391" stroke-width="1" />
<line x1="963.50" y1="1043.90" x2="963.50" y2="1057.00" stroke="#9fa391" stroke-width="1" />
<line x1="963.00" y1="1056.50" x2="1030.80" y2="1056.50" stroke="#ffffff" stroke-width="1" />
<line x1="1030.30" y1="1043.90" x2="1030.30" y2="1057.00" stroke="#ffffff" stroke-width="1" />
<rect x="1038.90" y="1043.90" width="67.80" height="13.10" fill="#c8cdb3" />
<line x1="1038.90" y1="1044.40" x2="1106.70" y2="1044.40" stroke="#9fa391" stroke-width="1" />
<line x1="1039.40" y1="1043.90" x2="1039.40" y2="1057.00" stroke="#9fa391" stroke-width="1" />
<line x1="1038.90" y1="1056.50" x2="1106.70" y2="1056.50" stroke="#ffffff" stroke-width="1" />
<line x1="1106.20" y1="1043.90" x2="1106.20" y2="1057.00" stroke="#ffffff" stroke-width="1" />
<rect x="1114.20" y="1043.90" width="69.80" height="13.10" fill="#c8cdb3" />
<line x1="1114.20" y1="1044.40" x2="1184.00" y2="1044.40" stroke="#9fa391" stroke-width="1" />
<line x1="1114.70" y1="1043.90" x2="1114.70" y2="1057.00" stroke="#9fa391" stroke-width="1" />
<line x1="1114.20" y1="1056.50" x2="1184.00" y2="1056.50" stroke="#ffffff" stroke-width="1" />
<line x1="1183.50" y1="1043.90" x2="1183.50" y2="1057.00" stroke="#ffffff" stroke-width="1" />
<text transform="translate(997.30,1053.75) scale(0.9,1)" font-size="10" fill="#1e1e1e" text-anchor="middle" >+0.0, -0.2</text>
<rect x="963.00" y="1063.40" width="67.80" height="13.10" fill="#c8cdb3" />
<line x1="963.00" y1="1063.90" x2="1030.80" y2="1063.90" stroke="#9fa391" stroke-width="1" />
<line x1="963.50" y1="1063.40" x2="963.50" y2="1076.50" stroke="#9fa391" stroke-width="1" />
<line x1="963.00" y1="1076.00" x2="1030.80" y2="1076.00" stroke="#ffffff" stroke-width="1" />
<line x1="1030.30" y1="1063.40" x2="1030.30" y2="1076.50" stroke="#ffffff" stroke-width="1" />
<rect x="1038.90" y="1063.40" width="67.80" height="13.10" fill="#c8cdb3" />
<line x1="1038.90" y1="1063.90" x2="1106.70" y2="1063.90" stroke="#9fa391" stroke-width="1" />
<line x1="1039.40" y1="1063.40" x2="1039.40" y2="1076.50" stroke="#9fa391" stroke-width="1" />
<line x1="1038.90" y1="1076.00" x2="1106.70" y2="1076.00" stroke="#ffffff" stroke-width="1" />
<line x1="1106.20" y1="1063.40" x2="1106.20" y2="1076.50" stroke="#ffffff" stroke-width="1" />
<rect x="1114.20" y="1063.40" width="69.80" height="13.10" fill="#c8cdb3" />
<line x1="1114.20" y1="1063.90" x2="1184.00" y2="1063.90" stroke="#9fa391" stroke-width="1" />
<line x1="1114.70" y1="1063.40" x2="1114.70" y2="1076.50" stroke="#9fa391" stroke-width="1" />
<line x1="1114.20" y1="1076.00" x2="1184.00" y2="1076.00" stroke="#ffffff" stroke-width="1" />
<line x1="1183.50" y1="1063.40" x2="1183.50" y2="1076.50" stroke="#ffffff" stroke-width="1" />
</svg></body></html>
